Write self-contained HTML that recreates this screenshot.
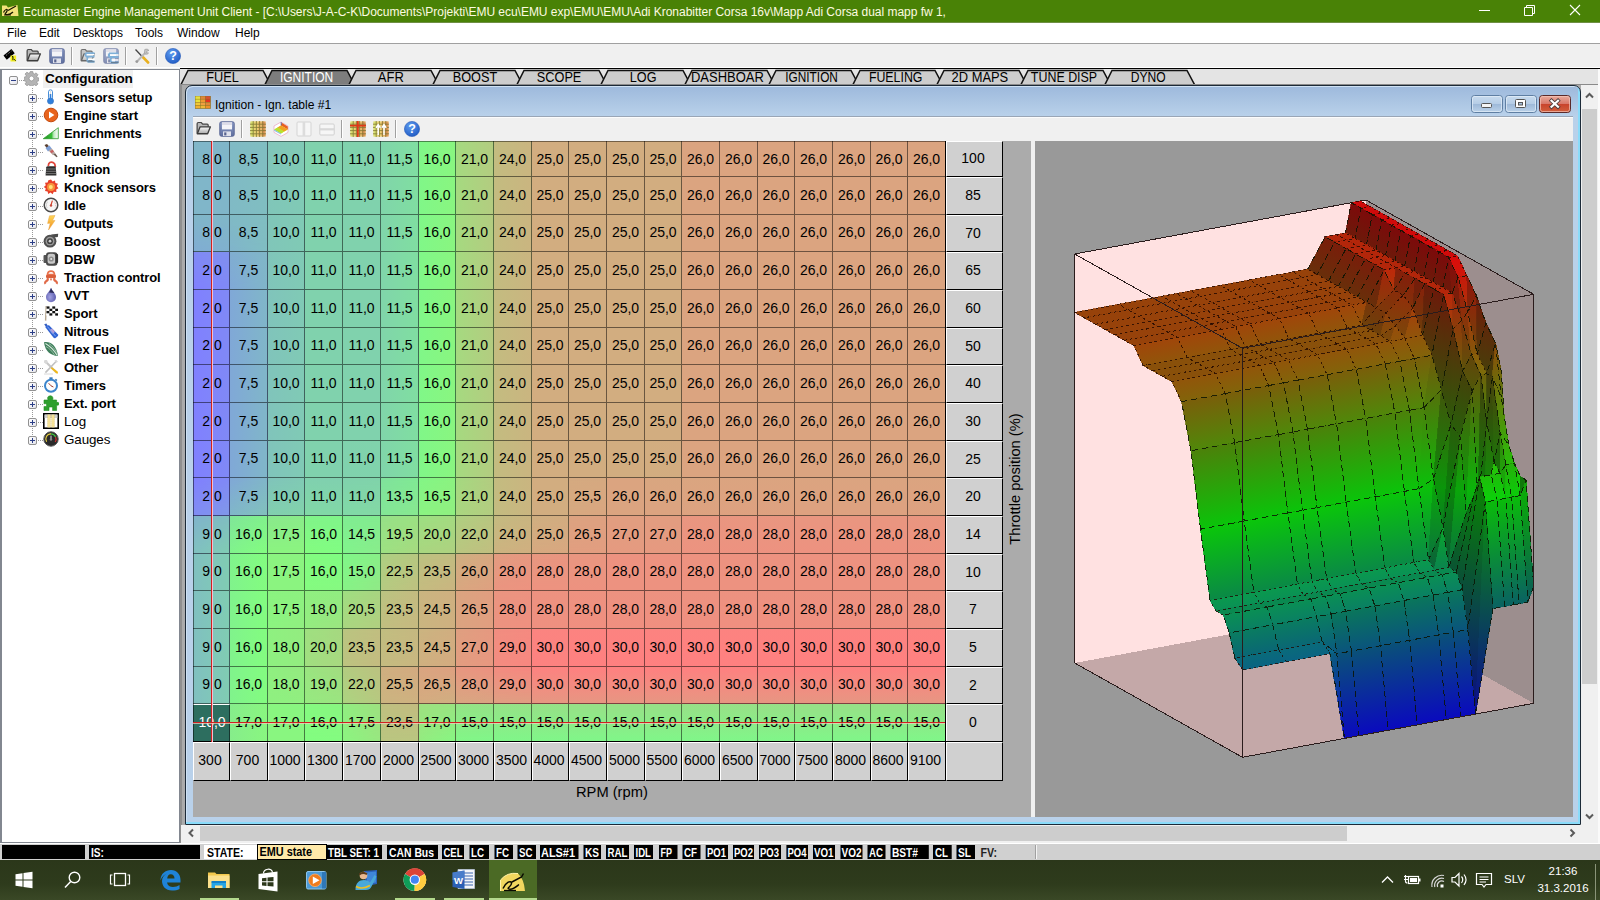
<!DOCTYPE html>
<html><head><meta charset="utf-8"><title>Ecumaster Engine Management Unit Client</title>
<style>
*{box-sizing:border-box;margin:0;padding:0}
html,body{width:1600px;height:900px;overflow:hidden;background:#f0f0f0;font-family:"Liberation Sans",sans-serif;}
.a{position:absolute}
#title{left:0;top:0;width:1600px;height:22px;background:#498206;color:#fdfbe0;font-size:12px;line-height:24px;white-space:nowrap;letter-spacing:-.026px}
#menubar{left:0;top:22px;width:1600px;height:21px;background:#fff;font-size:12px;color:#000}
#menubar span{position:absolute;top:4px;line-height:14px}
#tool{left:0;top:43px;width:1600px;height:26px;background:#f0f0f0;border-top:1px solid #a0a0a0}
#tree{left:0;top:69px;width:180px;height:774px;background:#fff;border:1px solid #828790;border-left:2px solid #828790}
.tn{position:absolute;left:64px;font-weight:bold;font-size:13px;line-height:18px;white-space:nowrap;color:#000;letter-spacing:-.1px}
.pm{width:9px;height:9px;border:1px solid #919191;border-radius:2px;background:linear-gradient(135deg,#fff,#e4e4ec)}
.pm i{position:absolute;background:#2c3f87}
.cell{position:absolute;font-size:14px;text-align:center;color:#000;white-space:nowrap;overflow:hidden;border-right:1px solid rgba(0,0,0,.5);border-bottom:1px solid rgba(0,0,0,.5)}
.cell b{position:relative;font-weight:normal}
.cell i{position:absolute;left:0;top:0;right:0;bottom:0;-webkit-mask-image:linear-gradient(180deg,transparent,#000);mask-image:linear-gradient(180deg,transparent,#000)}
.hd{position:absolute;background:#d0d0d0;border-top:1px solid #fff;border-left:1px solid #fff;border-right:1px solid #000;border-bottom:1px solid #000;font-size:14px;text-align:center;padding-right:3px;color:#000;white-space:nowrap}
.sb{position:absolute;top:845px;height:14px;background:#000;color:#fff;font-weight:bold;font-size:12px;line-height:15px;white-space:nowrap;overflow:hidden;padding-left:1px}
</style></head><body>

<div class="a" id="title"><span class="a" id="ttxt" style="left:23px;top:0">Ecumaster Engine Management Unit Client - [C:\Users\J-A-C-K\Documents\Projekti\EMU ecu\EMU exp\EMU\EMU\Adi Kronabitter Corsa 16v\Mapp Adi Corsa dual mapp fw 1,</span></div>
<div class="a" style="left:0;top:22px;width:1600px;height:1px;background:#6f8f45;z-index:2"></div>
<svg class="a" style="left:0;top:0" width="1600" height="22" viewBox="0 0 1600 22"><path d="M1479 10.500H1490" stroke="#fff" stroke-width="1"/><path d="M1524.500 7.500h8v8h-8zM1526.500 7.500v-2h8v8h-2" fill="none" stroke="#fff" stroke-width="1"/><path d="M1570 5L1580 15M1580 5L1570 15" stroke="#fff" stroke-width="1.100"/><path d="M2 5.500L6.500 5.500L8 7.500L17.500 5L18.500 16L2 16Z" fill="#f4e27a"/><path d="M3.500 12.500C5 9 8 8.500 7 11C6 13.500 4 14 6 14.500C9 15 12 13 13 12M8 10.500L16 6" fill="none" stroke="#1a1a00" stroke-width="1.300"/><path d="M4 15H11" stroke="#1a1a00" stroke-width="1"/></svg>
<div class="a" id="menubar">
<span style="left:7px">File</span>
<span style="left:39px">Edit</span>
<span style="left:73px">Desktops</span>
<span style="left:135px">Tools</span>
<span style="left:177px">Window</span>
<span style="left:235px">Help</span>
</div>
<div class="a" id="tool"></div>
<div class="a" style="left:0;top:67px;width:1600px;height:1px;background:#fff"></div>
<svg class="a" style="left:3px;top:48px" width="15" height="15" viewBox="0 0 16 16"><path d="M0.5 8 L9 1 L12.5 5.5 L4 12.5Z" fill="#000"/><path d="M3.4 7.8 L9 3.2" stroke="#fff" stroke-width=".7" stroke-dasharray="1 1.2"/><rect x="8" y="8" width="6" height="6.4" fill="#f4f020"/><path d="M9.6 9.4 L10.6 9 V13 M12 12 L13.4 13.6" stroke="#000" stroke-width="1" fill="none"/></svg>
<svg class="a" style="left:25px;top:48px" width="17" height="15" viewBox="0 0 16 16"><defs><linearGradient id="fga" x1="0" y1="0" x2="0" y2="1"><stop offset="0" stop-color="#fdfdfd"/><stop offset="1" stop-color="#a8a8a8"/></linearGradient></defs><path d="M1.2 13.2 V3 Q1.2 1.600 2.600 1.600 H5.600 L7.200 3.400 H12 Q13 3.400 13 4.600 V6.400" fill="#b9b9b9" stroke="#454545" stroke-width="1.300"/><path d="M1.4 13.600 L4.400 6.200 H15.400 L12.400 13.600Z" fill="url(#fga)" stroke="#3c3c3c" stroke-width="1.400" stroke-linejoin="round"/></svg>
<svg class="a" style="left:49px;top:48px" width="16" height="16" viewBox="0 0 16 16"><defs><linearGradient id="fla" x1="0" y1="0" x2="0" y2="1"><stop offset="0" stop-color="#8f9fc8"/><stop offset="1" stop-color="#5f6f9f"/></linearGradient></defs><rect x="0.8" y="0.8" width="14.4" height="14.4" rx="1.6" fill="url(#fla)" stroke="#5b6796" stroke-width="1"/><rect x="3" y="1.4" width="10" height="7" fill="#f4f4f8"/><rect x="3" y="1.4" width="10" height="2.6" fill="#dcdce8"/><rect x="4" y="10.4" width="8" height="4.6" fill="#e0e2ec"/><rect x="5.2" y="11.4" width="2.2" height="3" fill="#59648f"/></svg>
<div class="a" style="left:71px;top:47px;width:1px;height:18px;background:#a0a0a0"></div><div class="a" style="left:72px;top:47px;width:1px;height:18px;background:#fff"></div>
<svg class="a" style="left:79px;top:48px" width="17" height="15" viewBox="0 0 16 16"><g opacity=".75"><defs><linearGradient id="fgb" x1="0" y1="0" x2="0" y2="1"><stop offset="0" stop-color="#fdfdfd"/><stop offset="1" stop-color="#a8a8a8"/></linearGradient></defs><path d="M1.2 13.2 V3 Q1.2 1.600 2.600 1.600 H5.600 L7.200 3.400 H12 Q13 3.400 13 4.600 V6.400" fill="#b9b9b9" stroke="#454545" stroke-width="1.300"/><path d="M1.4 13.600 L4.400 6.200 H15.400 L12.400 13.600Z" fill="url(#fgb)" stroke="#3c3c3c" stroke-width="1.400" stroke-linejoin="round"/></g><path d="M6 5.5 H15.5 M6 5.5 V9 M6 9 H15.5 M8 9 V14.5 M8 14.5 H15.5" stroke="#7fb0d8" stroke-width="2.2" fill="none"/><path d="M7 7 H15.5 M8.5 12 H15.5" stroke="#fff" stroke-width="1.4"/><path d="M8 14.6 H15.5" stroke="#5a6a7a" stroke-width=".8"/></svg>
<svg class="a" style="left:103px;top:48px" width="16" height="16" viewBox="0 0 16 16"><g opacity=".75"><defs><linearGradient id="flb" x1="0" y1="0" x2="0" y2="1"><stop offset="0" stop-color="#8f9fc8"/><stop offset="1" stop-color="#5f6f9f"/></linearGradient></defs><rect x="0.8" y="0.8" width="14.4" height="14.4" rx="1.6" fill="url(#flb)" stroke="#5b6796" stroke-width="1"/><rect x="3" y="1.4" width="10" height="7" fill="#f4f4f8"/><rect x="3" y="1.4" width="10" height="2.6" fill="#dcdce8"/><rect x="4" y="10.4" width="8" height="4.6" fill="#e0e2ec"/><rect x="5.2" y="11.4" width="2.2" height="3" fill="#59648f"/></g><path d="M6 5.5 H15.5 M6 5.5 V9 M6 9 H15.5 M8 9 V14.5 M8 14.5 H15.5" stroke="#7fb0d8" stroke-width="2.2" fill="none"/><path d="M7 7 H15.5 M8.5 12 H15.5" stroke="#fff" stroke-width="1.4"/><path d="M8 14.6 H15.5" stroke="#5a6a7a" stroke-width=".8"/></svg>
<div class="a" style="left:125px;top:47px;width:1px;height:18px;background:#a0a0a0"></div><div class="a" style="left:126px;top:47px;width:1px;height:18px;background:#fff"></div>
<svg class="a" style="left:134px;top:48px" width="16" height="16" viewBox="0 0 16 16"><path d="M1.5 1.5 L10 10.5" stroke="#444" stroke-width="1.3"/><path d="M9.2 9.4 L14 14.4" stroke="#e8b020" stroke-width="2.8" stroke-linecap="round"/><path d="M12.2 3.8 L2.6 14" stroke="#b8b8b8" stroke-width="2"/><path d="M10.8 1.4 Q13.4 0.2 15 2.4 L13 3 L12.6 4.6 L14.6 5 Q13.6 6.8 11.2 6.2 Q9.8 4 10.8 1.4Z" fill="#c4c4c4" stroke="#8a8a8a" stroke-width=".5"/><circle cx="2.8" cy="13.6" r="1.4" fill="#9a9a9a"/></svg>
<div class="a" style="left:156px;top:47px;width:1px;height:18px;background:#a0a0a0"></div><div class="a" style="left:157px;top:47px;width:1px;height:18px;background:#fff"></div>
<svg class="a" style="left:165px;top:48px" width="16" height="16" viewBox="0 0 16 16"><defs><radialGradient id="hpa" cx=".4" cy=".3" r=".8"><stop offset="0" stop-color="#5f9cf0"/><stop offset="1" stop-color="#1a55c0"/></radialGradient></defs><circle cx="8" cy="8" r="7.6" fill="url(#hpa)" stroke="#2a5db8" stroke-width=".6"/><text x="8" y="12.4" text-anchor="middle" font-family="Liberation Sans, sans-serif" font-weight="bold" font-size="12.5" fill="#fff">?</text></svg>
<div class="a" id="tree"></div>
<div class="a" style="left:32px;top:88px;width:1px;height:348px;background:repeating-linear-gradient(#999 0,#999 1px,transparent 1px,transparent 2px)"></div>
<div class="a" style="left:19px;top:80px;width:5px;height:1px;background:repeating-linear-gradient(90deg,#999 0,#999 1px,transparent 1px,transparent 2px)"></div>
<div class="a pm" style="left:9px;top:76px"><i style="left:1px;top:3px;width:5px;height:1px"></i></div>
<svg class="a" style="left:24px;top:71px" width="15" height="15" viewBox="0 0 16 16"><path d="M6.6 0.6h2.8l.4 2 1.4.6 1.7-1.2 2 2-1.2 1.7.6 1.4 2 .4v2.8l-2 .4-.6 1.4 1.2 1.7-2 2-1.7-1.2-1.4.6-.4 2H6.600l-.4-2-1.400-.6-1.700 1.200-2-2 1.200-1.700-.6-1.400-2-.4V6.700l2-.4.6-1.400L1.100 3.200l2-2 1.700 1.200 1.400-.6z" fill="#b4b4b4" stroke="#8c8c8c" stroke-width=".7"/><circle cx="8" cy="8" r="2.6" fill="#fff" stroke="#8c8c8c" stroke-width=".7"/></svg>
<div class="tn" style="left:43px;top:70px;width:90px;height:18px;font-size:13.6px;background:#f0f0f0;padding-left:2px">Configuration</div>
<div class="a pm" style="left:28px;top:94px"><i style="left:1px;top:3px;width:5px;height:1px"></i><i style="left:3px;top:1px;width:1px;height:5px"></i></div>
<div class="a" style="left:38px;top:98px;width:5px;height:1px;background:repeating-linear-gradient(90deg,#999 0,#999 1px,transparent 1px,transparent 2px)"></div>
<svg class="a" style="left:43px;top:89px" width="16" height="16" viewBox="0 0 16 16"><rect x="5.5" y="0.8" width="4" height="10" rx="2" fill="#fff" stroke="#4a8fd8" stroke-width="1"/><circle cx="7.5" cy="12" r="3" fill="#2f7fdc" stroke="#3b78c4" stroke-width=".8"/><rect x="6.7" y="5" width="1.6" height="6" fill="#2f7fdc"/><path d="M7 3h1M7 5h1" stroke="#888" stroke-width=".5"/></svg>
<div class="tn" style="top:89px;">Sensors setup</div>
<div class="a pm" style="left:28px;top:112px"><i style="left:1px;top:3px;width:5px;height:1px"></i><i style="left:3px;top:1px;width:1px;height:5px"></i></div>
<div class="a" style="left:38px;top:116px;width:5px;height:1px;background:repeating-linear-gradient(90deg,#999 0,#999 1px,transparent 1px,transparent 2px)"></div>
<svg class="a" style="left:43px;top:107px" width="16" height="16" viewBox="0 0 16 16"><circle cx="8" cy="8" r="6.8" fill="#e8631c"/><circle cx="8" cy="8" r="6.8" fill="none" stroke="#c44a0e" stroke-width="1"/><path d="M6 4.6 L11.4 8 L6 11.4Z" fill="#fff"/></svg>
<div class="tn" style="top:107px;">Engine start</div>
<div class="a pm" style="left:28px;top:130px"><i style="left:1px;top:3px;width:5px;height:1px"></i><i style="left:3px;top:1px;width:1px;height:5px"></i></div>
<div class="a" style="left:38px;top:134px;width:5px;height:1px;background:repeating-linear-gradient(90deg,#999 0,#999 1px,transparent 1px,transparent 2px)"></div>
<svg class="a" style="left:43px;top:125px" width="16" height="16" viewBox="0 0 16 16"><defs><linearGradient id="enr" x1="0" x2="1"><stop offset="0" stop-color="#1f8a1f"/><stop offset=".55" stop-color="#38c038"/><stop offset=".7" stop-color="#bfeabf"/><stop offset="1" stop-color="#fff"/></linearGradient></defs><path d="M0.3 13.7 L15.3 2.7 V13.7Z" fill="url(#enr)" stroke="#2c9a2c" stroke-width=".8"/></svg>
<div class="tn" style="top:125px;">Enrichments</div>
<div class="a pm" style="left:28px;top:148px"><i style="left:1px;top:3px;width:5px;height:1px"></i><i style="left:3px;top:1px;width:1px;height:5px"></i></div>
<div class="a" style="left:38px;top:152px;width:5px;height:1px;background:repeating-linear-gradient(90deg,#999 0,#999 1px,transparent 1px,transparent 2px)"></div>
<svg class="a" style="left:43px;top:143px" width="16" height="16" viewBox="0 0 16 16"><path d="M1.5 2 L4 1 L6 3.2 L4 5.5Z" fill="#5a4030"/><path d="M2.5 5 L6.5 2.5 L9 6 L5 8.5Z" fill="#7d9fd6"/><path d="M5.5 7.5 L8.8 5.5 L12.5 10.5 L10 12.2Z" fill="#b9a6a0"/><path d="M7 8.3 L9.6 6.7 L11 8.6 L8.4 10.2Z" fill="#c76060"/><path d="M10.4 11.6 L12.3 10.4 L14.6 13.4 L13.6 14.2Z" fill="#6a5a50"/></svg>
<div class="tn" style="top:143px;">Fueling</div>
<div class="a pm" style="left:28px;top:166px"><i style="left:1px;top:3px;width:5px;height:1px"></i><i style="left:3px;top:1px;width:1px;height:5px"></i></div>
<div class="a" style="left:38px;top:170px;width:5px;height:1px;background:repeating-linear-gradient(90deg,#999 0,#999 1px,transparent 1px,transparent 2px)"></div>
<svg class="a" style="left:43px;top:161px" width="16" height="16" viewBox="0 0 16 16"><path d="M5.5 5 C5 1.5 8 0.2 10.5 1.8 C12.5 3 12.2 5 12.3 6" fill="none" stroke="#e0453a" stroke-width="1.8"/><path d="M2.6 14.5 L3.2 6.5 Q3.4 5.2 5 5.2 H11 Q12.6 5.2 12.8 6.5 L13.4 14.5Z" fill="#2b2b2b"/><path d="M3 8h10M2.9 10.3h10.3M2.8 12.6h10.5" stroke="#8a8a8a" stroke-width=".8"/></svg>
<div class="tn" style="top:161px;">Ignition</div>
<div class="a pm" style="left:28px;top:184px"><i style="left:1px;top:3px;width:5px;height:1px"></i><i style="left:3px;top:1px;width:1px;height:5px"></i></div>
<div class="a" style="left:38px;top:188px;width:5px;height:1px;background:repeating-linear-gradient(90deg,#999 0,#999 1px,transparent 1px,transparent 2px)"></div>
<svg class="a" style="left:43px;top:179px" width="16" height="16" viewBox="0 0 16 16"><path d="M8 0.6 L9.6 2.4 L12 1.6 L12.4 4 L15 4.8 L13.8 7 L15.4 9.2 L13.2 10.4 L13.4 13 L10.8 12.8 L9.6 15.2 L7.6 13.6 L5.2 15 L4.6 12.4 L2 12 L2.8 9.6 L0.8 8 L2.8 6.2 L2 3.8 L4.6 3.6 L5.4 1.2Z" fill="#e8402a"/><circle cx="8" cy="8" r="4" fill="#f8923a"/><circle cx="7.8" cy="8" r="2" fill="#ffe27a"/></svg>
<div class="tn" style="top:179px;">Knock sensors</div>
<div class="a pm" style="left:28px;top:202px"><i style="left:1px;top:3px;width:5px;height:1px"></i><i style="left:3px;top:1px;width:1px;height:5px"></i></div>
<div class="a" style="left:38px;top:206px;width:5px;height:1px;background:repeating-linear-gradient(90deg,#999 0,#999 1px,transparent 1px,transparent 2px)"></div>
<svg class="a" style="left:43px;top:197px" width="16" height="16" viewBox="0 0 16 16"><circle cx="8" cy="8" r="6.8" fill="#f6f6f6" stroke="#4a4a4a" stroke-width="1.5"/><path d="M8 8 L9.4 3.6" stroke="#d8402a" stroke-width="1.2"/><circle cx="8" cy="8.5" r="1.2" fill="#c84a3a"/><path d="M4 10.5 A4.6 4.6 0 0 1 5 4.6" fill="none" stroke="#999" stroke-width=".8" stroke-dasharray="1 1"/><path d="M11 4.6 A4.6 4.6 0 0 1 12 10.5" fill="none" stroke="#e09090" stroke-width=".8" stroke-dasharray="1 1"/></svg>
<div class="tn" style="top:197px;">Idle</div>
<div class="a pm" style="left:28px;top:220px"><i style="left:1px;top:3px;width:5px;height:1px"></i><i style="left:3px;top:1px;width:1px;height:5px"></i></div>
<div class="a" style="left:38px;top:224px;width:5px;height:1px;background:repeating-linear-gradient(90deg,#999 0,#999 1px,transparent 1px,transparent 2px)"></div>
<svg class="a" style="left:43px;top:215px" width="16" height="16" viewBox="0 0 16 16"><defs><linearGradient id="outp" x1="0" y1="0" x2="0" y2="1"><stop offset="0" stop-color="#ffd95a"/><stop offset="1" stop-color="#f08a1c"/></linearGradient></defs><path d="M6.5 0.8 L12 0.5 L9.5 5.5 L12 5.5 L5.5 15 L7.2 8.2 L4.6 8.4Z" fill="url(#outp)" stroke="#e8a848" stroke-width=".5"/></svg>
<div class="tn" style="top:215px;">Outputs</div>
<div class="a pm" style="left:28px;top:238px"><i style="left:1px;top:3px;width:5px;height:1px"></i><i style="left:3px;top:1px;width:1px;height:5px"></i></div>
<div class="a" style="left:38px;top:242px;width:5px;height:1px;background:repeating-linear-gradient(90deg,#999 0,#999 1px,transparent 1px,transparent 2px)"></div>
<svg class="a" style="left:43px;top:233px" width="16" height="16" viewBox="0 0 16 16"><path d="M8 1.6 L15.2 0.8 L14.8 4 L11 4.6Z" fill="#4a4a4a"/><circle cx="7" cy="8.2" r="6.4" fill="#4f4f4f"/><circle cx="7" cy="8.2" r="4.4" fill="#9a9a9a"/><circle cx="7" cy="8.2" r="2.9" fill="#3f3f3f"/><circle cx="7" cy="8.2" r="1.4" fill="#d0d0d0"/></svg>
<div class="tn" style="top:233px;">Boost</div>
<div class="a pm" style="left:28px;top:256px"><i style="left:1px;top:3px;width:5px;height:1px"></i><i style="left:3px;top:1px;width:1px;height:5px"></i></div>
<div class="a" style="left:38px;top:260px;width:5px;height:1px;background:repeating-linear-gradient(90deg,#999 0,#999 1px,transparent 1px,transparent 2px)"></div>
<svg class="a" style="left:43px;top:251px" width="16" height="16" viewBox="0 0 16 16"><rect x="0.5" y="4" width="4" height="8" rx="1" fill="#555"/><rect x="3" y="1.2" width="11.5" height="13.5" rx="3" fill="#4a4a4a"/><rect x="4.6" y="2.8" width="7.6" height="10" rx="2.5" fill="#c9c9c9"/><circle cx="8.2" cy="8" r="2.6" fill="#8d8d8d"/><circle cx="8.2" cy="8" r="1" fill="#e8e8e8"/><rect x="12.5" y="3" width="2.6" height="9" rx="1" fill="#333"/></svg>
<div class="tn" style="top:251px;">DBW</div>
<div class="a pm" style="left:28px;top:274px"><i style="left:1px;top:3px;width:5px;height:1px"></i><i style="left:3px;top:1px;width:1px;height:5px"></i></div>
<div class="a" style="left:38px;top:278px;width:5px;height:1px;background:repeating-linear-gradient(90deg,#999 0,#999 1px,transparent 1px,transparent 2px)"></div>
<svg class="a" style="left:43px;top:269px" width="16" height="16" viewBox="0 0 16 16"><path d="M3.6 5.5 Q4 1.2 8 1.2 Q12 1.2 12.4 5.5 L12.8 8 H3.2Z" fill="#e8714c"/><path d="M5.4 4.8 Q5.6 3 8 3 Q10.4 3 10.6 4.8Z" fill="#fff"/><rect x="3" y="6" width="10" height="3" rx="1" fill="#d95f3c"/><path d="M4.5 9 Q5.5 11 3.2 12.2 Q1.4 13.4 2.6 14.8 M11.5 9 Q10.5 11 12.8 12.2 Q14.6 13.4 13.4 14.8" fill="none" stroke="#e06a48" stroke-width="2.2"/><path d="M6.6 9.5 L8 12 L9.4 9.5Z" fill="#e8714c"/></svg>
<div class="tn" style="top:269px;">Traction control</div>
<div class="a pm" style="left:28px;top:292px"><i style="left:1px;top:3px;width:5px;height:1px"></i><i style="left:3px;top:1px;width:1px;height:5px"></i></div>
<div class="a" style="left:38px;top:296px;width:5px;height:1px;background:repeating-linear-gradient(90deg,#999 0,#999 1px,transparent 1px,transparent 2px)"></div>
<svg class="a" style="left:43px;top:287px" width="16" height="16" viewBox="0 0 16 16"><defs><radialGradient id="vvt" cx=".4" cy=".65" r=".6"><stop offset="0" stop-color="#a0a0e0"/><stop offset="1" stop-color="#5c5cae"/></radialGradient></defs><path d="M8 0.8 C8.8 4 13 6.6 13 10.2 A5 5 0 0 1 3 10.2 C3 6.6 7.2 4 8 0.8Z" fill="url(#vvt)"/><path d="M8 0.8 C8.6 3 10.4 4.6 11.4 6 L6 5.4 C7 4 7.6 2.6 8 0.8Z" fill="#2c2c5a"/></svg>
<div class="tn" style="top:287px;">VVT</div>
<div class="a pm" style="left:28px;top:310px"><i style="left:1px;top:3px;width:5px;height:1px"></i><i style="left:3px;top:1px;width:1px;height:5px"></i></div>
<div class="a" style="left:38px;top:314px;width:5px;height:1px;background:repeating-linear-gradient(90deg,#999 0,#999 1px,transparent 1px,transparent 2px)"></div>
<svg class="a" style="left:43px;top:305px" width="16" height="16" viewBox="0 0 16 16"><path d="M3.2 1 L2.6 15.6" stroke="#b8a890" stroke-width="1.4"/><path d="M3.6 1.4 H15 V10.6 H3.2Z" fill="#fff"/><g fill="#111"><rect x="3.6" y="1.4" width="2.9" height="2.3"/><rect x="9.3" y="1.4" width="2.9" height="2.3"/><rect x="6.4" y="3.7" width="2.9" height="2.3"/><rect x="12.2" y="3.7" width="2.8" height="2.3"/><rect x="3.5" y="6" width="2.9" height="2.3"/><rect x="9.3" y="6" width="2.9" height="2.3"/><rect x="6.4" y="8.3" width="2.9" height="2.3"/><rect x="12.2" y="8.3" width="2.8" height="2.3"/></g></svg>
<div class="tn" style="top:305px;">Sport</div>
<div class="a pm" style="left:28px;top:328px"><i style="left:1px;top:3px;width:5px;height:1px"></i><i style="left:3px;top:1px;width:1px;height:5px"></i></div>
<div class="a" style="left:38px;top:332px;width:5px;height:1px;background:repeating-linear-gradient(90deg,#999 0,#999 1px,transparent 1px,transparent 2px)"></div>
<svg class="a" style="left:43px;top:323px" width="16" height="16" viewBox="0 0 16 16"><path d="M1.2 1.2 L3.4 0.6 L4.6 2.6 L3 4Z" fill="#3a62c0"/><path d="M2.6 4.4 Q2.4 3 4 2.6 L6 2.2 L15 11.4 Q15.6 12.6 14.4 13.6 L12.6 15 Q11.4 15.6 10.4 14.6Z" fill="#2f63d4"/><path d="M6.4 7 L9 5.4 L12 9 L9.4 10.8Z" fill="#b9a0d8"/><path d="M4.4 3.6 L12.6 13.2" stroke="#7fa6f0" stroke-width="1"/></svg>
<div class="tn" style="top:323px;">Nitrous</div>
<div class="a pm" style="left:28px;top:346px"><i style="left:1px;top:3px;width:5px;height:1px"></i><i style="left:3px;top:1px;width:1px;height:5px"></i></div>
<div class="a" style="left:38px;top:350px;width:5px;height:1px;background:repeating-linear-gradient(90deg,#999 0,#999 1px,transparent 1px,transparent 2px)"></div>
<svg class="a" style="left:43px;top:341px" width="16" height="16" viewBox="0 0 16 16"><path d="M1 1.2 C7 0 13.5 4 15 14.8 C9 15 2 11 1 1.2Z" fill="#3f7f5c"/><path d="M2.4 2.4 C7 5 11 9 14 14" fill="none" stroke="#d8eadc" stroke-width="1.1"/><path d="M3 5.5 C6 7 9 10 11.5 14M6 2.6 C9 4.6 12 8 13.6 11.5" fill="none" stroke="#a8c8b0" stroke-width=".8"/></svg>
<div class="tn" style="top:341px;">Flex Fuel</div>
<div class="a pm" style="left:28px;top:364px"><i style="left:1px;top:3px;width:5px;height:1px"></i><i style="left:3px;top:1px;width:1px;height:5px"></i></div>
<div class="a" style="left:38px;top:368px;width:5px;height:1px;background:repeating-linear-gradient(90deg,#999 0,#999 1px,transparent 1px,transparent 2px)"></div>
<svg class="a" style="left:43px;top:359px" width="16" height="16" viewBox="0 0 16 16"><path d="M2 2 L13.5 13.5" stroke="#c8c8c8" stroke-width="2.2"/><path d="M1.4 1 L4 1 L5 3.6 L3 5 L1 3.6Z" fill="#d8d8d8"/><path d="M13.8 1.8 L2.4 13.6" stroke="#c0c0c0" stroke-width="1.6"/><path d="M8.6 8 L14.6 12.6 Q15.6 14 14.2 15 L8 9.6Z" fill="#f0b818"/><path d="M11.4 1 Q14 0.6 15 3 L13 3.4 L12.4 2.6Z" fill="#d8d8d8"/><path d="M1 15 H10" stroke="#d8d8d8" stroke-width="1"/></svg>
<div class="tn" style="top:359px;">Other</div>
<div class="a pm" style="left:28px;top:382px"><i style="left:1px;top:3px;width:5px;height:1px"></i><i style="left:3px;top:1px;width:1px;height:5px"></i></div>
<div class="a" style="left:38px;top:386px;width:5px;height:1px;background:repeating-linear-gradient(90deg,#999 0,#999 1px,transparent 1px,transparent 2px)"></div>
<svg class="a" style="left:43px;top:377px" width="16" height="16" viewBox="0 0 16 16"><rect x="6.4" y="0.3" width="3.2" height="2" fill="#3a78b8"/><path d="M12.4 2.2 L13.8 3.6" stroke="#3a78b8" stroke-width="1.6"/><circle cx="8" cy="8.8" r="6" fill="#fdfdfd" stroke="#3b85cc" stroke-width="2"/><path d="M8 8.8 L5.6 6.2 M8 8.8 L10.4 10" stroke="#a04030" stroke-width="1"/></svg>
<div class="tn" style="top:377px;">Timers</div>
<div class="a pm" style="left:28px;top:400px"><i style="left:1px;top:3px;width:5px;height:1px"></i><i style="left:3px;top:1px;width:1px;height:5px"></i></div>
<div class="a" style="left:38px;top:404px;width:5px;height:1px;background:repeating-linear-gradient(90deg,#999 0,#999 1px,transparent 1px,transparent 2px)"></div>
<svg class="a" style="left:43px;top:395px" width="16" height="16" viewBox="0 0 16 16"><path d="M1 5 H5 Q3.8 2.4 5.6 1.2 Q7.6 0.2 9.2 1.4 Q10.6 2.8 9.6 5 H13.6 V7.6 Q15.6 6.6 16 8.6 Q16 11 13.6 10 V15.6 H9.6 V12 H6 V15.6 H1 V11.4 Q3.6 12.4 3.8 10 Q3.6 7.8 1 8.8Z" fill="#2e9f2e" stroke="#1f8a1f" stroke-width=".6"/></svg>
<div class="tn" style="top:395px;">Ext. port</div>
<div class="a pm" style="left:28px;top:418px"><i style="left:1px;top:3px;width:5px;height:1px"></i><i style="left:3px;top:1px;width:1px;height:5px"></i></div>
<div class="a" style="left:38px;top:422px;width:5px;height:1px;background:repeating-linear-gradient(90deg,#999 0,#999 1px,transparent 1px,transparent 2px)"></div>
<svg class="a" style="left:43px;top:413px" width="16" height="16" viewBox="0 0 16 16"><rect x="0.8" y="0.8" width="14.4" height="14.4" fill="#fff" stroke="#000" stroke-width="1.6"/><rect x="1.6" y="1.6" width="12.8" height="3.4" fill="#d0d0d0"/><rect x="4.6" y="1.6" width="2.8" height="12.8" fill="#f7e49a"/><rect x="8.6" y="1.6" width="2.8" height="12.8" fill="#f7e49a"/><path d="M4.6 1.6v12.8M7.4 1.6v12.8M8.6 1.6v12.8M11.4 1.6v12.8" stroke="#c8a850" stroke-width=".5" stroke-dasharray="1 1"/></svg>
<div class="tn" style="top:413px;font-weight:normal;font-size:13.4px;">Log</div>
<div class="a pm" style="left:28px;top:436px"><i style="left:1px;top:3px;width:5px;height:1px"></i><i style="left:3px;top:1px;width:1px;height:5px"></i></div>
<div class="a" style="left:38px;top:440px;width:5px;height:1px;background:repeating-linear-gradient(90deg,#999 0,#999 1px,transparent 1px,transparent 2px)"></div>
<svg class="a" style="left:43px;top:431px" width="16" height="16" viewBox="0 0 16 16"><circle cx="8" cy="8" r="7.2" fill="#2a2a2a"/><circle cx="8" cy="8" r="7.2" fill="none" stroke="#555" stroke-width="1"/><path d="M3.6 10.8 A5.2 5.2 0 0 1 8 2.8" fill="none" stroke="#e8d040" stroke-width="1.2"/><path d="M8 2.8 A5.2 5.2 0 0 1 12.6 6" fill="none" stroke="#40c040" stroke-width="1.2"/><path d="M12.6 6 A5.2 5.2 0 0 1 12.2 11" fill="none" stroke="#d83030" stroke-width="1.2"/><path d="M8 8.4 V4.6" stroke="#ddd" stroke-width="1"/><circle cx="8" cy="8.6" r="1.2" fill="#888"/></svg>
<div class="tn" style="top:431px;font-weight:normal;font-size:13.4px;">Gauges</div>
<div class="a" style="left:180px;top:68px;width:1420px;height:1px;background:#000"></div>
<div class="a" style="left:180px;top:69px;width:1420px;height:16px;background:#e4e4e4"></div>
<svg class="a" style="left:180px;top:69px" width="1420" height="15" font-family="Liberation Sans, sans-serif" font-size="14">
<polygon points="1,15.500 8,1.500 83,1.500 90.5,15.500" fill="#cdcdcd"/><polyline points="1,15.500 8,1.500 83,1.500 90.5,15.500" fill="none" stroke="#111" stroke-width="1.500"/>
<polygon points="85,15.500 92,1.500 167,1.500 174.5,15.500" fill="#7d7d7d"/><polyline points="85,15.500 92,1.500 167,1.500 174.5,15.500" fill="none" stroke="#111" stroke-width="1.500"/>
<polygon points="169,15.500 176,1.500 251,1.500 258.5,15.500" fill="#cdcdcd"/><polyline points="169,15.500 176,1.500 251,1.500 258.5,15.500" fill="none" stroke="#111" stroke-width="1.500"/>
<polygon points="253,15.500 260,1.500 335,1.500 342.5,15.500" fill="#cdcdcd"/><polyline points="253,15.500 260,1.500 335,1.500 342.5,15.500" fill="none" stroke="#111" stroke-width="1.500"/>
<polygon points="337,15.500 344,1.500 419,1.500 426.5,15.500" fill="#cdcdcd"/><polyline points="337,15.500 344,1.500 419,1.500 426.5,15.500" fill="none" stroke="#111" stroke-width="1.500"/>
<polygon points="421,15.500 428,1.500 503,1.500 510.5,15.500" fill="#cdcdcd"/><polyline points="421,15.500 428,1.500 503,1.500 510.5,15.500" fill="none" stroke="#111" stroke-width="1.500"/>
<polygon points="505,15.500 512,1.500 587,1.500 594.5,15.500" fill="#cdcdcd"/><polyline points="505,15.500 512,1.500 587,1.500 594.5,15.500" fill="none" stroke="#111" stroke-width="1.500"/>
<polygon points="589,15.500 596,1.500 671,1.500 678.5,15.500" fill="#cdcdcd"/><polyline points="589,15.500 596,1.500 671,1.500 678.5,15.500" fill="none" stroke="#111" stroke-width="1.500"/>
<polygon points="673,15.500 680,1.500 755,1.500 762.5,15.500" fill="#cdcdcd"/><polyline points="673,15.500 680,1.500 755,1.500 762.5,15.500" fill="none" stroke="#111" stroke-width="1.500"/>
<polygon points="757,15.500 764,1.500 839,1.500 846.5,15.500" fill="#cdcdcd"/><polyline points="757,15.500 764,1.500 839,1.500 846.5,15.500" fill="none" stroke="#111" stroke-width="1.500"/>
<polygon points="841,15.500 848,1.500 923,1.500 930.5,15.500" fill="#cdcdcd"/><polyline points="841,15.500 848,1.500 923,1.500 930.5,15.500" fill="none" stroke="#111" stroke-width="1.500"/>
<polygon points="925,15.500 932,1.500 1007,1.500 1014.5,15.500" fill="#cdcdcd"/><polyline points="925,15.500 932,1.500 1007,1.500 1014.5,15.500" fill="none" stroke="#111" stroke-width="1.500"/>
<text x="42.5" y="13" text-anchor="middle" textLength="32.5" lengthAdjust="spacingAndGlyphs" fill="#000">FUEL</text>
<text x="126.6" y="13" text-anchor="middle" textLength="53.4" lengthAdjust="spacingAndGlyphs" fill="#fff">IGNITION</text>
<text x="210.8" y="13" text-anchor="middle" textLength="26.0" lengthAdjust="spacingAndGlyphs" fill="#000">AFR</text>
<text x="295.0" y="13" text-anchor="middle" textLength="44.5" lengthAdjust="spacingAndGlyphs" fill="#000">BOOST</text>
<text x="379.1" y="13" text-anchor="middle" textLength="44.5" lengthAdjust="spacingAndGlyphs" fill="#000">SCOPE</text>
<text x="463.2" y="13" text-anchor="middle" textLength="26.7" lengthAdjust="spacingAndGlyphs" fill="#000">LOG</text>
<text x="547.4" y="13" text-anchor="middle" textLength="72.8" lengthAdjust="spacingAndGlyphs" fill="#000">DASHBOAR</text>
<text x="631.6" y="13" text-anchor="middle" textLength="52.6" lengthAdjust="spacingAndGlyphs" fill="#000">IGNITION</text>
<text x="715.7" y="13" text-anchor="middle" textLength="53.6" lengthAdjust="spacingAndGlyphs" fill="#000">FUELING</text>
<text x="799.9" y="13" text-anchor="middle" textLength="56.6" lengthAdjust="spacingAndGlyphs" fill="#000">2D MAPS</text>
<text x="884.0" y="13" text-anchor="middle" textLength="66.3" lengthAdjust="spacingAndGlyphs" fill="#000">TUNE DISP</text>
<text x="968.2" y="13" text-anchor="middle" textLength="34.9" lengthAdjust="spacingAndGlyphs" fill="#000">DYNO</text>
</svg>
<div class="a" style="left:180px;top:84px;width:1419px;height:1px;background:#8a8a8a"></div>
<div class="a" style="left:180px;top:85px;width:1401px;height:740px;background:#ababab"></div>
<div class="a" style="left:185px;top:85px;width:1396px;height:740px;border:1px solid #1c2a38;border-radius:7px 7px 1px 1px;background:linear-gradient(#9db9dc 0,#b9d1ea 30px,#b9d1ea 100%);box-shadow:inset -2px -2px 0 #8adcfa,inset 1px 1px 0 #cfe2f4"></div>
<div class="a" style="left:193px;top:116px;width:1380px;height:25px;background:#f0f0f0"></div>
<div class="a" style="left:215px;top:98px;font-size:12.1px;color:#000;white-space:nowrap">Ignition - Ign. table #1</div>
<svg class="a" style="left:195px;top:96px" width="16" height="13" viewBox="0 0 16 13"><rect x="0" y="0" width="15.800" height="12.800" fill="#8a7428"/><rect x="0.4" y="0.3" width="4.6" height="2.6" fill="#e6e040"/><rect x="5.5" y="0.3" width="4.6" height="2.6" fill="#e08838"/><rect x="10.6" y="0.3" width="4.6" height="2.6" fill="#d85030"/><rect x="0.4" y="3.4" width="4.6" height="2.6" fill="#e8e038"/><rect x="5.5" y="3.4" width="4.6" height="2.6" fill="#f09830"/><rect x="10.6" y="3.4" width="4.6" height="2.6" fill="#e83020"/><rect x="0.4" y="6.5" width="4.6" height="2.6" fill="#f0c838"/><rect x="5.5" y="6.5" width="4.6" height="2.6" fill="#f0a040"/><rect x="10.6" y="6.5" width="4.6" height="2.6" fill="#e08838"/><rect x="0.4" y="9.6" width="4.6" height="2.6" fill="#f0b030"/><rect x="5.5" y="9.6" width="4.6" height="2.6" fill="#f0b838"/><rect x="10.6" y="9.6" width="4.6" height="2.6" fill="#f09028"/></svg>
<svg class="a" style="left:1465px;top:92px" width="112" height="24" viewBox="1465 92 112 24"><defs><linearGradient id="cb1" x1="0" y1="0" x2="0" y2="1"><stop offset="0" stop-color="#c9dcef"/><stop offset=".48" stop-color="#b6cde6"/><stop offset=".5" stop-color="#9db8d8"/><stop offset="1" stop-color="#bcd3ea"/></linearGradient><linearGradient id="cb2" x1="0" y1="0" x2="0" y2="1"><stop offset="0" stop-color="#e9ad9f"/><stop offset=".48" stop-color="#d9786a"/><stop offset=".5" stop-color="#c8432c"/><stop offset="1" stop-color="#d2603e"/></linearGradient></defs><rect x="1471.500" y="95.500" width="31" height="17" rx="3" fill="url(#cb1)" stroke="#5f7fa3"/><rect x="1472.500" y="96.500" width="29" height="15" rx="2" fill="none" stroke="#e4eef8" stroke-opacity=".7"/><rect x="1505.500" y="95.500" width="31" height="17" rx="3" fill="url(#cb1)" stroke="#5f7fa3"/><rect x="1506.500" y="96.500" width="29" height="15" rx="2" fill="none" stroke="#e4eef8" stroke-opacity=".7"/><rect x="1539.500" y="95.500" width="31" height="17" rx="3" fill="url(#cb2)" stroke="#5a2a2a"/><rect x="1540.500" y="96.500" width="29" height="15" rx="2" fill="none" stroke="#f4c4b8" stroke-opacity=".7"/><rect x="1481.500" y="103.500" width="10" height="4" rx="1" fill="#f4f4f4" stroke="#555" stroke-width="1"/><rect x="1515.500" y="99.500" width="10" height="8" rx="1" fill="#fff" stroke="#555" stroke-width="1"/><rect x="1518.500" y="102.500" width="4" height="2.500" fill="#a9c1de" stroke="#555" stroke-width="1"/><path d="M1551.500 100.700L1558 106.800M1558 100.700L1551.500 106.800" stroke="#4a3a3a" stroke-width="3.800" stroke-linecap="square"/><path d="M1551.500 100.700L1558 106.800M1558 100.700L1551.500 106.800" stroke="#fff" stroke-width="2.200" stroke-linecap="square"/></svg>
<div class="a" style="left:193px;top:116px;width:1380px;height:1px;background:#9aa6b6"></div><div class="a" style="left:193px;top:117px;width:1380px;height:1px;background:#fcfcfc"></div>
<svg class="a" style="left:195px;top:121px" width="17" height="15" viewBox="0 0 16 16"><defs><linearGradient id="fgc" x1="0" y1="0" x2="0" y2="1"><stop offset="0" stop-color="#fdfdfd"/><stop offset="1" stop-color="#a8a8a8"/></linearGradient></defs><path d="M1.2 13.2 V3 Q1.2 1.600 2.600 1.600 H5.600 L7.200 3.400 H12 Q13 3.400 13 4.600 V6.400" fill="#b9b9b9" stroke="#454545" stroke-width="1.300"/><path d="M1.4 13.600 L4.400 6.200 H15.400 L12.400 13.600Z" fill="url(#fgc)" stroke="#3c3c3c" stroke-width="1.400" stroke-linejoin="round"/></svg>
<svg class="a" style="left:219px;top:121px" width="16" height="16" viewBox="0 0 16 16"><defs><linearGradient id="flc" x1="0" y1="0" x2="0" y2="1"><stop offset="0" stop-color="#8f9fc8"/><stop offset="1" stop-color="#5f6f9f"/></linearGradient></defs><rect x="0.8" y="0.8" width="14.4" height="14.4" rx="1.6" fill="url(#flc)" stroke="#5b6796" stroke-width="1"/><rect x="3" y="1.4" width="10" height="7" fill="#f4f4f8"/><rect x="3" y="1.4" width="10" height="2.6" fill="#dcdce8"/><rect x="4" y="10.4" width="8" height="4.6" fill="#e0e2ec"/><rect x="5.2" y="11.4" width="2.2" height="3" fill="#59648f"/></svg>
<div class="a" style="left:241px;top:120px;width:1px;height:18px;background:#a0a0a0"></div><div class="a" style="left:242px;top:120px;width:1px;height:18px;background:#fff"></div>
<svg class="a" style="left:250px;top:121px" width="16" height="16" viewBox="0 0 16 16"><rect x="0.5" y="0.5" width="15" height="15" fill="#e9d98a"/><rect x="0.5" y="0.5" width="3.75" height="15" fill="#d8e070"/><rect x="4.2" y="0.5" width="3.75" height="15" fill="#e8d070"/><rect x="8.0" y="0.5" width="3.75" height="15" fill="#e8b868"/><rect x="11.8" y="0.5" width="3.75" height="15" fill="#e09858"/><path d="M0 3.2H16M0 6.4H16M0 9.6H16M0 12.8H16M3.2 0V16M6.4 0V16M9.6 0V16M12.8 0V16" stroke="#7a7030" stroke-width=".9" opacity=".85"/></svg>
<svg class="a" style="left:273px;top:121px" width="16" height="16" viewBox="0 0 16 16"><path d="M8 1 L15 5 V11.400 L8 15.400 L1 11.400 V5Z" fill="#fff" stroke="#e8a0c0" stroke-width=".7"/><path d="M1.2 8.6 L8 4.4 L14.8 8.4 L8 12.400Z" fill="#d8e838"/><path d="M8 4.4 L8.8 1.8 L14.8 5.4 V8.4Z" fill="#e86020"/><path d="M8 4.4 L14.8 8.4 L11 10.600 L4.600 6.600Z" fill="#f0a020"/><path d="M1.2 8.6 L4.6 6.6 L11 10.6 L8 12.4Z" fill="#b8e030"/><path d="M1.2 8.6 L8 12.4 V13.600 L1.200 9.800Z" fill="#80c0e0"/><path d="M8.2 1.2 L8.2 4.4" stroke="#404080" stroke-width=".8"/></svg>
<svg class="a" style="left:296px;top:121px" width="16" height="16" viewBox="0 0 16 16"><rect x="1" y="1" width="14" height="14" rx="1" fill="#f6f6f6" stroke="#d4d4d4" stroke-width="1"/><rect x="6.600" y="1" width="2.600" height="14" fill="#dcdcdc"/></svg>
<svg class="a" style="left:319px;top:121px" width="16" height="16" viewBox="0 0 16 16"><rect x="0.800" y="3" width="14.400" height="11" rx="1" fill="#f6f6f6" stroke="#d0d0d0" stroke-width="1"/><rect x="0.800" y="7.200" width="14.400" height="2.200" fill="#d8d8d8"/></svg>
<div class="a" style="left:341px;top:120px;width:1px;height:18px;background:#a0a0a0"></div><div class="a" style="left:342px;top:120px;width:1px;height:18px;background:#fff"></div>
<svg class="a" style="left:350px;top:121px" width="16" height="16" viewBox="0 0 16 16"><rect x="0.5" y="0.5" width="15" height="15" fill="#e9d98a"/><rect x="0.5" y="0.5" width="3.75" height="15" fill="#d8e070"/><rect x="4.2" y="0.5" width="3.75" height="15" fill="#e8d070"/><rect x="8.0" y="0.5" width="3.75" height="15" fill="#e8b868"/><rect x="11.8" y="0.5" width="3.75" height="15" fill="#e09858"/><path d="M0 3.2H16M0 6.4H16M0 9.6H16M0 12.8H16M3.2 0V16M6.4 0V16M9.6 0V16M12.8 0V16" stroke="#7a7030" stroke-width=".9" opacity=".85"/><path d="M0 4.6H16M7.8 0V16" stroke="#e03818" stroke-width="1.8"/></svg>
<svg class="a" style="left:373px;top:121px" width="16" height="16" viewBox="0 0 16 16"><rect x="0.5" y="0.5" width="15" height="15" fill="#e9d98a"/><rect x="0.5" y="0.5" width="3.75" height="15" fill="#d8e070"/><rect x="4.2" y="0.5" width="3.75" height="15" fill="#e8d070"/><rect x="8.0" y="0.5" width="3.75" height="15" fill="#e8b868"/><rect x="11.8" y="0.5" width="3.75" height="15" fill="#e09858"/><path d="M0 3.2H16M0 6.4H16M0 9.6H16M0 12.8H16M3.2 0V16M6.4 0V16M9.6 0V16M12.8 0V16" stroke="#7a7030" stroke-width=".9" opacity=".85"/><path d="M5.2 14V4.5M3 6.8L5.2 3.6L7.4 6.8M11 14V4.5M8.800 6.800L11 3.600L13.200 6.800" stroke="#fff" stroke-width="1.5" fill="none"/></svg>
<div class="a" style="left:395px;top:120px;width:1px;height:18px;background:#a0a0a0"></div><div class="a" style="left:396px;top:120px;width:1px;height:18px;background:#fff"></div>
<svg class="a" style="left:404px;top:121px" width="16" height="16" viewBox="0 0 16 16"><defs><radialGradient id="hpb" cx=".4" cy=".3" r=".8"><stop offset="0" stop-color="#5f9cf0"/><stop offset="1" stop-color="#1a55c0"/></radialGradient></defs><circle cx="8" cy="8" r="7.6" fill="url(#hpb)" stroke="#2a5db8" stroke-width=".6"/><text x="8" y="12.4" text-anchor="middle" font-family="Liberation Sans, sans-serif" font-weight="bold" font-size="12.5" fill="#fff">?</text></svg>
<div class="a" style="left:193px;top:141px;width:838px;height:676px;background:#ababab"></div>
<div class="a" style="left:1031px;top:141px;width:4px;height:676px;background:#f0f0f0"></div>
<div class="a" style="left:1035px;top:141px;width:538px;height:676px;background:#999"></div>
<svg class="a" style="left:0;top:0" width="1600" height="900" viewBox="0 0 1600 900"><defs><style>polygon,.bx,.gl,.gs{shape-rendering:crispEdges}.gl{fill:none;stroke:#200800;stroke-width:1;stroke-dasharray:2.4 3;opacity:.8}.gs{fill:none;stroke:#0c1404;stroke-width:1;stroke-dasharray:6 4;opacity:.85}.bx{fill:none;stroke:#2a1c1c;stroke-width:1}</style>
<linearGradient id="s1" gradientUnits="userSpaceOnUse" x1="1365.9" y1="419.1" x2="1457.6" y2="255.9"><stop offset="0" stop-color="#0aa416"/><stop offset="0.067" stop-color="#0ab00a"/><stop offset="1" stop-color="#b00a0a"/></linearGradient><linearGradient id="s2" gradientUnits="userSpaceOnUse" x1="1365.9" y1="419.1" x2="1457.6" y2="255.9"><stop offset="0" stop-color="#0aa416"/><stop offset="0.067" stop-color="#0ab00a"/><stop offset="1" stop-color="#b00a0a"/></linearGradient><linearGradient id="s3" gradientUnits="userSpaceOnUse" x1="1355.1" y1="238.4" x2="1369.4" y2="212.8"><stop offset="0" stop-color="#6c1a0a"/><stop offset="1" stop-color="#7d0a0a"/></linearGradient><linearGradient id="s4" gradientUnits="userSpaceOnUse" x1="1355.1" y1="238.4" x2="1369.4" y2="212.8"><stop offset="0" stop-color="#6c1a0a"/><stop offset="1" stop-color="#7d0a0a"/></linearGradient><linearGradient id="s5" gradientUnits="userSpaceOnUse" x1="1317.2" y1="274.6" x2="1335.2" y2="242.5"><stop offset="0" stop-color="#682f0a"/><stop offset="1" stop-color="#7a1d0a"/></linearGradient><linearGradient id="s6" gradientUnits="userSpaceOnUse" x1="1317.2" y1="274.6" x2="1335.2" y2="242.5"><stop offset="0" stop-color="#682f0a"/><stop offset="1" stop-color="#7a1d0a"/></linearGradient><linearGradient id="s7" gradientUnits="userSpaceOnUse" x1="1375.4" y1="424.5" x2="1467.2" y2="261.3"><stop offset="0" stop-color="#0aa416"/><stop offset="0.067" stop-color="#0ab00a"/><stop offset="1" stop-color="#b00a0a"/></linearGradient><linearGradient id="s8" gradientUnits="userSpaceOnUse" x1="1375.4" y1="424.5" x2="1467.2" y2="261.3"><stop offset="0" stop-color="#0aa416"/><stop offset="0.067" stop-color="#0ab00a"/><stop offset="1" stop-color="#b00a0a"/></linearGradient><linearGradient id="s9" gradientUnits="userSpaceOnUse" x1="1366.5" y1="244.8" x2="1380.8" y2="219.3"><stop offset="0" stop-color="#6c1a0a"/><stop offset="1" stop-color="#7d0a0a"/></linearGradient><linearGradient id="s10" gradientUnits="userSpaceOnUse" x1="1366.5" y1="244.8" x2="1380.8" y2="219.3"><stop offset="0" stop-color="#6c1a0a"/><stop offset="1" stop-color="#7d0a0a"/></linearGradient><linearGradient id="s11" gradientUnits="userSpaceOnUse" x1="1328.6" y1="281.0" x2="1346.7" y2="248.9"><stop offset="0" stop-color="#682f0a"/><stop offset="1" stop-color="#7a1d0a"/></linearGradient><linearGradient id="s12" gradientUnits="userSpaceOnUse" x1="1328.6" y1="281.0" x2="1346.7" y2="248.9"><stop offset="0" stop-color="#682f0a"/><stop offset="1" stop-color="#7a1d0a"/></linearGradient><linearGradient id="s13" gradientUnits="userSpaceOnUse" x1="1386.9" y1="430.9" x2="1478.6" y2="267.7"><stop offset="0" stop-color="#0aa416"/><stop offset="0.067" stop-color="#0ab00a"/><stop offset="1" stop-color="#b00a0a"/></linearGradient><linearGradient id="s14" gradientUnits="userSpaceOnUse" x1="1386.9" y1="430.9" x2="1478.6" y2="267.7"><stop offset="0" stop-color="#0aa416"/><stop offset="0.067" stop-color="#0ab00a"/><stop offset="1" stop-color="#b00a0a"/></linearGradient><linearGradient id="s15" gradientUnits="userSpaceOnUse" x1="1376.0" y1="250.1" x2="1390.4" y2="224.6"><stop offset="0" stop-color="#6c1a0a"/><stop offset="1" stop-color="#7d0a0a"/></linearGradient><linearGradient id="s16" gradientUnits="userSpaceOnUse" x1="1376.0" y1="250.1" x2="1390.4" y2="224.6"><stop offset="0" stop-color="#6c1a0a"/><stop offset="1" stop-color="#7d0a0a"/></linearGradient><linearGradient id="s17" gradientUnits="userSpaceOnUse" x1="1338.2" y1="286.4" x2="1356.2" y2="254.2"><stop offset="0" stop-color="#682f0a"/><stop offset="1" stop-color="#7a1d0a"/></linearGradient><linearGradient id="s18" gradientUnits="userSpaceOnUse" x1="1338.2" y1="286.4" x2="1356.2" y2="254.2"><stop offset="0" stop-color="#682f0a"/><stop offset="1" stop-color="#7a1d0a"/></linearGradient><linearGradient id="s19" gradientUnits="userSpaceOnUse" x1="1396.4" y1="436.3" x2="1488.1" y2="273.0"><stop offset="0" stop-color="#0aa416"/><stop offset="0.067" stop-color="#0ab00a"/><stop offset="1" stop-color="#b00a0a"/></linearGradient><linearGradient id="s20" gradientUnits="userSpaceOnUse" x1="1396.4" y1="436.3" x2="1488.1" y2="273.0"><stop offset="0" stop-color="#0aa416"/><stop offset="0.067" stop-color="#0ab00a"/><stop offset="1" stop-color="#b00a0a"/></linearGradient><linearGradient id="s21" gradientUnits="userSpaceOnUse" x1="1385.6" y1="255.5" x2="1399.9" y2="230.0"><stop offset="0" stop-color="#6c1a0a"/><stop offset="1" stop-color="#7d0a0a"/></linearGradient><linearGradient id="s22" gradientUnits="userSpaceOnUse" x1="1385.6" y1="255.5" x2="1399.9" y2="230.0"><stop offset="0" stop-color="#6c1a0a"/><stop offset="1" stop-color="#7d0a0a"/></linearGradient><linearGradient id="s23" gradientUnits="userSpaceOnUse" x1="1347.7" y1="291.7" x2="1365.8" y2="259.6"><stop offset="0" stop-color="#682f0a"/><stop offset="1" stop-color="#7a1d0a"/></linearGradient><linearGradient id="s24" gradientUnits="userSpaceOnUse" x1="1347.7" y1="291.7" x2="1365.8" y2="259.6"><stop offset="0" stop-color="#682f0a"/><stop offset="1" stop-color="#7a1d0a"/></linearGradient><linearGradient id="s25" gradientUnits="userSpaceOnUse" x1="1405.9" y1="441.6" x2="1497.7" y2="278.4"><stop offset="0" stop-color="#0aa416"/><stop offset="0.067" stop-color="#0ab00a"/><stop offset="1" stop-color="#b00a0a"/></linearGradient><linearGradient id="s26" gradientUnits="userSpaceOnUse" x1="1405.9" y1="441.6" x2="1497.7" y2="278.4"><stop offset="0" stop-color="#0aa416"/><stop offset="0.067" stop-color="#0ab00a"/><stop offset="1" stop-color="#b00a0a"/></linearGradient><linearGradient id="s27" gradientUnits="userSpaceOnUse" x1="1395.1" y1="260.9" x2="1409.4" y2="235.3"><stop offset="0" stop-color="#6c1a0a"/><stop offset="1" stop-color="#7d0a0a"/></linearGradient><linearGradient id="s28" gradientUnits="userSpaceOnUse" x1="1395.1" y1="260.9" x2="1409.4" y2="235.3"><stop offset="0" stop-color="#6c1a0a"/><stop offset="1" stop-color="#7d0a0a"/></linearGradient><linearGradient id="s29" gradientUnits="userSpaceOnUse" x1="1357.2" y1="297.1" x2="1375.3" y2="265.0"><stop offset="0" stop-color="#682f0a"/><stop offset="1" stop-color="#7a1d0a"/></linearGradient><linearGradient id="s30" gradientUnits="userSpaceOnUse" x1="1357.2" y1="297.1" x2="1375.3" y2="265.0"><stop offset="0" stop-color="#682f0a"/><stop offset="1" stop-color="#7a1d0a"/></linearGradient><linearGradient id="s31" gradientUnits="userSpaceOnUse" x1="1415.5" y1="447.0" x2="1507.2" y2="283.8"><stop offset="0" stop-color="#0aa416"/><stop offset="0.067" stop-color="#0ab00a"/><stop offset="1" stop-color="#b00a0a"/></linearGradient><linearGradient id="s32" gradientUnits="userSpaceOnUse" x1="1415.5" y1="447.0" x2="1507.2" y2="283.8"><stop offset="0" stop-color="#0aa416"/><stop offset="0.067" stop-color="#0ab00a"/><stop offset="1" stop-color="#b00a0a"/></linearGradient><linearGradient id="s33" gradientUnits="userSpaceOnUse" x1="1404.6" y1="266.2" x2="1419.0" y2="240.7"><stop offset="0" stop-color="#6c1a0a"/><stop offset="1" stop-color="#7d0a0a"/></linearGradient><linearGradient id="s34" gradientUnits="userSpaceOnUse" x1="1404.6" y1="266.2" x2="1419.0" y2="240.7"><stop offset="0" stop-color="#6c1a0a"/><stop offset="1" stop-color="#7d0a0a"/></linearGradient><linearGradient id="s35" gradientUnits="userSpaceOnUse" x1="1366.8" y1="302.4" x2="1384.8" y2="270.3"><stop offset="0" stop-color="#682f0a"/><stop offset="1" stop-color="#7a1d0a"/></linearGradient><linearGradient id="s36" gradientUnits="userSpaceOnUse" x1="1366.8" y1="302.4" x2="1384.8" y2="270.3"><stop offset="0" stop-color="#682f0a"/><stop offset="1" stop-color="#7a1d0a"/></linearGradient><linearGradient id="s37" gradientUnits="userSpaceOnUse" x1="1425.0" y1="452.3" x2="1516.7" y2="289.1"><stop offset="0" stop-color="#0aa416"/><stop offset="0.067" stop-color="#0ab00a"/><stop offset="1" stop-color="#b00a0a"/></linearGradient><linearGradient id="s38" gradientUnits="userSpaceOnUse" x1="1425.0" y1="452.3" x2="1516.7" y2="289.1"><stop offset="0" stop-color="#0aa416"/><stop offset="0.067" stop-color="#0ab00a"/><stop offset="1" stop-color="#b00a0a"/></linearGradient><linearGradient id="s39" gradientUnits="userSpaceOnUse" x1="1414.2" y1="271.6" x2="1428.5" y2="246.1"><stop offset="0" stop-color="#6c1a0a"/><stop offset="1" stop-color="#7d0a0a"/></linearGradient><linearGradient id="s40" gradientUnits="userSpaceOnUse" x1="1414.2" y1="271.6" x2="1428.5" y2="246.1"><stop offset="0" stop-color="#6c1a0a"/><stop offset="1" stop-color="#7d0a0a"/></linearGradient><linearGradient id="s41" gradientUnits="userSpaceOnUse" x1="1393.8" y1="290.0" x2="1389.9" y2="268.9"><stop offset="0" stop-color="#af370a"/><stop offset="1" stop-color="#be280a"/></linearGradient><linearGradient id="s42" gradientUnits="userSpaceOnUse" x1="1393.8" y1="290.0" x2="1403.7" y2="272.2"><stop offset="0" stop-color="#7b290a"/><stop offset="1" stop-color="#861f0a"/></linearGradient><linearGradient id="s43" gradientUnits="userSpaceOnUse" x1="1376.3" y1="307.8" x2="1394.4" y2="275.7"><stop offset="0" stop-color="#682f0a"/><stop offset="1" stop-color="#7a1d0a"/></linearGradient><linearGradient id="s44" gradientUnits="userSpaceOnUse" x1="1376.3" y1="307.8" x2="1379.3" y2="269.6"><stop offset="0" stop-color="#893d0a"/><stop offset="1" stop-color="#a3230a"/></linearGradient><linearGradient id="s45" gradientUnits="userSpaceOnUse" x1="1361.7" y1="325.1" x2="1357.8" y2="304.1"><stop offset="0" stop-color="#91550a"/><stop offset="1" stop-color="#a0460a"/></linearGradient><linearGradient id="s46" gradientUnits="userSpaceOnUse" x1="1361.7" y1="325.1" x2="1372.6" y2="305.7"><stop offset="0" stop-color="#6d410a"/><stop offset="1" stop-color="#78360a"/></linearGradient><linearGradient id="s47" gradientUnits="userSpaceOnUse" x1="1347.2" y1="327.8" x2="1343.3" y2="306.8"><stop offset="0" stop-color="#91550a"/><stop offset="1" stop-color="#a0460a"/></linearGradient><linearGradient id="s48" gradientUnits="userSpaceOnUse" x1="1347.2" y1="327.8" x2="1343.3" y2="306.8"><stop offset="0" stop-color="#91550a"/><stop offset="1" stop-color="#a0460a"/></linearGradient><linearGradient id="s49" gradientUnits="userSpaceOnUse" x1="1318.1" y1="333.2" x2="1314.2" y2="312.2"><stop offset="0" stop-color="#91550a"/><stop offset="1" stop-color="#a0460a"/></linearGradient><linearGradient id="s50" gradientUnits="userSpaceOnUse" x1="1318.1" y1="333.2" x2="1314.2" y2="312.2"><stop offset="0" stop-color="#91550a"/><stop offset="1" stop-color="#a0460a"/></linearGradient><linearGradient id="s51" gradientUnits="userSpaceOnUse" x1="1288.9" y1="338.6" x2="1285.0" y2="317.6"><stop offset="0" stop-color="#91550a"/><stop offset="1" stop-color="#a0460a"/></linearGradient><linearGradient id="s52" gradientUnits="userSpaceOnUse" x1="1288.9" y1="338.6" x2="1285.0" y2="317.6"><stop offset="0" stop-color="#91550a"/><stop offset="1" stop-color="#a0460a"/></linearGradient><linearGradient id="s53" gradientUnits="userSpaceOnUse" x1="1259.8" y1="344.0" x2="1255.9" y2="323.0"><stop offset="0" stop-color="#91550a"/><stop offset="1" stop-color="#a0460a"/></linearGradient><linearGradient id="s54" gradientUnits="userSpaceOnUse" x1="1259.8" y1="344.0" x2="1255.9" y2="323.0"><stop offset="0" stop-color="#91550a"/><stop offset="1" stop-color="#a0460a"/></linearGradient><linearGradient id="s55" gradientUnits="userSpaceOnUse" x1="1245.3" y1="346.7" x2="1241.4" y2="325.7"><stop offset="0" stop-color="#91550a"/><stop offset="1" stop-color="#a0460a"/></linearGradient><linearGradient id="s56" gradientUnits="userSpaceOnUse" x1="1245.3" y1="346.7" x2="1241.4" y2="325.7"><stop offset="0" stop-color="#91550a"/><stop offset="1" stop-color="#a0460a"/></linearGradient><linearGradient id="s57" gradientUnits="userSpaceOnUse" x1="1230.7" y1="349.4" x2="1226.8" y2="328.4"><stop offset="0" stop-color="#91550a"/><stop offset="1" stop-color="#a0460a"/></linearGradient><linearGradient id="s58" gradientUnits="userSpaceOnUse" x1="1230.7" y1="349.4" x2="1226.8" y2="328.4"><stop offset="0" stop-color="#91550a"/><stop offset="1" stop-color="#a0460a"/></linearGradient><linearGradient id="s59" gradientUnits="userSpaceOnUse" x1="1187.0" y1="357.5" x2="1183.1" y2="336.5"><stop offset="0" stop-color="#91550a"/><stop offset="1" stop-color="#a0460a"/></linearGradient><linearGradient id="s60" gradientUnits="userSpaceOnUse" x1="1187.0" y1="357.5" x2="1183.1" y2="336.5"><stop offset="0" stop-color="#91550a"/><stop offset="1" stop-color="#a0460a"/></linearGradient><linearGradient id="s61" gradientUnits="userSpaceOnUse" x1="1143.3" y1="365.6" x2="1139.4" y2="344.6"><stop offset="0" stop-color="#91550a"/><stop offset="1" stop-color="#a0460a"/></linearGradient><linearGradient id="s62" gradientUnits="userSpaceOnUse" x1="1143.3" y1="365.6" x2="1139.4" y2="344.6"><stop offset="0" stop-color="#91550a"/><stop offset="1" stop-color="#a0460a"/></linearGradient><linearGradient id="s63" gradientUnits="userSpaceOnUse" x1="1434.5" y1="457.7" x2="1526.3" y2="294.5"><stop offset="0" stop-color="#0aa416"/><stop offset="0.067" stop-color="#0ab00a"/><stop offset="1" stop-color="#b00a0a"/></linearGradient><linearGradient id="s64" gradientUnits="userSpaceOnUse" x1="1434.5" y1="457.7" x2="1526.3" y2="294.5"><stop offset="0" stop-color="#0aa416"/><stop offset="0.067" stop-color="#0ab00a"/><stop offset="1" stop-color="#b00a0a"/></linearGradient><linearGradient id="s65" gradientUnits="userSpaceOnUse" x1="1423.7" y1="276.9" x2="1438.0" y2="251.4"><stop offset="0" stop-color="#6c1a0a"/><stop offset="1" stop-color="#7d0a0a"/></linearGradient><linearGradient id="s66" gradientUnits="userSpaceOnUse" x1="1423.7" y1="276.9" x2="1438.0" y2="251.4"><stop offset="0" stop-color="#6c1a0a"/><stop offset="1" stop-color="#7d0a0a"/></linearGradient><linearGradient id="s67" gradientUnits="userSpaceOnUse" x1="1403.3" y1="295.3" x2="1413.3" y2="277.6"><stop offset="0" stop-color="#7b290a"/><stop offset="1" stop-color="#861f0a"/></linearGradient><linearGradient id="s68" gradientUnits="userSpaceOnUse" x1="1403.3" y1="295.3" x2="1413.3" y2="277.6"><stop offset="0" stop-color="#7b290a"/><stop offset="1" stop-color="#861f0a"/></linearGradient><linearGradient id="s69" gradientUnits="userSpaceOnUse" x1="1385.8" y1="313.2" x2="1397.7" y2="292.1"><stop offset="0" stop-color="#7d380a"/><stop offset="1" stop-color="#892d0a"/></linearGradient><linearGradient id="s70" gradientUnits="userSpaceOnUse" x1="1385.8" y1="313.2" x2="1397.7" y2="292.1"><stop offset="0" stop-color="#7d380a"/><stop offset="1" stop-color="#892d0a"/></linearGradient><linearGradient id="s71" gradientUnits="userSpaceOnUse" x1="1371.3" y1="330.5" x2="1382.2" y2="311.1"><stop offset="0" stop-color="#6d410a"/><stop offset="1" stop-color="#78360a"/></linearGradient><linearGradient id="s72" gradientUnits="userSpaceOnUse" x1="1371.3" y1="330.5" x2="1382.2" y2="311.1"><stop offset="0" stop-color="#6d410a"/><stop offset="1" stop-color="#78360a"/></linearGradient><linearGradient id="s73" gradientUnits="userSpaceOnUse" x1="1444.1" y1="463.0" x2="1535.8" y2="299.8"><stop offset="0" stop-color="#0aa416"/><stop offset="0.067" stop-color="#0ab00a"/><stop offset="1" stop-color="#b00a0a"/></linearGradient><linearGradient id="s74" gradientUnits="userSpaceOnUse" x1="1444.1" y1="463.0" x2="1535.8" y2="299.8"><stop offset="0" stop-color="#0aa416"/><stop offset="0.067" stop-color="#0ab00a"/><stop offset="1" stop-color="#b00a0a"/></linearGradient><linearGradient id="s75" gradientUnits="userSpaceOnUse" x1="1433.2" y1="282.3" x2="1447.6" y2="256.8"><stop offset="0" stop-color="#6c1a0a"/><stop offset="1" stop-color="#7d0a0a"/></linearGradient><linearGradient id="s76" gradientUnits="userSpaceOnUse" x1="1433.2" y1="282.3" x2="1447.6" y2="256.8"><stop offset="0" stop-color="#6c1a0a"/><stop offset="1" stop-color="#7d0a0a"/></linearGradient><linearGradient id="s77" gradientUnits="userSpaceOnUse" x1="1412.8" y1="308.0" x2="1420.6" y2="280.1"><stop offset="0" stop-color="#7e310a"/><stop offset="1" stop-color="#8e200a"/></linearGradient><linearGradient id="s78" gradientUnits="userSpaceOnUse" x1="1412.8" y1="308.0" x2="1425.9" y2="284.7"><stop offset="0" stop-color="#68290a"/><stop offset="1" stop-color="#761c0a"/></linearGradient><linearGradient id="s79" gradientUnits="userSpaceOnUse" x1="1395.4" y1="325.8" x2="1401.7" y2="295.0"><stop offset="0" stop-color="#7f410a"/><stop offset="1" stop-color="#912f0a"/></linearGradient><linearGradient id="s80" gradientUnits="userSpaceOnUse" x1="1395.4" y1="325.8" x2="1401.7" y2="295.0"><stop offset="0" stop-color="#7f410a"/><stop offset="1" stop-color="#912f0a"/></linearGradient><linearGradient id="s81" gradientUnits="userSpaceOnUse" x1="1380.8" y1="335.8" x2="1391.7" y2="316.5"><stop offset="0" stop-color="#6d410a"/><stop offset="1" stop-color="#78360a"/></linearGradient><linearGradient id="s82" gradientUnits="userSpaceOnUse" x1="1380.8" y1="335.8" x2="1383.3" y2="312.9"><stop offset="0" stop-color="#824d0a"/><stop offset="1" stop-color="#90400a"/></linearGradient><linearGradient id="s83" gradientUnits="userSpaceOnUse" x1="1453.6" y1="468.4" x2="1545.3" y2="305.2"><stop offset="0" stop-color="#0aa416"/><stop offset="0.067" stop-color="#0ab00a"/><stop offset="1" stop-color="#b00a0a"/></linearGradient><linearGradient id="s84" gradientUnits="userSpaceOnUse" x1="1453.6" y1="468.4" x2="1545.3" y2="305.2"><stop offset="0" stop-color="#0aa416"/><stop offset="0.067" stop-color="#0ab00a"/><stop offset="1" stop-color="#b00a0a"/></linearGradient><linearGradient id="s85" gradientUnits="userSpaceOnUse" x1="1442.8" y1="287.6" x2="1457.1" y2="262.1"><stop offset="0" stop-color="#6c1a0a"/><stop offset="1" stop-color="#7d0a0a"/></linearGradient><linearGradient id="s86" gradientUnits="userSpaceOnUse" x1="1442.8" y1="287.6" x2="1457.1" y2="262.1"><stop offset="0" stop-color="#6c1a0a"/><stop offset="1" stop-color="#7d0a0a"/></linearGradient><linearGradient id="s87" gradientUnits="userSpaceOnUse" x1="1422.4" y1="335.2" x2="1430.0" y2="284.7"><stop offset="0" stop-color="#693f0a"/><stop offset="1" stop-color="#891f0a"/></linearGradient><linearGradient id="s88" gradientUnits="userSpaceOnUse" x1="1422.4" y1="335.2" x2="1444.8" y2="295.3"><stop offset="0" stop-color="#54330a"/><stop offset="1" stop-color="#6c1a0a"/></linearGradient><linearGradient id="s89" gradientUnits="userSpaceOnUse" x1="1404.9" y1="338.5" x2="1411.2" y2="307.6"><stop offset="0" stop-color="#79470a"/><stop offset="1" stop-color="#8b350a"/></linearGradient><linearGradient id="s90" gradientUnits="userSpaceOnUse" x1="1404.9" y1="338.5" x2="1399.7" y2="310.4"><stop offset="0" stop-color="#90540a"/><stop offset="1" stop-color="#a63e0a"/></linearGradient><linearGradient id="s91" gradientUnits="userSpaceOnUse" x1="1390.3" y1="341.2" x2="1398.1" y2="327.4"><stop offset="0" stop-color="#7b490a"/><stop offset="1" stop-color="#82430a"/></linearGradient><linearGradient id="s92" gradientUnits="userSpaceOnUse" x1="1390.3" y1="341.2" x2="1387.8" y2="327.2"><stop offset="0" stop-color="#90540a"/><stop offset="1" stop-color="#974d0a"/></linearGradient><linearGradient id="s93" gradientUnits="userSpaceOnUse" x1="1463.1" y1="473.8" x2="1557.3" y2="315.1"><stop offset="0" stop-color="#0aa516"/><stop offset="0.067" stop-color="#0ab10a"/><stop offset="1" stop-color="#b10a0a"/></linearGradient><linearGradient id="s94" gradientUnits="userSpaceOnUse" x1="1463.1" y1="473.8" x2="1548.6" y2="321.7"><stop offset="0" stop-color="#0aa416"/><stop offset="0.071" stop-color="#0ab00a"/><stop offset="1" stop-color="#a4160a"/></linearGradient><linearGradient id="s95" gradientUnits="userSpaceOnUse" x1="1458.1" y1="277.3" x2="1454.2" y2="256.3"><stop offset="0" stop-color="#cd190a"/><stop offset="1" stop-color="#dc0a0a"/></linearGradient><linearGradient id="s96" gradientUnits="userSpaceOnUse" x1="1458.1" y1="277.3" x2="1454.2" y2="256.3"><stop offset="0" stop-color="#cd190a"/><stop offset="1" stop-color="#dc0a0a"/></linearGradient><linearGradient id="s97" gradientUnits="userSpaceOnUse" x1="1452.3" y1="293.0" x2="1466.6" y2="267.5"><stop offset="0" stop-color="#6c1a0a"/><stop offset="1" stop-color="#7d0a0a"/></linearGradient><linearGradient id="s98" gradientUnits="userSpaceOnUse" x1="1452.3" y1="293.0" x2="1461.2" y2="260.9"><stop offset="0" stop-color="#771c0a"/><stop offset="1" stop-color="#890a0a"/></linearGradient><linearGradient id="s99" gradientUnits="userSpaceOnUse" x1="1431.9" y1="355.2" x2="1452.5" y2="295.7"><stop offset="0" stop-color="#4c3b0a"/><stop offset="1" stop-color="#6c1a0a"/></linearGradient><linearGradient id="s100" gradientUnits="userSpaceOnUse" x1="1431.9" y1="355.2" x2="1460.6" y2="304.2"><stop offset="0" stop-color="#4c3b0a"/><stop offset="1" stop-color="#6c1a0a"/></linearGradient><linearGradient id="s101" gradientUnits="userSpaceOnUse" x1="1414.4" y1="358.5" x2="1410.5" y2="337.4"><stop offset="0" stop-color="#82640a"/><stop offset="1" stop-color="#91550a"/></linearGradient><linearGradient id="s102" gradientUnits="userSpaceOnUse" x1="1414.4" y1="358.5" x2="1410.5" y2="337.4"><stop offset="0" stop-color="#82640a"/><stop offset="1" stop-color="#91550a"/></linearGradient><linearGradient id="s103" gradientUnits="userSpaceOnUse" x1="1399.9" y1="361.2" x2="1396.0" y2="340.1"><stop offset="0" stop-color="#82640a"/><stop offset="1" stop-color="#91550a"/></linearGradient><linearGradient id="s104" gradientUnits="userSpaceOnUse" x1="1399.9" y1="361.2" x2="1396.0" y2="340.1"><stop offset="0" stop-color="#82640a"/><stop offset="1" stop-color="#91550a"/></linearGradient><linearGradient id="s105" gradientUnits="userSpaceOnUse" x1="1385.3" y1="363.9" x2="1381.4" y2="342.8"><stop offset="0" stop-color="#82640a"/><stop offset="1" stop-color="#91550a"/></linearGradient><linearGradient id="s106" gradientUnits="userSpaceOnUse" x1="1385.3" y1="363.9" x2="1381.4" y2="342.8"><stop offset="0" stop-color="#82640a"/><stop offset="1" stop-color="#91550a"/></linearGradient><linearGradient id="s107" gradientUnits="userSpaceOnUse" x1="1356.2" y1="369.3" x2="1352.3" y2="348.2"><stop offset="0" stop-color="#82640a"/><stop offset="1" stop-color="#91550a"/></linearGradient><linearGradient id="s108" gradientUnits="userSpaceOnUse" x1="1356.2" y1="369.3" x2="1352.3" y2="348.2"><stop offset="0" stop-color="#82640a"/><stop offset="1" stop-color="#91550a"/></linearGradient><linearGradient id="s109" gradientUnits="userSpaceOnUse" x1="1327.1" y1="374.7" x2="1323.2" y2="353.6"><stop offset="0" stop-color="#82640a"/><stop offset="1" stop-color="#91550a"/></linearGradient><linearGradient id="s110" gradientUnits="userSpaceOnUse" x1="1327.1" y1="374.7" x2="1323.2" y2="353.6"><stop offset="0" stop-color="#82640a"/><stop offset="1" stop-color="#91550a"/></linearGradient><linearGradient id="s111" gradientUnits="userSpaceOnUse" x1="1298.0" y1="380.1" x2="1294.1" y2="359.0"><stop offset="0" stop-color="#82640a"/><stop offset="1" stop-color="#91550a"/></linearGradient><linearGradient id="s112" gradientUnits="userSpaceOnUse" x1="1298.0" y1="380.1" x2="1294.1" y2="359.0"><stop offset="0" stop-color="#82640a"/><stop offset="1" stop-color="#91550a"/></linearGradient><linearGradient id="s113" gradientUnits="userSpaceOnUse" x1="1283.4" y1="382.8" x2="1279.5" y2="361.7"><stop offset="0" stop-color="#82640a"/><stop offset="1" stop-color="#91550a"/></linearGradient><linearGradient id="s114" gradientUnits="userSpaceOnUse" x1="1283.4" y1="382.8" x2="1279.5" y2="361.7"><stop offset="0" stop-color="#82640a"/><stop offset="1" stop-color="#91550a"/></linearGradient><linearGradient id="s115" gradientUnits="userSpaceOnUse" x1="1268.8" y1="385.5" x2="1264.9" y2="364.4"><stop offset="0" stop-color="#82640a"/><stop offset="1" stop-color="#91550a"/></linearGradient><linearGradient id="s116" gradientUnits="userSpaceOnUse" x1="1268.8" y1="385.5" x2="1264.9" y2="364.4"><stop offset="0" stop-color="#82640a"/><stop offset="1" stop-color="#91550a"/></linearGradient><linearGradient id="s117" gradientUnits="userSpaceOnUse" x1="1225.2" y1="393.6" x2="1221.3" y2="372.5"><stop offset="0" stop-color="#82640a"/><stop offset="1" stop-color="#91550a"/></linearGradient><linearGradient id="s118" gradientUnits="userSpaceOnUse" x1="1225.2" y1="393.6" x2="1221.3" y2="372.5"><stop offset="0" stop-color="#82640a"/><stop offset="1" stop-color="#91550a"/></linearGradient><linearGradient id="s119" gradientUnits="userSpaceOnUse" x1="1181.5" y1="401.7" x2="1177.6" y2="380.6"><stop offset="0" stop-color="#82640a"/><stop offset="1" stop-color="#91550a"/></linearGradient><linearGradient id="s120" gradientUnits="userSpaceOnUse" x1="1181.5" y1="401.7" x2="1177.6" y2="380.6"><stop offset="0" stop-color="#82640a"/><stop offset="1" stop-color="#91550a"/></linearGradient><linearGradient id="s121" gradientUnits="userSpaceOnUse" x1="1472.7" y1="479.1" x2="1560.6" y2="331.6"><stop offset="0" stop-color="#0aa516"/><stop offset="0.071" stop-color="#0ab10a"/><stop offset="1" stop-color="#a5160a"/></linearGradient><linearGradient id="s122" gradientUnits="userSpaceOnUse" x1="1472.7" y1="479.1" x2="1551.9" y2="338.1"><stop offset="0" stop-color="#0aa516"/><stop offset="0.077" stop-color="#0ab10a"/><stop offset="1" stop-color="#99220a"/></linearGradient><linearGradient id="s123" gradientUnits="userSpaceOnUse" x1="1467.7" y1="311.9" x2="1461.1" y2="276.8"><stop offset="0" stop-color="#aa360a"/><stop offset="1" stop-color="#c7190a"/></linearGradient><linearGradient id="s124" gradientUnits="userSpaceOnUse" x1="1467.7" y1="311.9" x2="1474.7" y2="277.3"><stop offset="0" stop-color="#7e2a0a"/><stop offset="1" stop-color="#93150a"/></linearGradient><linearGradient id="s125" gradientUnits="userSpaceOnUse" x1="1461.8" y1="320.3" x2="1470.1" y2="279.8"><stop offset="0" stop-color="#6e2b0a"/><stop offset="1" stop-color="#86140a"/></linearGradient><linearGradient id="s126" gradientUnits="userSpaceOnUse" x1="1461.8" y1="320.3" x2="1463.2" y2="277.5"><stop offset="0" stop-color="#89340a"/><stop offset="1" stop-color="#a7160a"/></linearGradient><linearGradient id="s127" gradientUnits="userSpaceOnUse" x1="1453.1" y1="329.2" x2="1446.6" y2="294.1"><stop offset="0" stop-color="#9c440a"/><stop offset="1" stop-color="#b9270a"/></linearGradient><linearGradient id="s128" gradientUnits="userSpaceOnUse" x1="1453.1" y1="329.2" x2="1453.6" y2="293.0"><stop offset="0" stop-color="#8b3e0a"/><stop offset="1" stop-color="#a5240a"/></linearGradient><linearGradient id="s129" gradientUnits="userSpaceOnUse" x1="1441.4" y1="389.8" x2="1466.2" y2="300.9"><stop offset="0" stop-color="#3b4c0a"/><stop offset="1" stop-color="#6c1a0a"/></linearGradient><linearGradient id="s130" gradientUnits="userSpaceOnUse" x1="1441.4" y1="389.8" x2="1466.2" y2="300.9"><stop offset="0" stop-color="#3b4c0a"/><stop offset="1" stop-color="#6c1a0a"/></linearGradient><linearGradient id="s131" gradientUnits="userSpaceOnUse" x1="1424.0" y1="407.6" x2="1414.8" y2="358.4"><stop offset="0" stop-color="#50880a"/><stop offset="1" stop-color="#7a5e0a"/></linearGradient><linearGradient id="s132" gradientUnits="userSpaceOnUse" x1="1424.0" y1="407.6" x2="1422.7" y2="355.4"><stop offset="0" stop-color="#4b7f0a"/><stop offset="1" stop-color="#72580a"/></linearGradient><linearGradient id="s133" gradientUnits="userSpaceOnUse" x1="1409.4" y1="410.3" x2="1400.3" y2="361.1"><stop offset="0" stop-color="#50880a"/><stop offset="1" stop-color="#7a5e0a"/></linearGradient><linearGradient id="s134" gradientUnits="userSpaceOnUse" x1="1409.4" y1="410.3" x2="1400.3" y2="361.1"><stop offset="0" stop-color="#50880a"/><stop offset="1" stop-color="#7a5e0a"/></linearGradient><linearGradient id="s135" gradientUnits="userSpaceOnUse" x1="1394.9" y1="413.0" x2="1385.7" y2="363.8"><stop offset="0" stop-color="#50880a"/><stop offset="1" stop-color="#7a5e0a"/></linearGradient><linearGradient id="s136" gradientUnits="userSpaceOnUse" x1="1394.9" y1="413.0" x2="1385.7" y2="363.8"><stop offset="0" stop-color="#50880a"/><stop offset="1" stop-color="#7a5e0a"/></linearGradient><linearGradient id="s137" gradientUnits="userSpaceOnUse" x1="1365.7" y1="418.4" x2="1356.6" y2="369.2"><stop offset="0" stop-color="#50880a"/><stop offset="1" stop-color="#7a5e0a"/></linearGradient><linearGradient id="s138" gradientUnits="userSpaceOnUse" x1="1365.7" y1="418.4" x2="1356.6" y2="369.2"><stop offset="0" stop-color="#50880a"/><stop offset="1" stop-color="#7a5e0a"/></linearGradient><linearGradient id="s139" gradientUnits="userSpaceOnUse" x1="1336.6" y1="423.8" x2="1327.5" y2="374.6"><stop offset="0" stop-color="#50880a"/><stop offset="1" stop-color="#7a5e0a"/></linearGradient><linearGradient id="s140" gradientUnits="userSpaceOnUse" x1="1336.6" y1="423.8" x2="1327.5" y2="374.6"><stop offset="0" stop-color="#50880a"/><stop offset="1" stop-color="#7a5e0a"/></linearGradient><linearGradient id="s141" gradientUnits="userSpaceOnUse" x1="1307.5" y1="429.2" x2="1298.4" y2="380.0"><stop offset="0" stop-color="#50880a"/><stop offset="1" stop-color="#7a5e0a"/></linearGradient><linearGradient id="s142" gradientUnits="userSpaceOnUse" x1="1307.5" y1="429.2" x2="1298.4" y2="380.0"><stop offset="0" stop-color="#50880a"/><stop offset="1" stop-color="#7a5e0a"/></linearGradient><linearGradient id="s143" gradientUnits="userSpaceOnUse" x1="1292.9" y1="431.9" x2="1283.8" y2="382.7"><stop offset="0" stop-color="#50880a"/><stop offset="1" stop-color="#7a5e0a"/></linearGradient><linearGradient id="s144" gradientUnits="userSpaceOnUse" x1="1292.9" y1="431.9" x2="1283.8" y2="382.7"><stop offset="0" stop-color="#50880a"/><stop offset="1" stop-color="#7a5e0a"/></linearGradient><linearGradient id="s145" gradientUnits="userSpaceOnUse" x1="1278.4" y1="434.6" x2="1269.2" y2="385.4"><stop offset="0" stop-color="#50880a"/><stop offset="1" stop-color="#7a5e0a"/></linearGradient><linearGradient id="s146" gradientUnits="userSpaceOnUse" x1="1278.4" y1="434.6" x2="1269.2" y2="385.4"><stop offset="0" stop-color="#50880a"/><stop offset="1" stop-color="#7a5e0a"/></linearGradient><linearGradient id="s147" gradientUnits="userSpaceOnUse" x1="1234.7" y1="442.7" x2="1225.6" y2="393.5"><stop offset="0" stop-color="#50880a"/><stop offset="1" stop-color="#7a5e0a"/></linearGradient><linearGradient id="s148" gradientUnits="userSpaceOnUse" x1="1234.7" y1="442.7" x2="1225.6" y2="393.5"><stop offset="0" stop-color="#50880a"/><stop offset="1" stop-color="#7a5e0a"/></linearGradient><linearGradient id="s149" gradientUnits="userSpaceOnUse" x1="1191.0" y1="450.8" x2="1181.9" y2="401.6"><stop offset="0" stop-color="#50880a"/><stop offset="1" stop-color="#7a5e0a"/></linearGradient><linearGradient id="s150" gradientUnits="userSpaceOnUse" x1="1191.0" y1="450.8" x2="1181.9" y2="401.6"><stop offset="0" stop-color="#50880a"/><stop offset="1" stop-color="#7a5e0a"/></linearGradient><linearGradient id="s151" gradientUnits="userSpaceOnUse" x1="1482.2" y1="484.5" x2="1565.1" y2="350.5"><stop offset="0" stop-color="#0aa616"/><stop offset="0.077" stop-color="#0ab20a"/><stop offset="1" stop-color="#9a220a"/></linearGradient><linearGradient id="s152" gradientUnits="userSpaceOnUse" x1="1482.2" y1="484.5" x2="1545.7" y2="351.4"><stop offset="0" stop-color="#0aa216"/><stop offset="0.087" stop-color="#0aae0a"/><stop offset="1" stop-color="#85330a"/></linearGradient><linearGradient id="s153" gradientUnits="userSpaceOnUse" x1="1477.2" y1="353.8" x2="1479.6" y2="295.8"><stop offset="0" stop-color="#6b490a"/><stop offset="1" stop-color="#93210a"/></linearGradient><linearGradient id="s154" gradientUnits="userSpaceOnUse" x1="1477.2" y1="353.8" x2="1491.2" y2="299.5"><stop offset="0" stop-color="#53390a"/><stop offset="1" stop-color="#701b0a"/></linearGradient><linearGradient id="s155" gradientUnits="userSpaceOnUse" x1="1471.4" y1="354.8" x2="1472.7" y2="312.0"><stop offset="0" stop-color="#714c0a"/><stop offset="1" stop-color="#8f2e0a"/></linearGradient><linearGradient id="s156" gradientUnits="userSpaceOnUse" x1="1471.4" y1="354.8" x2="1463.5" y2="312.7"><stop offset="0" stop-color="#83580a"/><stop offset="1" stop-color="#a7350a"/></linearGradient><linearGradient id="s157" gradientUnits="userSpaceOnUse" x1="1462.6" y1="371.1" x2="1460.0" y2="320.4"><stop offset="0" stop-color="#6b5e0a"/><stop offset="1" stop-color="#92370a"/></linearGradient><linearGradient id="s158" gradientUnits="userSpaceOnUse" x1="1462.6" y1="371.1" x2="1466.6" y2="320.6"><stop offset="0" stop-color="#5e530a"/><stop offset="1" stop-color="#80310a"/></linearGradient><linearGradient id="s159" gradientUnits="userSpaceOnUse" x1="1451.0" y1="424.4" x2="1475.7" y2="335.5"><stop offset="0" stop-color="#2b5c0a"/><stop offset="1" stop-color="#5c2b0a"/></linearGradient><linearGradient id="s160" gradientUnits="userSpaceOnUse" x1="1451.0" y1="424.4" x2="1470.5" y2="332.9"><stop offset="0" stop-color="#2b5d0a"/><stop offset="1" stop-color="#5d2b0a"/></linearGradient><linearGradient id="s161" gradientUnits="userSpaceOnUse" x1="1433.5" y1="478.7" x2="1424.4" y2="391.6"><stop offset="0" stop-color="#10b50a"/><stop offset="1" stop-color="#566f0a"/></linearGradient><linearGradient id="s162" gradientUnits="userSpaceOnUse" x1="1433.5" y1="478.7" x2="1449.2" y2="391.2"><stop offset="0" stop-color="#0f880a"/><stop offset="1" stop-color="#42550a"/></linearGradient><linearGradient id="s163" gradientUnits="userSpaceOnUse" x1="1419.0" y1="488.7" x2="1404.6" y2="411.2"><stop offset="0" stop-color="#0ac40a"/><stop offset="1" stop-color="#4c810a"/></linearGradient><linearGradient id="s164" gradientUnits="userSpaceOnUse" x1="1419.0" y1="488.7" x2="1408.3" y2="409.7"><stop offset="0" stop-color="#0ac00a"/><stop offset="1" stop-color="#4b7f0a"/></linearGradient><linearGradient id="s165" gradientUnits="userSpaceOnUse" x1="1404.4" y1="491.4" x2="1390.0" y2="413.9"><stop offset="0" stop-color="#0ac40a"/><stop offset="1" stop-color="#4c810a"/></linearGradient><linearGradient id="s166" gradientUnits="userSpaceOnUse" x1="1404.4" y1="491.4" x2="1390.0" y2="413.9"><stop offset="0" stop-color="#0ac40a"/><stop offset="1" stop-color="#4c810a"/></linearGradient><linearGradient id="s167" gradientUnits="userSpaceOnUse" x1="1375.3" y1="496.8" x2="1360.9" y2="419.3"><stop offset="0" stop-color="#0ac40a"/><stop offset="1" stop-color="#4c810a"/></linearGradient><linearGradient id="s168" gradientUnits="userSpaceOnUse" x1="1375.3" y1="496.8" x2="1360.9" y2="419.3"><stop offset="0" stop-color="#0ac40a"/><stop offset="1" stop-color="#4c810a"/></linearGradient><linearGradient id="s169" gradientUnits="userSpaceOnUse" x1="1346.2" y1="502.2" x2="1331.8" y2="424.7"><stop offset="0" stop-color="#0ac40a"/><stop offset="1" stop-color="#4c810a"/></linearGradient><linearGradient id="s170" gradientUnits="userSpaceOnUse" x1="1346.2" y1="502.2" x2="1331.8" y2="424.7"><stop offset="0" stop-color="#0ac40a"/><stop offset="1" stop-color="#4c810a"/></linearGradient><linearGradient id="s171" gradientUnits="userSpaceOnUse" x1="1317.0" y1="507.6" x2="1302.7" y2="430.1"><stop offset="0" stop-color="#0ac40a"/><stop offset="1" stop-color="#4c810a"/></linearGradient><linearGradient id="s172" gradientUnits="userSpaceOnUse" x1="1317.0" y1="507.6" x2="1302.7" y2="430.1"><stop offset="0" stop-color="#0ac40a"/><stop offset="1" stop-color="#4c810a"/></linearGradient><linearGradient id="s173" gradientUnits="userSpaceOnUse" x1="1302.5" y1="510.3" x2="1288.1" y2="432.8"><stop offset="0" stop-color="#0ac40a"/><stop offset="1" stop-color="#4c810a"/></linearGradient><linearGradient id="s174" gradientUnits="userSpaceOnUse" x1="1302.5" y1="510.3" x2="1288.1" y2="432.8"><stop offset="0" stop-color="#0ac40a"/><stop offset="1" stop-color="#4c810a"/></linearGradient><linearGradient id="s175" gradientUnits="userSpaceOnUse" x1="1287.9" y1="513.0" x2="1273.5" y2="435.5"><stop offset="0" stop-color="#0ac40a"/><stop offset="1" stop-color="#4c810a"/></linearGradient><linearGradient id="s176" gradientUnits="userSpaceOnUse" x1="1287.9" y1="513.0" x2="1273.5" y2="435.5"><stop offset="0" stop-color="#0ac40a"/><stop offset="1" stop-color="#4c810a"/></linearGradient><linearGradient id="s177" gradientUnits="userSpaceOnUse" x1="1244.2" y1="521.1" x2="1229.9" y2="443.6"><stop offset="0" stop-color="#0ac40a"/><stop offset="1" stop-color="#4c810a"/></linearGradient><linearGradient id="s178" gradientUnits="userSpaceOnUse" x1="1244.2" y1="521.1" x2="1229.9" y2="443.6"><stop offset="0" stop-color="#0ac40a"/><stop offset="1" stop-color="#4c810a"/></linearGradient><linearGradient id="s179" gradientUnits="userSpaceOnUse" x1="1200.5" y1="529.2" x2="1186.2" y2="451.7"><stop offset="0" stop-color="#0ac40a"/><stop offset="1" stop-color="#4c810a"/></linearGradient><linearGradient id="s180" gradientUnits="userSpaceOnUse" x1="1200.5" y1="529.2" x2="1186.2" y2="451.7"><stop offset="0" stop-color="#0ac40a"/><stop offset="1" stop-color="#4c810a"/></linearGradient><linearGradient id="s181" gradientUnits="userSpaceOnUse" x1="1491.8" y1="460.6" x2="1551.5" y2="363.2"><stop offset="0" stop-color="#16a70a"/><stop offset="1" stop-color="#89340a"/></linearGradient><linearGradient id="s182" gradientUnits="userSpaceOnUse" x1="1491.8" y1="460.6" x2="1499.4" y2="343.1"><stop offset="0" stop-color="#137e0a"/><stop offset="1" stop-color="#5f320a"/></linearGradient><linearGradient id="s183" gradientUnits="userSpaceOnUse" x1="1486.7" y1="373.7" x2="1501.7" y2="328.1"><stop offset="0" stop-color="#473f0a"/><stop offset="1" stop-color="#60270a"/></linearGradient><linearGradient id="s184" gradientUnits="userSpaceOnUse" x1="1486.7" y1="373.7" x2="1501.7" y2="328.1"><stop offset="0" stop-color="#473f0a"/><stop offset="1" stop-color="#60270a"/></linearGradient><linearGradient id="s185" gradientUnits="userSpaceOnUse" x1="1480.9" y1="374.8" x2="1477.0" y2="353.8"><stop offset="0" stop-color="#7b6c0a"/><stop offset="1" stop-color="#8a5d0a"/></linearGradient><linearGradient id="s186" gradientUnits="userSpaceOnUse" x1="1480.9" y1="374.8" x2="1477.0" y2="353.8"><stop offset="0" stop-color="#7b6c0a"/><stop offset="1" stop-color="#8a5d0a"/></linearGradient><linearGradient id="s187" gradientUnits="userSpaceOnUse" x1="1472.2" y1="391.0" x2="1479.2" y2="356.5"><stop offset="0" stop-color="#4f590a"/><stop offset="1" stop-color="#64440a"/></linearGradient><linearGradient id="s188" gradientUnits="userSpaceOnUse" x1="1472.2" y1="391.0" x2="1479.2" y2="356.5"><stop offset="0" stop-color="#4f590a"/><stop offset="1" stop-color="#64440a"/></linearGradient><linearGradient id="s189" gradientUnits="userSpaceOnUse" x1="1460.5" y1="437.0" x2="1485.6" y2="381.4"><stop offset="0" stop-color="#27600a"/><stop offset="1" stop-color="#473f0a"/></linearGradient><linearGradient id="s190" gradientUnits="userSpaceOnUse" x1="1460.5" y1="437.0" x2="1481.1" y2="377.5"><stop offset="0" stop-color="#27600a"/><stop offset="1" stop-color="#473f0a"/></linearGradient><linearGradient id="s191" gradientUnits="userSpaceOnUse" x1="1443.0" y1="527.9" x2="1453.9" y2="424.7"><stop offset="0" stop-color="#0a7c23"/><stop offset="0.385" stop-color="#0a950a"/><stop offset="1" stop-color="#326d0a"/></linearGradient><linearGradient id="s192" gradientUnits="userSpaceOnUse" x1="1443.0" y1="527.9" x2="1483.9" y2="439.6"><stop offset="0" stop-color="#0a681e"/><stop offset="0.385" stop-color="#0a7d0a"/><stop offset="1" stop-color="#2b5c0a"/></linearGradient><linearGradient id="s193" gradientUnits="userSpaceOnUse" x1="1428.5" y1="559.8" x2="1417.8" y2="480.8"><stop offset="0" stop-color="#0a8544"/><stop offset="0.900" stop-color="#0ac00a"/><stop offset="1" stop-color="#10b90a"/></linearGradient><linearGradient id="s194" gradientUnits="userSpaceOnUse" x1="1428.5" y1="559.8" x2="1431.9" y2="478.7"><stop offset="0" stop-color="#0a743c"/><stop offset="0.900" stop-color="#0aa50a"/><stop offset="1" stop-color="#10a00a"/></linearGradient><linearGradient id="s195" gradientUnits="userSpaceOnUse" x1="1413.9" y1="562.5" x2="1400.9" y2="492.1"><stop offset="0" stop-color="#0a8946"/><stop offset="1" stop-color="#0ac60a"/></linearGradient><linearGradient id="s196" gradientUnits="userSpaceOnUse" x1="1413.9" y1="562.5" x2="1400.9" y2="492.1"><stop offset="0" stop-color="#0a8946"/><stop offset="1" stop-color="#0ac60a"/></linearGradient><linearGradient id="s197" gradientUnits="userSpaceOnUse" x1="1384.8" y1="567.9" x2="1371.7" y2="497.5"><stop offset="0" stop-color="#0a8946"/><stop offset="1" stop-color="#0ac60a"/></linearGradient><linearGradient id="s198" gradientUnits="userSpaceOnUse" x1="1384.8" y1="567.9" x2="1371.7" y2="497.5"><stop offset="0" stop-color="#0a8946"/><stop offset="1" stop-color="#0ac60a"/></linearGradient><linearGradient id="s199" gradientUnits="userSpaceOnUse" x1="1355.7" y1="573.3" x2="1342.6" y2="502.9"><stop offset="0" stop-color="#0a8946"/><stop offset="1" stop-color="#0ac60a"/></linearGradient><linearGradient id="s200" gradientUnits="userSpaceOnUse" x1="1355.7" y1="573.3" x2="1342.6" y2="502.9"><stop offset="0" stop-color="#0a8946"/><stop offset="1" stop-color="#0ac60a"/></linearGradient><linearGradient id="s201" gradientUnits="userSpaceOnUse" x1="1326.6" y1="578.7" x2="1313.5" y2="508.3"><stop offset="0" stop-color="#0a8946"/><stop offset="1" stop-color="#0ac60a"/></linearGradient><linearGradient id="s202" gradientUnits="userSpaceOnUse" x1="1326.6" y1="578.7" x2="1313.5" y2="508.3"><stop offset="0" stop-color="#0a8946"/><stop offset="1" stop-color="#0ac60a"/></linearGradient><linearGradient id="s203" gradientUnits="userSpaceOnUse" x1="1312.0" y1="581.4" x2="1298.9" y2="511.0"><stop offset="0" stop-color="#0a8946"/><stop offset="1" stop-color="#0ac60a"/></linearGradient><linearGradient id="s204" gradientUnits="userSpaceOnUse" x1="1312.0" y1="581.4" x2="1298.9" y2="511.0"><stop offset="0" stop-color="#0a8946"/><stop offset="1" stop-color="#0ac60a"/></linearGradient><linearGradient id="s205" gradientUnits="userSpaceOnUse" x1="1297.4" y1="584.1" x2="1284.4" y2="513.7"><stop offset="0" stop-color="#0a8946"/><stop offset="1" stop-color="#0ac60a"/></linearGradient><linearGradient id="s206" gradientUnits="userSpaceOnUse" x1="1297.4" y1="584.1" x2="1284.4" y2="513.7"><stop offset="0" stop-color="#0a8946"/><stop offset="1" stop-color="#0ac60a"/></linearGradient><linearGradient id="s207" gradientUnits="userSpaceOnUse" x1="1253.8" y1="592.2" x2="1240.7" y2="521.8"><stop offset="0" stop-color="#0a8946"/><stop offset="1" stop-color="#0ac60a"/></linearGradient><linearGradient id="s208" gradientUnits="userSpaceOnUse" x1="1253.8" y1="592.2" x2="1240.7" y2="521.8"><stop offset="0" stop-color="#0a8946"/><stop offset="1" stop-color="#0ac60a"/></linearGradient><linearGradient id="s209" gradientUnits="userSpaceOnUse" x1="1210.1" y1="600.3" x2="1197.0" y2="529.9"><stop offset="0" stop-color="#0a8946"/><stop offset="1" stop-color="#0ac60a"/></linearGradient><linearGradient id="s210" gradientUnits="userSpaceOnUse" x1="1210.1" y1="600.3" x2="1197.0" y2="529.9"><stop offset="0" stop-color="#0a8946"/><stop offset="1" stop-color="#0ac60a"/></linearGradient><linearGradient id="s211" gradientUnits="userSpaceOnUse" x1="1501.2" y1="397.2" x2="1471.0" y2="370.8"><stop offset="0" stop-color="#5f7b0a"/><stop offset="1" stop-color="#90490a"/></linearGradient><linearGradient id="s212" gradientUnits="userSpaceOnUse" x1="1507.0" y1="461.9" x2="1468.8" y2="445.1"><stop offset="0" stop-color="#1eb40a"/><stop offset="1" stop-color="#70620a"/></linearGradient><linearGradient id="s213" gradientUnits="userSpaceOnUse" x1="1492.4" y1="376.9" x2="1507.7" y2="349.8"><stop offset="0" stop-color="#473f0a"/><stop offset="1" stop-color="#582f0a"/></linearGradient><linearGradient id="s214" gradientUnits="userSpaceOnUse" x1="1501.2" y1="397.2" x2="1479.0" y2="350.7"><stop offset="0" stop-color="#5e7b0a"/><stop offset="1" stop-color="#90490a"/></linearGradient><linearGradient id="s215" gradientUnits="userSpaceOnUse" x1="1486.6" y1="421.8" x2="1478.0" y2="375.3"><stop offset="0" stop-color="#46880a"/><stop offset="1" stop-color="#6e600a"/></linearGradient><linearGradient id="s216" gradientUnits="userSpaceOnUse" x1="1486.6" y1="421.8" x2="1507.2" y2="385.2"><stop offset="0" stop-color="#2f580a"/><stop offset="1" stop-color="#473f0a"/></linearGradient><linearGradient id="s217" gradientUnits="userSpaceOnUse" x1="1477.9" y1="503.8" x2="1462.0" y2="377.2"><stop offset="0" stop-color="#0aa316"/><stop offset="0.118" stop-color="#0aaf0a"/><stop offset="1" stop-color="#63570a"/></linearGradient><linearGradient id="s218" gradientUnits="userSpaceOnUse" x1="1477.9" y1="503.8" x2="1505.4" y2="380.2"><stop offset="0" stop-color="#0a7512"/><stop offset="0.118" stop-color="#0a7d0a"/><stop offset="1" stop-color="#473f0a"/></linearGradient><linearGradient id="s219" gradientUnits="userSpaceOnUse" x1="1466.2" y1="513.3" x2="1464.4" y2="391.2"><stop offset="0" stop-color="#0a8f1a"/><stop offset="0.187" stop-color="#0a9f0a"/><stop offset="1" stop-color="#4f5a0a"/></linearGradient><linearGradient id="s220" gradientUnits="userSpaceOnUse" x1="1466.2" y1="513.3" x2="1447.1" y2="395.1"><stop offset="0" stop-color="#0aa21c"/><stop offset="0.187" stop-color="#0ab40a"/><stop offset="1" stop-color="#59650a"/></linearGradient><linearGradient id="s221" gradientUnits="userSpaceOnUse" x1="1448.8" y1="567.6" x2="1467.4" y2="438.0"><stop offset="0" stop-color="#0a5936"/><stop offset="0.588" stop-color="#0a850a"/><stop offset="1" stop-color="#29660a"/></linearGradient><linearGradient id="s222" gradientUnits="userSpaceOnUse" x1="1448.8" y1="567.6" x2="1442.8" y2="437.8"><stop offset="0" stop-color="#0a6e42"/><stop offset="0.588" stop-color="#0aa60a"/><stop offset="1" stop-color="#317f0a"/></linearGradient><linearGradient id="s223" gradientUnits="userSpaceOnUse" x1="1434.2" y1="570.3" x2="1445.5" y2="528.6"><stop offset="0" stop-color="#0a623b"/><stop offset="1" stop-color="#0a7a22"/></linearGradient><linearGradient id="s224" gradientUnits="userSpaceOnUse" x1="1434.2" y1="570.3" x2="1426.9" y2="530.9"><stop offset="0" stop-color="#0a844e"/><stop offset="1" stop-color="#0aa52c"/></linearGradient><linearGradient id="s225" gradientUnits="userSpaceOnUse" x1="1419.6" y1="573.0" x2="1417.6" y2="561.8"><stop offset="0" stop-color="#0a9155"/><stop offset="1" stop-color="#0a994e"/></linearGradient><linearGradient id="s226" gradientUnits="userSpaceOnUse" x1="1419.6" y1="573.0" x2="1417.6" y2="561.8"><stop offset="0" stop-color="#0a9155"/><stop offset="1" stop-color="#0a994e"/></linearGradient><linearGradient id="s227" gradientUnits="userSpaceOnUse" x1="1390.5" y1="578.4" x2="1388.4" y2="567.2"><stop offset="0" stop-color="#0a9155"/><stop offset="1" stop-color="#0a994e"/></linearGradient><linearGradient id="s228" gradientUnits="userSpaceOnUse" x1="1390.5" y1="578.4" x2="1388.4" y2="567.2"><stop offset="0" stop-color="#0a9155"/><stop offset="1" stop-color="#0a994e"/></linearGradient><linearGradient id="s229" gradientUnits="userSpaceOnUse" x1="1361.4" y1="583.8" x2="1359.3" y2="572.6"><stop offset="0" stop-color="#0a9155"/><stop offset="1" stop-color="#0a994e"/></linearGradient><linearGradient id="s230" gradientUnits="userSpaceOnUse" x1="1361.4" y1="583.8" x2="1359.3" y2="572.6"><stop offset="0" stop-color="#0a9155"/><stop offset="1" stop-color="#0a994e"/></linearGradient><linearGradient id="s231" gradientUnits="userSpaceOnUse" x1="1332.3" y1="589.2" x2="1330.2" y2="578.0"><stop offset="0" stop-color="#0a9155"/><stop offset="1" stop-color="#0a994e"/></linearGradient><linearGradient id="s232" gradientUnits="userSpaceOnUse" x1="1332.3" y1="589.2" x2="1330.2" y2="578.0"><stop offset="0" stop-color="#0a9155"/><stop offset="1" stop-color="#0a994e"/></linearGradient><linearGradient id="s233" gradientUnits="userSpaceOnUse" x1="1317.7" y1="591.9" x2="1315.6" y2="580.7"><stop offset="0" stop-color="#0a9155"/><stop offset="1" stop-color="#0a994e"/></linearGradient><linearGradient id="s234" gradientUnits="userSpaceOnUse" x1="1317.7" y1="591.9" x2="1315.6" y2="580.7"><stop offset="0" stop-color="#0a9155"/><stop offset="1" stop-color="#0a994e"/></linearGradient><linearGradient id="s235" gradientUnits="userSpaceOnUse" x1="1303.2" y1="594.6" x2="1301.1" y2="583.4"><stop offset="0" stop-color="#0a9155"/><stop offset="1" stop-color="#0a994e"/></linearGradient><linearGradient id="s236" gradientUnits="userSpaceOnUse" x1="1303.2" y1="594.6" x2="1301.1" y2="583.4"><stop offset="0" stop-color="#0a9155"/><stop offset="1" stop-color="#0a994e"/></linearGradient><linearGradient id="s237" gradientUnits="userSpaceOnUse" x1="1259.5" y1="602.7" x2="1257.4" y2="591.5"><stop offset="0" stop-color="#0a9155"/><stop offset="1" stop-color="#0a994e"/></linearGradient><linearGradient id="s238" gradientUnits="userSpaceOnUse" x1="1259.5" y1="602.7" x2="1257.4" y2="591.5"><stop offset="0" stop-color="#0a9155"/><stop offset="1" stop-color="#0a994e"/></linearGradient><linearGradient id="s239" gradientUnits="userSpaceOnUse" x1="1215.8" y1="610.8" x2="1213.7" y2="599.6"><stop offset="0" stop-color="#0a9155"/><stop offset="1" stop-color="#0a994e"/></linearGradient><linearGradient id="s240" gradientUnits="userSpaceOnUse" x1="1215.8" y1="610.8" x2="1213.7" y2="599.6"><stop offset="0" stop-color="#0a9155"/><stop offset="1" stop-color="#0a994e"/></linearGradient><linearGradient id="s241" gradientUnits="userSpaceOnUse" x1="1507.0" y1="461.9" x2="1534.3" y2="441.5"><stop offset="0" stop-color="#1eae0a"/><stop offset="1" stop-color="#59730a"/></linearGradient><linearGradient id="s242" gradientUnits="userSpaceOnUse" x1="1514.6" y1="488.1" x2="1533.0" y2="470.1"><stop offset="0" stop-color="#0ac40a"/><stop offset="1" stop-color="#329c0a"/></linearGradient><linearGradient id="s243" gradientUnits="userSpaceOnUse" x1="1500.1" y1="432.4" x2="1472.9" y2="389.3"><stop offset="0" stop-color="#449b0a"/><stop offset="1" stop-color="#77680a"/></linearGradient><linearGradient id="s244" gradientUnits="userSpaceOnUse" x1="1508.8" y1="445.3" x2="1488.3" y2="403.6"><stop offset="0" stop-color="#36ab0a"/><stop offset="1" stop-color="#627f0a"/></linearGradient><linearGradient id="s245" gradientUnits="userSpaceOnUse" x1="1494.2" y1="462.6" x2="1515.8" y2="383.3"><stop offset="0" stop-color="#1a6c0a"/><stop offset="1" stop-color="#473f0a"/></linearGradient><linearGradient id="s246" gradientUnits="userSpaceOnUse" x1="1494.2" y1="462.6" x2="1505.5" y2="378.7"><stop offset="0" stop-color="#1c740a"/><stop offset="1" stop-color="#4c440a"/></linearGradient><linearGradient id="s247" gradientUnits="userSpaceOnUse" x1="1477.9" y1="503.8" x2="1520.5" y2="447.6"><stop offset="0" stop-color="#0a7512"/><stop offset="0.182" stop-color="#0a7d0a"/><stop offset="1" stop-color="#2f580a"/></linearGradient><linearGradient id="s248" gradientUnits="userSpaceOnUse" x1="1485.5" y1="493.5" x2="1494.1" y2="422.8"><stop offset="0" stop-color="#0a900a"/><stop offset="1" stop-color="#35650a"/></linearGradient><linearGradient id="s249" gradientUnits="userSpaceOnUse" x1="1466.2" y1="513.3" x2="1461.2" y2="500.6"><stop offset="0" stop-color="#0a7317"/><stop offset="1" stop-color="#0a7f0a"/></linearGradient><linearGradient id="s250" gradientUnits="userSpaceOnUse" x1="1477.9" y1="503.8" x2="1476.3" y2="495.2"><stop offset="0" stop-color="#0a9515"/><stop offset="1" stop-color="#0aa00a"/></linearGradient><linearGradient id="s251" gradientUnits="userSpaceOnUse" x1="1456.4" y1="571.9" x2="1483.8" y2="523.1"><stop offset="0" stop-color="#0a5433"/><stop offset="1" stop-color="#0a7016"/></linearGradient><linearGradient id="s252" gradientUnits="userSpaceOnUse" x1="1456.4" y1="571.9" x2="1499.6" y2="552.3"><stop offset="0" stop-color="#0a5433"/><stop offset="1" stop-color="#0a7d0a"/></linearGradient><linearGradient id="s253" gradientUnits="userSpaceOnUse" x1="1514.6" y1="488.1" x2="1533.2" y2="468.4"><stop offset="0" stop-color="#0ac30a"/><stop offset="1" stop-color="#329c0a"/></linearGradient><linearGradient id="s254" gradientUnits="userSpaceOnUse" x1="1514.6" y1="488.1" x2="1519.1" y2="464.0"><stop offset="0" stop-color="#0ab00a"/><stop offset="1" stop-color="#22980a"/></linearGradient><linearGradient id="s255" gradientUnits="userSpaceOnUse" x1="1505.8" y1="464.8" x2="1490.8" y2="437.5"><stop offset="0" stop-color="#28bc0a"/><stop offset="1" stop-color="#459e0a"/></linearGradient><linearGradient id="s256" gradientUnits="userSpaceOnUse" x1="1505.8" y1="464.8" x2="1502.4" y2="446.5"><stop offset="0" stop-color="#28bb0a"/><stop offset="1" stop-color="#36ac0a"/></linearGradient><linearGradient id="s257" gradientUnits="userSpaceOnUse" x1="1500.0" y1="473.2" x2="1514.3" y2="438.2"><stop offset="0" stop-color="#16700a"/><stop offset="1" stop-color="#2b5c0a"/></linearGradient><linearGradient id="s258" gradientUnits="userSpaceOnUse" x1="1500.0" y1="473.2" x2="1498.4" y2="432.4"><stop offset="0" stop-color="#1ca30a"/><stop offset="1" stop-color="#3b840a"/></linearGradient><linearGradient id="s259" gradientUnits="userSpaceOnUse" x1="1485.5" y1="493.5" x2="1488.4" y2="494.0"><stop offset="0" stop-color="#0a7d0a"/><stop offset="1" stop-color="#1a6c0a"/></linearGradient><linearGradient id="s260" gradientUnits="userSpaceOnUse" x1="1491.2" y1="474.8" x2="1489.2" y2="463.6"><stop offset="0" stop-color="#21c60a"/><stop offset="1" stop-color="#28be0a"/></linearGradient><linearGradient id="s261" gradientUnits="userSpaceOnUse" x1="1473.9" y1="495.6" x2="1470.7" y2="478.6"><stop offset="0" stop-color="#0a800a"/><stop offset="1" stop-color="#17740a"/></linearGradient><linearGradient id="s262" gradientUnits="userSpaceOnUse" x1="1485.5" y1="493.5" x2="1482.4" y2="476.4"><stop offset="0" stop-color="#0a800a"/><stop offset="1" stop-color="#17740a"/></linearGradient><linearGradient id="s263" gradientUnits="userSpaceOnUse" x1="1462.1" y1="589.7" x2="1487.3" y2="499.4"><stop offset="0" stop-color="#0a4c3b"/><stop offset="1" stop-color="#0a7d0a"/></linearGradient><linearGradient id="s264" gradientUnits="userSpaceOnUse" x1="1462.1" y1="589.7" x2="1524.0" y2="554.1"><stop offset="0" stop-color="#0a4c3b"/><stop offset="0.800" stop-color="#0a7d0a"/><stop offset="1" stop-color="#16700a"/></linearGradient><linearGradient id="s265" gradientUnits="userSpaceOnUse" x1="1447.6" y1="592.4" x2="1444.2" y2="574.2"><stop offset="0" stop-color="#0a8063"/><stop offset="1" stop-color="#0a8f54"/></linearGradient><linearGradient id="s266" gradientUnits="userSpaceOnUse" x1="1447.6" y1="592.4" x2="1444.2" y2="574.2"><stop offset="0" stop-color="#0a8063"/><stop offset="1" stop-color="#0a8f54"/></linearGradient><linearGradient id="s267" gradientUnits="userSpaceOnUse" x1="1433.0" y1="595.1" x2="1429.6" y2="576.9"><stop offset="0" stop-color="#0a8063"/><stop offset="1" stop-color="#0a8f54"/></linearGradient><linearGradient id="s268" gradientUnits="userSpaceOnUse" x1="1433.0" y1="595.1" x2="1429.6" y2="576.9"><stop offset="0" stop-color="#0a8063"/><stop offset="1" stop-color="#0a8f54"/></linearGradient><linearGradient id="s269" gradientUnits="userSpaceOnUse" x1="1403.9" y1="600.5" x2="1400.5" y2="582.3"><stop offset="0" stop-color="#0a8063"/><stop offset="1" stop-color="#0a8f54"/></linearGradient><linearGradient id="s270" gradientUnits="userSpaceOnUse" x1="1403.9" y1="600.5" x2="1400.5" y2="582.3"><stop offset="0" stop-color="#0a8063"/><stop offset="1" stop-color="#0a8f54"/></linearGradient><linearGradient id="s271" gradientUnits="userSpaceOnUse" x1="1374.8" y1="605.9" x2="1371.4" y2="587.7"><stop offset="0" stop-color="#0a8063"/><stop offset="1" stop-color="#0a8f54"/></linearGradient><linearGradient id="s272" gradientUnits="userSpaceOnUse" x1="1374.8" y1="605.9" x2="1371.4" y2="587.7"><stop offset="0" stop-color="#0a8063"/><stop offset="1" stop-color="#0a8f54"/></linearGradient><linearGradient id="s273" gradientUnits="userSpaceOnUse" x1="1345.6" y1="611.3" x2="1342.2" y2="593.1"><stop offset="0" stop-color="#0a8063"/><stop offset="1" stop-color="#0a8f54"/></linearGradient><linearGradient id="s274" gradientUnits="userSpaceOnUse" x1="1345.6" y1="611.3" x2="1342.2" y2="593.1"><stop offset="0" stop-color="#0a8063"/><stop offset="1" stop-color="#0a8f54"/></linearGradient><linearGradient id="s275" gradientUnits="userSpaceOnUse" x1="1331.1" y1="614.0" x2="1327.7" y2="595.8"><stop offset="0" stop-color="#0a8063"/><stop offset="1" stop-color="#0a8f54"/></linearGradient><linearGradient id="s276" gradientUnits="userSpaceOnUse" x1="1331.1" y1="614.0" x2="1327.7" y2="595.8"><stop offset="0" stop-color="#0a8063"/><stop offset="1" stop-color="#0a8f54"/></linearGradient><linearGradient id="s277" gradientUnits="userSpaceOnUse" x1="1316.5" y1="616.7" x2="1313.1" y2="598.5"><stop offset="0" stop-color="#0a8063"/><stop offset="1" stop-color="#0a8f54"/></linearGradient><linearGradient id="s278" gradientUnits="userSpaceOnUse" x1="1316.5" y1="616.7" x2="1313.1" y2="598.5"><stop offset="0" stop-color="#0a8063"/><stop offset="1" stop-color="#0a8f54"/></linearGradient><linearGradient id="s279" gradientUnits="userSpaceOnUse" x1="1272.8" y1="624.8" x2="1269.4" y2="606.6"><stop offset="0" stop-color="#0a8063"/><stop offset="1" stop-color="#0a8f54"/></linearGradient><linearGradient id="s280" gradientUnits="userSpaceOnUse" x1="1272.8" y1="624.8" x2="1269.4" y2="606.6"><stop offset="0" stop-color="#0a8063"/><stop offset="1" stop-color="#0a8f54"/></linearGradient><linearGradient id="s281" gradientUnits="userSpaceOnUse" x1="1229.2" y1="632.9" x2="1225.8" y2="614.7"><stop offset="0" stop-color="#0a8063"/><stop offset="1" stop-color="#0a8f54"/></linearGradient><linearGradient id="s282" gradientUnits="userSpaceOnUse" x1="1229.2" y1="632.9" x2="1225.8" y2="614.7"><stop offset="0" stop-color="#0a8063"/><stop offset="1" stop-color="#0a8f54"/></linearGradient><linearGradient id="s283" gradientUnits="userSpaceOnUse" x1="1520.2" y1="495.6" x2="1501.5" y2="475.0"><stop offset="0" stop-color="#0ad90a"/><stop offset="1" stop-color="#28bb0a"/></linearGradient><linearGradient id="s284" gradientUnits="userSpaceOnUse" x1="1520.2" y1="495.6" x2="1528.3" y2="481.2"><stop offset="0" stop-color="#0a7d0a"/><stop offset="1" stop-color="#12750a"/></linearGradient><linearGradient id="s285" gradientUnits="userSpaceOnUse" x1="1511.5" y1="497.2" x2="1505.5" y2="464.8"><stop offset="0" stop-color="#0acc0a"/><stop offset="1" stop-color="#26b00a"/></linearGradient><linearGradient id="s286" gradientUnits="userSpaceOnUse" x1="1511.5" y1="497.2" x2="1505.5" y2="464.8"><stop offset="0" stop-color="#0acc0a"/><stop offset="1" stop-color="#26b00a"/></linearGradient><linearGradient id="s287" gradientUnits="userSpaceOnUse" x1="1505.7" y1="498.3" x2="1505.7" y2="464.8"><stop offset="0" stop-color="#0ab50a"/><stop offset="1" stop-color="#229c0a"/></linearGradient><linearGradient id="s288" gradientUnits="userSpaceOnUse" x1="1505.7" y1="498.3" x2="1499.7" y2="465.9"><stop offset="0" stop-color="#0acc0a"/><stop offset="1" stop-color="#26b00a"/></linearGradient><linearGradient id="s289" gradientUnits="userSpaceOnUse" x1="1497.0" y1="499.9" x2="1492.3" y2="474.6"><stop offset="0" stop-color="#0ad20a"/><stop offset="1" stop-color="#1fbc0a"/></linearGradient><linearGradient id="s290" gradientUnits="userSpaceOnUse" x1="1497.0" y1="499.9" x2="1492.3" y2="474.6"><stop offset="0" stop-color="#0ad20a"/><stop offset="1" stop-color="#1fbc0a"/></linearGradient><linearGradient id="s291" gradientUnits="userSpaceOnUse" x1="1485.3" y1="502.1" x2="1480.6" y2="476.8"><stop offset="0" stop-color="#0ad20a"/><stop offset="1" stop-color="#1fbc0a"/></linearGradient><linearGradient id="s292" gradientUnits="userSpaceOnUse" x1="1485.3" y1="502.1" x2="1480.6" y2="476.8"><stop offset="0" stop-color="#0ad20a"/><stop offset="1" stop-color="#1fbc0a"/></linearGradient><linearGradient id="s293" gradientUnits="userSpaceOnUse" x1="1467.8" y1="629.5" x2="1495.5" y2="479.9"><stop offset="0" stop-color="#0a3750"/><stop offset="0.850" stop-color="#0a7d0a"/><stop offset="1" stop-color="#16700a"/></linearGradient><linearGradient id="s294" gradientUnits="userSpaceOnUse" x1="1467.8" y1="629.5" x2="1510.8" y2="486.3"><stop offset="0" stop-color="#0a3750"/><stop offset="0.850" stop-color="#0a7d0a"/><stop offset="1" stop-color="#16700a"/></linearGradient><linearGradient id="s295" gradientUnits="userSpaceOnUse" x1="1453.3" y1="632.2" x2="1446.0" y2="592.7"><stop offset="0" stop-color="#0a547d"/><stop offset="1" stop-color="#0a765b"/></linearGradient><linearGradient id="s296" gradientUnits="userSpaceOnUse" x1="1453.3" y1="632.2" x2="1446.0" y2="592.7"><stop offset="0" stop-color="#0a547d"/><stop offset="1" stop-color="#0a765b"/></linearGradient><linearGradient id="s297" gradientUnits="userSpaceOnUse" x1="1438.7" y1="634.9" x2="1431.4" y2="595.4"><stop offset="0" stop-color="#0a547d"/><stop offset="1" stop-color="#0a765b"/></linearGradient><linearGradient id="s298" gradientUnits="userSpaceOnUse" x1="1438.7" y1="634.9" x2="1431.4" y2="595.4"><stop offset="0" stop-color="#0a547d"/><stop offset="1" stop-color="#0a765b"/></linearGradient><linearGradient id="s299" gradientUnits="userSpaceOnUse" x1="1409.6" y1="640.3" x2="1402.3" y2="600.8"><stop offset="0" stop-color="#0a547d"/><stop offset="1" stop-color="#0a765b"/></linearGradient><linearGradient id="s300" gradientUnits="userSpaceOnUse" x1="1409.6" y1="640.3" x2="1402.3" y2="600.8"><stop offset="0" stop-color="#0a547d"/><stop offset="1" stop-color="#0a765b"/></linearGradient><linearGradient id="s301" gradientUnits="userSpaceOnUse" x1="1380.5" y1="645.7" x2="1373.2" y2="606.2"><stop offset="0" stop-color="#0a547d"/><stop offset="1" stop-color="#0a765b"/></linearGradient><linearGradient id="s302" gradientUnits="userSpaceOnUse" x1="1380.5" y1="645.7" x2="1373.2" y2="606.2"><stop offset="0" stop-color="#0a547d"/><stop offset="1" stop-color="#0a765b"/></linearGradient><linearGradient id="s303" gradientUnits="userSpaceOnUse" x1="1351.4" y1="651.1" x2="1344.0" y2="611.6"><stop offset="0" stop-color="#0a547d"/><stop offset="1" stop-color="#0a765b"/></linearGradient><linearGradient id="s304" gradientUnits="userSpaceOnUse" x1="1351.4" y1="651.1" x2="1344.0" y2="611.6"><stop offset="0" stop-color="#0a547d"/><stop offset="1" stop-color="#0a765b"/></linearGradient><linearGradient id="s305" gradientUnits="userSpaceOnUse" x1="1336.8" y1="653.8" x2="1329.5" y2="614.3"><stop offset="0" stop-color="#0a547d"/><stop offset="1" stop-color="#0a765b"/></linearGradient><linearGradient id="s306" gradientUnits="userSpaceOnUse" x1="1336.8" y1="653.8" x2="1329.5" y2="614.3"><stop offset="0" stop-color="#0a547d"/><stop offset="1" stop-color="#0a765b"/></linearGradient><linearGradient id="s307" gradientUnits="userSpaceOnUse" x1="1322.2" y1="641.9" x2="1317.5" y2="616.6"><stop offset="0" stop-color="#0a6775"/><stop offset="1" stop-color="#0a7c60"/></linearGradient><linearGradient id="s308" gradientUnits="userSpaceOnUse" x1="1336.8" y1="653.8" x2="1324.6" y2="616.2"><stop offset="0" stop-color="#0a5883"/><stop offset="1" stop-color="#0a7c5f"/></linearGradient><linearGradient id="s309" gradientUnits="userSpaceOnUse" x1="1278.6" y1="650.0" x2="1273.9" y2="624.7"><stop offset="0" stop-color="#0a6775"/><stop offset="1" stop-color="#0a7c60"/></linearGradient><linearGradient id="s310" gradientUnits="userSpaceOnUse" x1="1278.6" y1="650.0" x2="1273.9" y2="624.7"><stop offset="0" stop-color="#0a6775"/><stop offset="1" stop-color="#0a7c60"/></linearGradient><linearGradient id="s311" gradientUnits="userSpaceOnUse" x1="1234.9" y1="658.1" x2="1230.2" y2="632.8"><stop offset="0" stop-color="#0a6775"/><stop offset="1" stop-color="#0a7c60"/></linearGradient><linearGradient id="s312" gradientUnits="userSpaceOnUse" x1="1234.9" y1="658.1" x2="1230.2" y2="632.8"><stop offset="0" stop-color="#0a6775"/><stop offset="1" stop-color="#0a7c60"/></linearGradient><linearGradient id="s313" gradientUnits="userSpaceOnUse" x1="1527.9" y1="602.1" x2="1519.6" y2="480.3"><stop offset="0" stop-color="#0a5a5a"/><stop offset="0.875" stop-color="#0aa90a"/><stop offset="1" stop-color="#159e0a"/></linearGradient><linearGradient id="s314" gradientUnits="userSpaceOnUse" x1="1527.9" y1="602.1" x2="1519.6" y2="480.3"><stop offset="0" stop-color="#0a5a5a"/><stop offset="0.875" stop-color="#0aa90a"/><stop offset="1" stop-color="#159e0a"/></linearGradient><linearGradient id="s315" gradientUnits="userSpaceOnUse" x1="1519.1" y1="603.8" x2="1499.8" y2="499.4"><stop offset="0" stop-color="#0a6262"/><stop offset="1" stop-color="#0abb0a"/></linearGradient><linearGradient id="s316" gradientUnits="userSpaceOnUse" x1="1519.1" y1="603.8" x2="1499.8" y2="499.4"><stop offset="0" stop-color="#0a6262"/><stop offset="1" stop-color="#0abb0a"/></linearGradient><linearGradient id="s317" gradientUnits="userSpaceOnUse" x1="1513.3" y1="604.8" x2="1494.0" y2="500.5"><stop offset="0" stop-color="#0a6262"/><stop offset="1" stop-color="#0abb0a"/></linearGradient><linearGradient id="s318" gradientUnits="userSpaceOnUse" x1="1513.3" y1="604.8" x2="1494.0" y2="500.5"><stop offset="0" stop-color="#0a6262"/><stop offset="1" stop-color="#0abb0a"/></linearGradient><linearGradient id="s319" gradientUnits="userSpaceOnUse" x1="1504.6" y1="606.4" x2="1485.2" y2="502.1"><stop offset="0" stop-color="#0a6262"/><stop offset="1" stop-color="#0abb0a"/></linearGradient><linearGradient id="s320" gradientUnits="userSpaceOnUse" x1="1504.6" y1="606.4" x2="1485.2" y2="502.1"><stop offset="0" stop-color="#0a6262"/><stop offset="1" stop-color="#0abb0a"/></linearGradient><linearGradient id="s321" gradientUnits="userSpaceOnUse" x1="1492.9" y1="608.6" x2="1473.6" y2="504.2"><stop offset="0" stop-color="#0a6262"/><stop offset="1" stop-color="#0abb0a"/></linearGradient><linearGradient id="s322" gradientUnits="userSpaceOnUse" x1="1492.9" y1="608.6" x2="1473.6" y2="504.2"><stop offset="0" stop-color="#0a6262"/><stop offset="1" stop-color="#0abb0a"/></linearGradient><linearGradient id="s323" gradientUnits="userSpaceOnUse" x1="1475.5" y1="714.1" x2="1499.8" y2="503.7"><stop offset="0" stop-color="#0a0a84"/><stop offset="1" stop-color="#0a840a"/></linearGradient><linearGradient id="s324" gradientUnits="userSpaceOnUse" x1="1475.5" y1="714.1" x2="1484.3" y2="502.0"><stop offset="0" stop-color="#0a0a92"/><stop offset="1" stop-color="#0a920a"/></linearGradient><linearGradient id="s325" gradientUnits="userSpaceOnUse" x1="1460.9" y1="716.8" x2="1445.5" y2="633.6"><stop offset="0" stop-color="#0a0abe"/><stop offset="1" stop-color="#0a5178"/></linearGradient><linearGradient id="s326" gradientUnits="userSpaceOnUse" x1="1460.9" y1="716.8" x2="1445.5" y2="633.6"><stop offset="0" stop-color="#0a0abe"/><stop offset="1" stop-color="#0a5178"/></linearGradient><linearGradient id="s327" gradientUnits="userSpaceOnUse" x1="1446.3" y1="719.5" x2="1430.9" y2="636.3"><stop offset="0" stop-color="#0a0abe"/><stop offset="1" stop-color="#0a5178"/></linearGradient><linearGradient id="s328" gradientUnits="userSpaceOnUse" x1="1446.3" y1="719.5" x2="1430.9" y2="636.3"><stop offset="0" stop-color="#0a0abe"/><stop offset="1" stop-color="#0a5178"/></linearGradient><linearGradient id="s329" gradientUnits="userSpaceOnUse" x1="1417.2" y1="724.9" x2="1401.8" y2="641.7"><stop offset="0" stop-color="#0a0abe"/><stop offset="1" stop-color="#0a5178"/></linearGradient><linearGradient id="s330" gradientUnits="userSpaceOnUse" x1="1417.2" y1="724.9" x2="1401.8" y2="641.7"><stop offset="0" stop-color="#0a0abe"/><stop offset="1" stop-color="#0a5178"/></linearGradient><linearGradient id="s331" gradientUnits="userSpaceOnUse" x1="1388.1" y1="730.3" x2="1372.7" y2="647.1"><stop offset="0" stop-color="#0a0abe"/><stop offset="1" stop-color="#0a5178"/></linearGradient><linearGradient id="s332" gradientUnits="userSpaceOnUse" x1="1388.1" y1="730.3" x2="1372.7" y2="647.1"><stop offset="0" stop-color="#0a0abe"/><stop offset="1" stop-color="#0a5178"/></linearGradient><linearGradient id="s333" gradientUnits="userSpaceOnUse" x1="1359.0" y1="735.7" x2="1343.6" y2="652.5"><stop offset="0" stop-color="#0a0abe"/><stop offset="1" stop-color="#0a5178"/></linearGradient><linearGradient id="s334" gradientUnits="userSpaceOnUse" x1="1359.0" y1="735.7" x2="1343.6" y2="652.5"><stop offset="0" stop-color="#0a0abe"/><stop offset="1" stop-color="#0a5178"/></linearGradient><linearGradient id="s335" gradientUnits="userSpaceOnUse" x1="1344.4" y1="738.4" x2="1329.0" y2="655.2"><stop offset="0" stop-color="#0a0abe"/><stop offset="1" stop-color="#0a5178"/></linearGradient><linearGradient id="s336" gradientUnits="userSpaceOnUse" x1="1344.4" y1="738.4" x2="1329.0" y2="655.2"><stop offset="0" stop-color="#0a0abe"/><stop offset="1" stop-color="#0a5178"/></linearGradient><linearGradient id="s337" gradientUnits="userSpaceOnUse" x1="1336.8" y1="653.8" x2="1323.0" y2="654.6"><stop offset="0" stop-color="#0a6090"/><stop offset="1" stop-color="#0a7080"/></linearGradient><linearGradient id="s338" gradientUnits="userSpaceOnUse" x1="1344.4" y1="738.4" x2="1294.0" y2="695.8"><stop offset="0" stop-color="#0a0acd"/><stop offset="1" stop-color="#0a5e7a"/></linearGradient><linearGradient id="s339" gradientUnits="userSpaceOnUse" x1="1286.2" y1="661.6" x2="1283.8" y2="649.0"><stop offset="0" stop-color="#0a6482"/><stop offset="1" stop-color="#0a6b7a"/></linearGradient><linearGradient id="s340" gradientUnits="userSpaceOnUse" x1="1286.2" y1="661.6" x2="1283.8" y2="649.0"><stop offset="0" stop-color="#0a6482"/><stop offset="1" stop-color="#0a6b7a"/></linearGradient><linearGradient id="s341" gradientUnits="userSpaceOnUse" x1="1242.5" y1="669.7" x2="1240.2" y2="657.1"><stop offset="0" stop-color="#0a6482"/><stop offset="1" stop-color="#0a6b7a"/></linearGradient><linearGradient id="s342" gradientUnits="userSpaceOnUse" x1="1242.5" y1="669.7" x2="1240.2" y2="657.1"><stop offset="0" stop-color="#0a6482"/><stop offset="1" stop-color="#0a6b7a"/></linearGradient>
</defs>
<polygon points="1074.7,663.0 1365.9,609.0 1365.9,200.0 1074.7,254.0" fill="#ffe1e1"/>
<polygon points="1533.7,703.3 1365.9,609.0 1365.9,200.0 1533.7,294.3" fill="#9c8e8e"/>
<polygon points="1242.5,757.3 1074.7,663.0 1365.9,609.0 1533.7,703.3" fill="#c4a8a8"/>
<path class="bx" d="M1074.7 254.0 L1365.9 200.0 L1533.7 294.3 M1074.7 663.0 L1074.7 254.0 M1533.7 703.3 L1533.7 294.3"/>
<polygon points="1369.6,206.4 1360.1,201.1 1365.9,419.1" fill="url(#s1)" stroke="url(#s1)" stroke-width=".8"/>
<polygon points="1369.6,206.4 1365.9,419.1 1375.4,424.5" fill="url(#s2)" stroke="url(#s2)" stroke-width=".8"/>
<path d="M1369.6 206.4L1360.1 201.1L1365.9 419.1L1375.4 424.5Z" class="gs"/>
<polygon points="1360.9,208.1 1351.3,202.7 1360.1,201.1" fill="#cf0a0a" stroke="#cf0a0a" stroke-width=".8"/>
<polygon points="1360.9,208.1 1360.1,201.1 1369.6,206.4" fill="#cf0a0a" stroke="#cf0a0a" stroke-width=".8"/>
<path d="M1360.9 208.1L1351.3 202.7L1360.1 201.1L1369.6 206.4Z" class="gl"/>
<polygon points="1355.1,238.4 1345.5,233.0 1351.3,202.7" fill="url(#s3)" stroke="url(#s3)" stroke-width=".8"/>
<polygon points="1355.1,238.4 1351.3,202.7 1360.9,208.1" fill="url(#s4)" stroke="url(#s4)" stroke-width=".8"/>
<path d="M1355.1 238.4L1345.5 233.0L1351.3 202.7L1360.9 208.1Z" class="gs"/>
<polygon points="1346.3,240.0 1336.8,234.6 1345.5,233.0" fill="#b3260a" stroke="#b3260a" stroke-width=".8"/>
<polygon points="1346.3,240.0 1345.5,233.0 1355.1,238.4" fill="#b3260a" stroke="#b3260a" stroke-width=".8"/>
<path d="M1346.3 240.0L1336.8 234.6L1345.5 233.0L1355.1 238.4Z" class="gl"/>
<polygon points="1334.7,242.1 1325.1,236.8 1336.8,234.6" fill="#b3260a" stroke="#b3260a" stroke-width=".8"/>
<polygon points="1334.7,242.1 1336.8,234.6 1346.3,240.0" fill="#b3260a" stroke="#b3260a" stroke-width=".8"/>
<path d="M1334.7 242.1L1325.1 236.8L1336.8 234.6L1346.3 240.0Z" class="gl"/>
<polygon points="1317.2,274.6 1307.7,269.2 1325.1,236.8" fill="url(#s5)" stroke="url(#s5)" stroke-width=".8"/>
<polygon points="1317.2,274.6 1325.1,236.8 1334.7,242.1" fill="url(#s6)" stroke="url(#s6)" stroke-width=".8"/>
<path d="M1317.2 274.6L1307.7 269.2L1325.1 236.8L1334.7 242.1Z" class="gs"/>
<polygon points="1302.6,277.3 1293.1,271.9 1307.7,269.2" fill="#97420a" stroke="#97420a" stroke-width=".8"/>
<polygon points="1302.6,277.3 1307.7,269.2 1317.2,274.6" fill="#97420a" stroke="#97420a" stroke-width=".8"/>
<path d="M1302.6 277.3L1293.1 271.9L1307.7 269.2L1317.2 274.6Z" class="gl"/>
<polygon points="1288.1,280.0 1278.5,274.6 1293.1,271.9" fill="#97420a" stroke="#97420a" stroke-width=".8"/>
<polygon points="1288.1,280.0 1293.1,271.9 1302.6,277.3" fill="#97420a" stroke="#97420a" stroke-width=".8"/>
<path d="M1288.1 280.0L1278.5 274.6L1293.1 271.9L1302.6 277.3Z" class="gl"/>
<polygon points="1259.0,285.4 1249.4,280.0 1278.5,274.6" fill="#97420a" stroke="#97420a" stroke-width=".8"/>
<polygon points="1259.0,285.4 1278.5,274.6 1288.1,280.0" fill="#97420a" stroke="#97420a" stroke-width=".8"/>
<path d="M1259.0 285.4L1249.4 280.0L1278.5 274.6L1288.1 280.0Z" class="gl"/>
<polygon points="1229.8,290.8 1220.3,285.4 1249.4,280.0" fill="#97420a" stroke="#97420a" stroke-width=".8"/>
<polygon points="1229.8,290.8 1249.4,280.0 1259.0,285.4" fill="#97420a" stroke="#97420a" stroke-width=".8"/>
<path d="M1229.8 290.8L1220.3 285.4L1249.4 280.0L1259.0 285.4Z" class="gl"/>
<polygon points="1200.7,296.2 1191.2,290.8 1220.3,285.4" fill="#97420a" stroke="#97420a" stroke-width=".8"/>
<polygon points="1200.7,296.2 1220.3,285.4 1229.8,290.8" fill="#97420a" stroke="#97420a" stroke-width=".8"/>
<path d="M1200.7 296.2L1191.2 290.8L1220.3 285.4L1229.8 290.8Z" class="gl"/>
<polygon points="1186.2,298.9 1176.6,293.5 1191.2,290.8" fill="#97420a" stroke="#97420a" stroke-width=".8"/>
<polygon points="1186.2,298.9 1191.2,290.8 1200.7,296.2" fill="#97420a" stroke="#97420a" stroke-width=".8"/>
<path d="M1186.2 298.9L1176.6 293.5L1191.2 290.8L1200.7 296.2Z" class="gl"/>
<polygon points="1171.6,301.6 1162.1,296.2 1176.6,293.5" fill="#97420a" stroke="#97420a" stroke-width=".8"/>
<polygon points="1171.6,301.6 1176.6,293.5 1186.2,298.9" fill="#97420a" stroke="#97420a" stroke-width=".8"/>
<path d="M1171.6 301.6L1162.1 296.2L1176.6 293.5L1186.2 298.9Z" class="gl"/>
<polygon points="1127.9,309.7 1118.4,304.3 1162.1,296.2" fill="#97420a" stroke="#97420a" stroke-width=".8"/>
<polygon points="1127.9,309.7 1162.1,296.2 1171.6,301.6" fill="#97420a" stroke="#97420a" stroke-width=".8"/>
<path d="M1127.9 309.7L1118.4 304.3L1162.1 296.2L1171.6 301.6Z" class="gl"/>
<polygon points="1084.2,317.8 1074.7,312.4 1118.4,304.3" fill="#97420a" stroke="#97420a" stroke-width=".8"/>
<polygon points="1084.2,317.8 1118.4,304.3 1127.9,309.7" fill="#97420a" stroke="#97420a" stroke-width=".8"/>
<path d="M1084.2 317.8L1074.7 312.4L1118.4 304.3L1127.9 309.7Z" class="gl"/>
<polygon points="1381.1,212.9 1369.6,206.4 1375.4,424.5" fill="url(#s7)" stroke="url(#s7)" stroke-width=".8"/>
<polygon points="1381.1,212.9 1375.4,424.5 1386.9,430.9" fill="url(#s8)" stroke="url(#s8)" stroke-width=".8"/>
<path d="M1381.1 212.9L1369.6 206.4L1375.4 424.5L1386.9 430.9Z" class="gs"/>
<polygon points="1372.3,214.5 1360.9,208.1 1369.6,206.4" fill="#cf0a0a" stroke="#cf0a0a" stroke-width=".8"/>
<polygon points="1372.3,214.5 1369.6,206.4 1381.1,212.9" fill="#cf0a0a" stroke="#cf0a0a" stroke-width=".8"/>
<path d="M1372.3 214.5L1360.9 208.1L1369.6 206.4L1381.1 212.9Z" class="gl"/>
<polygon points="1366.5,244.8 1355.1,238.4 1360.9,208.1" fill="url(#s9)" stroke="url(#s9)" stroke-width=".8"/>
<polygon points="1366.5,244.8 1360.9,208.1 1372.3,214.5" fill="url(#s10)" stroke="url(#s10)" stroke-width=".8"/>
<path d="M1366.5 244.8L1355.1 238.4L1360.9 208.1L1372.3 214.5Z" class="gs"/>
<polygon points="1357.8,246.4 1346.3,240.0 1355.1,238.4" fill="#b3260a" stroke="#b3260a" stroke-width=".8"/>
<polygon points="1357.8,246.4 1355.1,238.4 1366.5,244.8" fill="#b3260a" stroke="#b3260a" stroke-width=".8"/>
<path d="M1357.8 246.4L1346.3 240.0L1355.1 238.4L1366.5 244.8Z" class="gl"/>
<polygon points="1346.1,248.6 1334.7,242.1 1346.3,240.0" fill="#b3260a" stroke="#b3260a" stroke-width=".8"/>
<polygon points="1346.1,248.6 1346.3,240.0 1357.8,246.4" fill="#b3260a" stroke="#b3260a" stroke-width=".8"/>
<path d="M1346.1 248.6L1334.7 242.1L1346.3 240.0L1357.8 246.4Z" class="gl"/>
<polygon points="1328.6,281.0 1317.2,274.6 1334.7,242.1" fill="url(#s11)" stroke="url(#s11)" stroke-width=".8"/>
<polygon points="1328.6,281.0 1334.7,242.1 1346.1,248.6" fill="url(#s12)" stroke="url(#s12)" stroke-width=".8"/>
<path d="M1328.6 281.0L1317.2 274.6L1334.7 242.1L1346.1 248.6Z" class="gs"/>
<polygon points="1314.1,283.7 1302.6,277.3 1317.2,274.6" fill="#97420a" stroke="#97420a" stroke-width=".8"/>
<polygon points="1314.1,283.7 1317.2,274.6 1328.6,281.0" fill="#97420a" stroke="#97420a" stroke-width=".8"/>
<path d="M1314.1 283.7L1302.6 277.3L1317.2 274.6L1328.6 281.0Z" class="gl"/>
<polygon points="1299.5,286.4 1288.1,280.0 1302.6,277.3" fill="#97420a" stroke="#97420a" stroke-width=".8"/>
<polygon points="1299.5,286.4 1302.6,277.3 1314.1,283.7" fill="#97420a" stroke="#97420a" stroke-width=".8"/>
<path d="M1299.5 286.4L1288.1 280.0L1302.6 277.3L1314.1 283.7Z" class="gl"/>
<polygon points="1270.4,291.8 1259.0,285.4 1288.1,280.0" fill="#97420a" stroke="#97420a" stroke-width=".8"/>
<polygon points="1270.4,291.8 1288.1,280.0 1299.5,286.4" fill="#97420a" stroke="#97420a" stroke-width=".8"/>
<path d="M1270.4 291.8L1259.0 285.4L1288.1 280.0L1299.5 286.4Z" class="gl"/>
<polygon points="1241.3,297.2 1229.8,290.8 1259.0,285.4" fill="#97420a" stroke="#97420a" stroke-width=".8"/>
<polygon points="1241.3,297.2 1259.0,285.4 1270.4,291.8" fill="#97420a" stroke="#97420a" stroke-width=".8"/>
<path d="M1241.3 297.2L1229.8 290.8L1259.0 285.4L1270.4 291.8Z" class="gl"/>
<polygon points="1212.2,302.6 1200.7,296.2 1229.8,290.8" fill="#97420a" stroke="#97420a" stroke-width=".8"/>
<polygon points="1212.2,302.6 1229.8,290.8 1241.3,297.2" fill="#97420a" stroke="#97420a" stroke-width=".8"/>
<path d="M1212.2 302.6L1200.7 296.2L1229.8 290.8L1241.3 297.2Z" class="gl"/>
<polygon points="1197.6,305.3 1186.2,298.9 1200.7,296.2" fill="#97420a" stroke="#97420a" stroke-width=".8"/>
<polygon points="1197.6,305.3 1200.7,296.2 1212.2,302.6" fill="#97420a" stroke="#97420a" stroke-width=".8"/>
<path d="M1197.6 305.3L1186.2 298.9L1200.7 296.2L1212.2 302.6Z" class="gl"/>
<polygon points="1183.0,308.0 1171.6,301.6 1186.2,298.9" fill="#97420a" stroke="#97420a" stroke-width=".8"/>
<polygon points="1183.0,308.0 1186.2,298.9 1197.6,305.3" fill="#97420a" stroke="#97420a" stroke-width=".8"/>
<path d="M1183.0 308.0L1171.6 301.6L1186.2 298.9L1197.6 305.3Z" class="gl"/>
<polygon points="1139.4,316.1 1127.9,309.7 1171.6,301.6" fill="#97420a" stroke="#97420a" stroke-width=".8"/>
<polygon points="1139.4,316.1 1171.6,301.6 1183.0,308.0" fill="#97420a" stroke="#97420a" stroke-width=".8"/>
<path d="M1139.4 316.1L1127.9 309.7L1171.6 301.6L1183.0 308.0Z" class="gl"/>
<polygon points="1095.7,324.2 1084.2,317.8 1127.9,309.7" fill="#97420a" stroke="#97420a" stroke-width=".8"/>
<polygon points="1095.7,324.2 1127.9,309.7 1139.4,316.1" fill="#97420a" stroke="#97420a" stroke-width=".8"/>
<path d="M1095.7 324.2L1084.2 317.8L1127.9 309.7L1139.4 316.1Z" class="gl"/>
<polygon points="1390.6,218.2 1381.1,212.9 1386.9,430.9" fill="url(#s13)" stroke="url(#s13)" stroke-width=".8"/>
<polygon points="1390.6,218.2 1386.9,430.9 1396.4,436.3" fill="url(#s14)" stroke="url(#s14)" stroke-width=".8"/>
<path d="M1390.6 218.2L1381.1 212.9L1386.9 430.9L1396.4 436.3Z" class="gs"/>
<polygon points="1381.8,219.8 1372.3,214.5 1381.1,212.9" fill="#cf0a0a" stroke="#cf0a0a" stroke-width=".8"/>
<polygon points="1381.8,219.8 1381.1,212.9 1390.6,218.2" fill="#cf0a0a" stroke="#cf0a0a" stroke-width=".8"/>
<path d="M1381.8 219.8L1372.3 214.5L1381.1 212.9L1390.6 218.2Z" class="gl"/>
<polygon points="1376.0,250.1 1366.5,244.8 1372.3,214.5" fill="url(#s15)" stroke="url(#s15)" stroke-width=".8"/>
<polygon points="1376.0,250.1 1372.3,214.5 1381.8,219.8" fill="url(#s16)" stroke="url(#s16)" stroke-width=".8"/>
<path d="M1376.0 250.1L1366.5 244.8L1372.3 214.5L1381.8 219.8Z" class="gs"/>
<polygon points="1367.3,251.8 1357.8,246.4 1366.5,244.8" fill="#b3260a" stroke="#b3260a" stroke-width=".8"/>
<polygon points="1367.3,251.8 1366.5,244.8 1376.0,250.1" fill="#b3260a" stroke="#b3260a" stroke-width=".8"/>
<path d="M1367.3 251.8L1357.8 246.4L1366.5 244.8L1376.0 250.1Z" class="gl"/>
<polygon points="1355.6,253.9 1346.1,248.6 1357.8,246.4" fill="#b3260a" stroke="#b3260a" stroke-width=".8"/>
<polygon points="1355.6,253.9 1357.8,246.4 1367.3,251.8" fill="#b3260a" stroke="#b3260a" stroke-width=".8"/>
<path d="M1355.6 253.9L1346.1 248.6L1357.8 246.4L1367.3 251.8Z" class="gl"/>
<polygon points="1338.2,286.4 1328.6,281.0 1346.1,248.6" fill="url(#s17)" stroke="url(#s17)" stroke-width=".8"/>
<polygon points="1338.2,286.4 1346.1,248.6 1355.6,253.9" fill="url(#s18)" stroke="url(#s18)" stroke-width=".8"/>
<path d="M1338.2 286.4L1328.6 281.0L1346.1 248.6L1355.6 253.9Z" class="gs"/>
<polygon points="1323.6,289.1 1314.1,283.7 1328.6,281.0" fill="#97420a" stroke="#97420a" stroke-width=".8"/>
<polygon points="1323.6,289.1 1328.6,281.0 1338.2,286.4" fill="#97420a" stroke="#97420a" stroke-width=".8"/>
<path d="M1323.6 289.1L1314.1 283.7L1328.6 281.0L1338.2 286.4Z" class="gl"/>
<polygon points="1309.0,291.8 1299.5,286.4 1314.1,283.7" fill="#97420a" stroke="#97420a" stroke-width=".8"/>
<polygon points="1309.0,291.8 1314.1,283.7 1323.6,289.1" fill="#97420a" stroke="#97420a" stroke-width=".8"/>
<path d="M1309.0 291.8L1299.5 286.4L1314.1 283.7L1323.6 289.1Z" class="gl"/>
<polygon points="1279.9,297.2 1270.4,291.8 1299.5,286.4" fill="#97420a" stroke="#97420a" stroke-width=".8"/>
<polygon points="1279.9,297.2 1299.5,286.4 1309.0,291.8" fill="#97420a" stroke="#97420a" stroke-width=".8"/>
<path d="M1279.9 297.2L1270.4 291.8L1299.5 286.4L1309.0 291.8Z" class="gl"/>
<polygon points="1250.8,302.6 1241.3,297.2 1270.4,291.8" fill="#97420a" stroke="#97420a" stroke-width=".8"/>
<polygon points="1250.8,302.6 1270.4,291.8 1279.9,297.2" fill="#97420a" stroke="#97420a" stroke-width=".8"/>
<path d="M1250.8 302.6L1241.3 297.2L1270.4 291.8L1279.9 297.2Z" class="gl"/>
<polygon points="1221.7,308.0 1212.2,302.6 1241.3,297.2" fill="#97420a" stroke="#97420a" stroke-width=".8"/>
<polygon points="1221.7,308.0 1241.3,297.2 1250.8,302.6" fill="#97420a" stroke="#97420a" stroke-width=".8"/>
<path d="M1221.7 308.0L1212.2 302.6L1241.3 297.2L1250.8 302.6Z" class="gl"/>
<polygon points="1207.1,310.7 1197.6,305.3 1212.2,302.6" fill="#97420a" stroke="#97420a" stroke-width=".8"/>
<polygon points="1207.1,310.7 1212.2,302.6 1221.7,308.0" fill="#97420a" stroke="#97420a" stroke-width=".8"/>
<path d="M1207.1 310.7L1197.6 305.3L1212.2 302.6L1221.7 308.0Z" class="gl"/>
<polygon points="1192.6,313.4 1183.0,308.0 1197.6,305.3" fill="#97420a" stroke="#97420a" stroke-width=".8"/>
<polygon points="1192.6,313.4 1197.6,305.3 1207.1,310.7" fill="#97420a" stroke="#97420a" stroke-width=".8"/>
<path d="M1192.6 313.4L1183.0 308.0L1197.6 305.3L1207.1 310.7Z" class="gl"/>
<polygon points="1148.9,321.5 1139.4,316.1 1183.0,308.0" fill="#97420a" stroke="#97420a" stroke-width=".8"/>
<polygon points="1148.9,321.5 1183.0,308.0 1192.6,313.4" fill="#97420a" stroke="#97420a" stroke-width=".8"/>
<path d="M1148.9 321.5L1139.4 316.1L1183.0 308.0L1192.6 313.4Z" class="gl"/>
<polygon points="1105.2,329.6 1095.7,324.2 1139.4,316.1" fill="#97420a" stroke="#97420a" stroke-width=".8"/>
<polygon points="1105.2,329.6 1139.4,316.1 1148.9,321.5" fill="#97420a" stroke="#97420a" stroke-width=".8"/>
<path d="M1105.2 329.6L1095.7 324.2L1139.4 316.1L1148.9 321.5Z" class="gl"/>
<polygon points="1400.1,223.6 1390.6,218.2 1396.4,436.3" fill="url(#s19)" stroke="url(#s19)" stroke-width=".8"/>
<polygon points="1400.1,223.6 1396.4,436.3 1405.9,441.6" fill="url(#s20)" stroke="url(#s20)" stroke-width=".8"/>
<path d="M1400.1 223.6L1390.6 218.2L1396.4 436.3L1405.9 441.6Z" class="gs"/>
<polygon points="1391.4,225.2 1381.8,219.8 1390.6,218.2" fill="#cf0a0a" stroke="#cf0a0a" stroke-width=".8"/>
<polygon points="1391.4,225.2 1390.6,218.2 1400.1,223.6" fill="#cf0a0a" stroke="#cf0a0a" stroke-width=".8"/>
<path d="M1391.4 225.2L1381.8 219.8L1390.6 218.2L1400.1 223.6Z" class="gl"/>
<polygon points="1385.6,255.5 1376.0,250.1 1381.8,219.8" fill="url(#s21)" stroke="url(#s21)" stroke-width=".8"/>
<polygon points="1385.6,255.5 1381.8,219.8 1391.4,225.2" fill="url(#s22)" stroke="url(#s22)" stroke-width=".8"/>
<path d="M1385.6 255.5L1376.0 250.1L1381.8 219.8L1391.4 225.2Z" class="gs"/>
<polygon points="1376.8,257.1 1367.3,251.8 1376.0,250.1" fill="#b3260a" stroke="#b3260a" stroke-width=".8"/>
<polygon points="1376.8,257.1 1376.0,250.1 1385.6,255.5" fill="#b3260a" stroke="#b3260a" stroke-width=".8"/>
<path d="M1376.8 257.1L1367.3 251.8L1376.0 250.1L1385.6 255.5Z" class="gl"/>
<polygon points="1365.2,259.3 1355.6,253.9 1367.3,251.8" fill="#b3260a" stroke="#b3260a" stroke-width=".8"/>
<polygon points="1365.2,259.3 1367.3,251.8 1376.8,257.1" fill="#b3260a" stroke="#b3260a" stroke-width=".8"/>
<path d="M1365.2 259.3L1355.6 253.9L1367.3 251.8L1376.8 257.1Z" class="gl"/>
<polygon points="1347.7,291.7 1338.2,286.4 1355.6,253.9" fill="url(#s23)" stroke="url(#s23)" stroke-width=".8"/>
<polygon points="1347.7,291.7 1355.6,253.9 1365.2,259.3" fill="url(#s24)" stroke="url(#s24)" stroke-width=".8"/>
<path d="M1347.7 291.7L1338.2 286.4L1355.6 253.9L1365.2 259.3Z" class="gs"/>
<polygon points="1333.1,294.4 1323.6,289.1 1338.2,286.4" fill="#97420a" stroke="#97420a" stroke-width=".8"/>
<polygon points="1333.1,294.4 1338.2,286.4 1347.7,291.7" fill="#97420a" stroke="#97420a" stroke-width=".8"/>
<path d="M1333.1 294.4L1323.6 289.1L1338.2 286.4L1347.7 291.7Z" class="gl"/>
<polygon points="1318.6,297.1 1309.0,291.8 1323.6,289.1" fill="#97420a" stroke="#97420a" stroke-width=".8"/>
<polygon points="1318.6,297.1 1323.6,289.1 1333.1,294.4" fill="#97420a" stroke="#97420a" stroke-width=".8"/>
<path d="M1318.6 297.1L1309.0 291.8L1323.6 289.1L1333.1 294.4Z" class="gl"/>
<polygon points="1289.5,302.5 1279.9,297.2 1309.0,291.8" fill="#97420a" stroke="#97420a" stroke-width=".8"/>
<polygon points="1289.5,302.5 1309.0,291.8 1318.6,297.1" fill="#97420a" stroke="#97420a" stroke-width=".8"/>
<path d="M1289.5 302.5L1279.9 297.2L1309.0 291.8L1318.6 297.1Z" class="gl"/>
<polygon points="1260.3,307.9 1250.8,302.6 1279.9,297.2" fill="#97420a" stroke="#97420a" stroke-width=".8"/>
<polygon points="1260.3,307.9 1279.9,297.2 1289.5,302.5" fill="#97420a" stroke="#97420a" stroke-width=".8"/>
<path d="M1260.3 307.9L1250.8 302.6L1279.9 297.2L1289.5 302.5Z" class="gl"/>
<polygon points="1231.2,313.3 1221.7,308.0 1250.8,302.6" fill="#97420a" stroke="#97420a" stroke-width=".8"/>
<polygon points="1231.2,313.3 1250.8,302.6 1260.3,307.9" fill="#97420a" stroke="#97420a" stroke-width=".8"/>
<path d="M1231.2 313.3L1221.7 308.0L1250.8 302.6L1260.3 307.9Z" class="gl"/>
<polygon points="1216.7,316.0 1207.1,310.7 1221.7,308.0" fill="#97420a" stroke="#97420a" stroke-width=".8"/>
<polygon points="1216.7,316.0 1221.7,308.0 1231.2,313.3" fill="#97420a" stroke="#97420a" stroke-width=".8"/>
<path d="M1216.7 316.0L1207.1 310.7L1221.7 308.0L1231.2 313.3Z" class="gl"/>
<polygon points="1202.1,318.7 1192.6,313.4 1207.1,310.7" fill="#97420a" stroke="#97420a" stroke-width=".8"/>
<polygon points="1202.1,318.7 1207.1,310.7 1216.7,316.0" fill="#97420a" stroke="#97420a" stroke-width=".8"/>
<path d="M1202.1 318.7L1192.6 313.4L1207.1 310.7L1216.7 316.0Z" class="gl"/>
<polygon points="1158.4,326.8 1148.9,321.5 1192.6,313.4" fill="#97420a" stroke="#97420a" stroke-width=".8"/>
<polygon points="1158.4,326.8 1192.6,313.4 1202.1,318.7" fill="#97420a" stroke="#97420a" stroke-width=".8"/>
<path d="M1158.4 326.8L1148.9 321.5L1192.6 313.4L1202.1 318.7Z" class="gl"/>
<polygon points="1114.7,334.9 1105.2,329.6 1148.9,321.5" fill="#97420a" stroke="#97420a" stroke-width=".8"/>
<polygon points="1114.7,334.9 1148.9,321.5 1158.4,326.8" fill="#97420a" stroke="#97420a" stroke-width=".8"/>
<path d="M1114.7 334.9L1105.2 329.6L1148.9 321.5L1158.4 326.8Z" class="gl"/>
<polygon points="1409.7,228.9 1400.1,223.6 1405.9,441.6" fill="url(#s25)" stroke="url(#s25)" stroke-width=".8"/>
<polygon points="1409.7,228.9 1405.9,441.6 1415.5,447.0" fill="url(#s26)" stroke="url(#s26)" stroke-width=".8"/>
<path d="M1409.7 228.9L1400.1 223.6L1405.9 441.6L1415.5 447.0Z" class="gs"/>
<polygon points="1400.9,230.6 1391.4,225.2 1400.1,223.6" fill="#cf0a0a" stroke="#cf0a0a" stroke-width=".8"/>
<polygon points="1400.9,230.6 1400.1,223.6 1409.7,228.9" fill="#cf0a0a" stroke="#cf0a0a" stroke-width=".8"/>
<path d="M1400.9 230.6L1391.4 225.2L1400.1 223.6L1409.7 228.9Z" class="gl"/>
<polygon points="1395.1,260.9 1385.6,255.5 1391.4,225.2" fill="url(#s27)" stroke="url(#s27)" stroke-width=".8"/>
<polygon points="1395.1,260.9 1391.4,225.2 1400.9,230.6" fill="url(#s28)" stroke="url(#s28)" stroke-width=".8"/>
<path d="M1395.1 260.9L1385.6 255.5L1391.4 225.2L1400.9 230.6Z" class="gs"/>
<polygon points="1386.4,262.5 1376.8,257.1 1385.6,255.5" fill="#b3260a" stroke="#b3260a" stroke-width=".8"/>
<polygon points="1386.4,262.5 1385.6,255.5 1395.1,260.9" fill="#b3260a" stroke="#b3260a" stroke-width=".8"/>
<path d="M1386.4 262.5L1376.8 257.1L1385.6 255.5L1395.1 260.9Z" class="gl"/>
<polygon points="1374.7,264.6 1365.2,259.3 1376.8,257.1" fill="#b3260a" stroke="#b3260a" stroke-width=".8"/>
<polygon points="1374.7,264.6 1376.8,257.1 1386.4,262.5" fill="#b3260a" stroke="#b3260a" stroke-width=".8"/>
<path d="M1374.7 264.6L1365.2 259.3L1376.8 257.1L1386.4 262.5Z" class="gl"/>
<polygon points="1357.2,297.1 1347.7,291.7 1365.2,259.3" fill="url(#s29)" stroke="url(#s29)" stroke-width=".8"/>
<polygon points="1357.2,297.1 1365.2,259.3 1374.7,264.6" fill="url(#s30)" stroke="url(#s30)" stroke-width=".8"/>
<path d="M1357.2 297.1L1347.7 291.7L1365.2 259.3L1374.7 264.6Z" class="gs"/>
<polygon points="1342.7,299.8 1333.1,294.4 1347.7,291.7" fill="#97420a" stroke="#97420a" stroke-width=".8"/>
<polygon points="1342.7,299.8 1347.7,291.7 1357.2,297.1" fill="#97420a" stroke="#97420a" stroke-width=".8"/>
<path d="M1342.7 299.8L1333.1 294.4L1347.7 291.7L1357.2 297.1Z" class="gl"/>
<polygon points="1328.1,302.5 1318.6,297.1 1333.1,294.4" fill="#97420a" stroke="#97420a" stroke-width=".8"/>
<polygon points="1328.1,302.5 1333.1,294.4 1342.7,299.8" fill="#97420a" stroke="#97420a" stroke-width=".8"/>
<path d="M1328.1 302.5L1318.6 297.1L1333.1 294.4L1342.7 299.8Z" class="gl"/>
<polygon points="1299.0,307.9 1289.5,302.5 1318.6,297.1" fill="#97420a" stroke="#97420a" stroke-width=".8"/>
<polygon points="1299.0,307.9 1318.6,297.1 1328.1,302.5" fill="#97420a" stroke="#97420a" stroke-width=".8"/>
<path d="M1299.0 307.9L1289.5 302.5L1318.6 297.1L1328.1 302.5Z" class="gl"/>
<polygon points="1269.9,313.3 1260.3,307.9 1289.5,302.5" fill="#97420a" stroke="#97420a" stroke-width=".8"/>
<polygon points="1269.9,313.3 1289.5,302.5 1299.0,307.9" fill="#97420a" stroke="#97420a" stroke-width=".8"/>
<path d="M1269.9 313.3L1260.3 307.9L1289.5 302.5L1299.0 307.9Z" class="gl"/>
<polygon points="1240.8,318.7 1231.2,313.3 1260.3,307.9" fill="#97420a" stroke="#97420a" stroke-width=".8"/>
<polygon points="1240.8,318.7 1260.3,307.9 1269.9,313.3" fill="#97420a" stroke="#97420a" stroke-width=".8"/>
<path d="M1240.8 318.7L1231.2 313.3L1260.3 307.9L1269.9 313.3Z" class="gl"/>
<polygon points="1226.2,321.4 1216.7,316.0 1231.2,313.3" fill="#97420a" stroke="#97420a" stroke-width=".8"/>
<polygon points="1226.2,321.4 1231.2,313.3 1240.8,318.7" fill="#97420a" stroke="#97420a" stroke-width=".8"/>
<path d="M1226.2 321.4L1216.7 316.0L1231.2 313.3L1240.8 318.7Z" class="gl"/>
<polygon points="1211.6,324.1 1202.1,318.7 1216.7,316.0" fill="#97420a" stroke="#97420a" stroke-width=".8"/>
<polygon points="1211.6,324.1 1216.7,316.0 1226.2,321.4" fill="#97420a" stroke="#97420a" stroke-width=".8"/>
<path d="M1211.6 324.1L1202.1 318.7L1216.7 316.0L1226.2 321.4Z" class="gl"/>
<polygon points="1168.0,332.2 1158.4,326.8 1202.1,318.7" fill="#97420a" stroke="#97420a" stroke-width=".8"/>
<polygon points="1168.0,332.2 1202.1,318.7 1211.6,324.1" fill="#97420a" stroke="#97420a" stroke-width=".8"/>
<path d="M1168.0 332.2L1158.4 326.8L1202.1 318.7L1211.6 324.1Z" class="gl"/>
<polygon points="1124.3,340.3 1114.7,334.9 1158.4,326.8" fill="#97420a" stroke="#97420a" stroke-width=".8"/>
<polygon points="1124.3,340.3 1158.4,326.8 1168.0,332.2" fill="#97420a" stroke="#97420a" stroke-width=".8"/>
<path d="M1124.3 340.3L1114.7 334.9L1158.4 326.8L1168.0 332.2Z" class="gl"/>
<polygon points="1419.2,234.3 1409.7,228.9 1415.5,447.0" fill="url(#s31)" stroke="url(#s31)" stroke-width=".8"/>
<polygon points="1419.2,234.3 1415.5,447.0 1425.0,452.3" fill="url(#s32)" stroke="url(#s32)" stroke-width=".8"/>
<path d="M1419.2 234.3L1409.7 228.9L1415.5 447.0L1425.0 452.3Z" class="gs"/>
<polygon points="1410.5,235.9 1400.9,230.6 1409.7,228.9" fill="#cf0a0a" stroke="#cf0a0a" stroke-width=".8"/>
<polygon points="1410.5,235.9 1409.7,228.9 1419.2,234.3" fill="#cf0a0a" stroke="#cf0a0a" stroke-width=".8"/>
<path d="M1410.5 235.9L1400.9 230.6L1409.7 228.9L1419.2 234.3Z" class="gl"/>
<polygon points="1404.6,266.2 1395.1,260.9 1400.9,230.6" fill="url(#s33)" stroke="url(#s33)" stroke-width=".8"/>
<polygon points="1404.6,266.2 1400.9,230.6 1410.5,235.9" fill="url(#s34)" stroke="url(#s34)" stroke-width=".8"/>
<path d="M1404.6 266.2L1395.1 260.9L1400.9 230.6L1410.5 235.9Z" class="gs"/>
<polygon points="1395.9,267.8 1386.4,262.5 1395.1,260.9" fill="#b3260a" stroke="#b3260a" stroke-width=".8"/>
<polygon points="1395.9,267.8 1395.1,260.9 1404.6,266.2" fill="#b3260a" stroke="#b3260a" stroke-width=".8"/>
<path d="M1395.9 267.8L1386.4 262.5L1395.1 260.9L1404.6 266.2Z" class="gl"/>
<polygon points="1384.2,270.0 1374.7,264.6 1386.4,262.5" fill="#b3260a" stroke="#b3260a" stroke-width=".8"/>
<polygon points="1384.2,270.0 1386.4,262.5 1395.9,267.8" fill="#b3260a" stroke="#b3260a" stroke-width=".8"/>
<path d="M1384.2 270.0L1374.7 264.6L1386.4 262.5L1395.9 267.8Z" class="gl"/>
<polygon points="1366.8,302.4 1357.2,297.1 1374.7,264.6" fill="url(#s35)" stroke="url(#s35)" stroke-width=".8"/>
<polygon points="1366.8,302.4 1374.7,264.6 1384.2,270.0" fill="url(#s36)" stroke="url(#s36)" stroke-width=".8"/>
<path d="M1366.8 302.4L1357.2 297.1L1374.7 264.6L1384.2 270.0Z" class="gs"/>
<polygon points="1352.2,305.1 1342.7,299.8 1357.2,297.1" fill="#97420a" stroke="#97420a" stroke-width=".8"/>
<polygon points="1352.2,305.1 1357.2,297.1 1366.8,302.4" fill="#97420a" stroke="#97420a" stroke-width=".8"/>
<path d="M1352.2 305.1L1342.7 299.8L1357.2 297.1L1366.8 302.4Z" class="gl"/>
<polygon points="1337.7,307.8 1328.1,302.5 1342.7,299.8" fill="#97420a" stroke="#97420a" stroke-width=".8"/>
<polygon points="1337.7,307.8 1342.7,299.8 1352.2,305.1" fill="#97420a" stroke="#97420a" stroke-width=".8"/>
<path d="M1337.7 307.8L1328.1 302.5L1342.7 299.8L1352.2 305.1Z" class="gl"/>
<polygon points="1308.5,313.2 1299.0,307.9 1328.1,302.5" fill="#97420a" stroke="#97420a" stroke-width=".8"/>
<polygon points="1308.5,313.2 1328.1,302.5 1337.7,307.8" fill="#97420a" stroke="#97420a" stroke-width=".8"/>
<path d="M1308.5 313.2L1299.0 307.9L1328.1 302.5L1337.7 307.8Z" class="gl"/>
<polygon points="1279.4,318.6 1269.9,313.3 1299.0,307.9" fill="#97420a" stroke="#97420a" stroke-width=".8"/>
<polygon points="1279.4,318.6 1299.0,307.9 1308.5,313.2" fill="#97420a" stroke="#97420a" stroke-width=".8"/>
<path d="M1279.4 318.6L1269.9 313.3L1299.0 307.9L1308.5 313.2Z" class="gl"/>
<polygon points="1250.3,324.0 1240.8,318.7 1269.9,313.3" fill="#97420a" stroke="#97420a" stroke-width=".8"/>
<polygon points="1250.3,324.0 1269.9,313.3 1279.4,318.6" fill="#97420a" stroke="#97420a" stroke-width=".8"/>
<path d="M1250.3 324.0L1240.8 318.7L1269.9 313.3L1279.4 318.6Z" class="gl"/>
<polygon points="1235.7,326.7 1226.2,321.4 1240.8,318.7" fill="#97420a" stroke="#97420a" stroke-width=".8"/>
<polygon points="1235.7,326.7 1240.8,318.7 1250.3,324.0" fill="#97420a" stroke="#97420a" stroke-width=".8"/>
<path d="M1235.7 326.7L1226.2 321.4L1240.8 318.7L1250.3 324.0Z" class="gl"/>
<polygon points="1221.2,329.4 1211.6,324.1 1226.2,321.4" fill="#97420a" stroke="#97420a" stroke-width=".8"/>
<polygon points="1221.2,329.4 1226.2,321.4 1235.7,326.7" fill="#97420a" stroke="#97420a" stroke-width=".8"/>
<path d="M1221.2 329.4L1211.6 324.1L1226.2 321.4L1235.7 326.7Z" class="gl"/>
<polygon points="1177.5,337.5 1168.0,332.2 1211.6,324.1" fill="#97420a" stroke="#97420a" stroke-width=".8"/>
<polygon points="1177.5,337.5 1211.6,324.1 1221.2,329.4" fill="#97420a" stroke="#97420a" stroke-width=".8"/>
<path d="M1177.5 337.5L1168.0 332.2L1211.6 324.1L1221.2 329.4Z" class="gl"/>
<polygon points="1133.8,345.6 1124.3,340.3 1168.0,332.2" fill="#97420a" stroke="#97420a" stroke-width=".8"/>
<polygon points="1133.8,345.6 1168.0,332.2 1177.5,337.5" fill="#97420a" stroke="#97420a" stroke-width=".8"/>
<path d="M1133.8 345.6L1124.3 340.3L1168.0 332.2L1177.5 337.5Z" class="gl"/>
<polygon points="1428.7,239.7 1419.2,234.3 1425.0,452.3" fill="url(#s37)" stroke="url(#s37)" stroke-width=".8"/>
<polygon points="1428.7,239.7 1425.0,452.3 1434.5,457.7" fill="url(#s38)" stroke="url(#s38)" stroke-width=".8"/>
<path d="M1428.7 239.7L1419.2 234.3L1425.0 452.3L1434.5 457.7Z" class="gs"/>
<polygon points="1420.0,241.3 1410.5,235.9 1419.2,234.3" fill="#cf0a0a" stroke="#cf0a0a" stroke-width=".8"/>
<polygon points="1420.0,241.3 1419.2,234.3 1428.7,239.7" fill="#cf0a0a" stroke="#cf0a0a" stroke-width=".8"/>
<path d="M1420.0 241.3L1410.5 235.9L1419.2 234.3L1428.7 239.7Z" class="gl"/>
<polygon points="1414.2,271.6 1404.6,266.2 1410.5,235.9" fill="url(#s39)" stroke="url(#s39)" stroke-width=".8"/>
<polygon points="1414.2,271.6 1410.5,235.9 1420.0,241.3" fill="url(#s40)" stroke="url(#s40)" stroke-width=".8"/>
<path d="M1414.2 271.6L1404.6 266.2L1410.5 235.9L1420.0 241.3Z" class="gs"/>
<polygon points="1405.4,273.2 1395.9,267.8 1404.6,266.2" fill="#b3260a" stroke="#b3260a" stroke-width=".8"/>
<polygon points="1405.4,273.2 1404.6,266.2 1414.2,271.6" fill="#b3260a" stroke="#b3260a" stroke-width=".8"/>
<path d="M1405.4 273.2L1395.9 267.8L1404.6 266.2L1414.2 271.6Z" class="gl"/>
<polygon points="1393.8,290.0 1384.2,270.0 1395.9,267.8" fill="url(#s41)" stroke="url(#s41)" stroke-width=".8"/>
<polygon points="1393.8,290.0 1395.9,267.8 1405.4,273.2" fill="url(#s42)" stroke="url(#s42)" stroke-width=".8"/>
<path d="M1393.8 290.0L1384.2 270.0L1395.9 267.8L1405.4 273.2Z" class="gl"/>
<polygon points="1376.3,307.8 1366.8,302.4 1384.2,270.0" fill="url(#s43)" stroke="url(#s43)" stroke-width=".8"/>
<polygon points="1376.3,307.8 1384.2,270.0 1393.8,290.0" fill="url(#s44)" stroke="url(#s44)" stroke-width=".8"/>
<path d="M1376.3 307.8L1366.8 302.4L1384.2 270.0L1393.8 290.0Z" class="gs"/>
<polygon points="1361.7,325.1 1352.2,305.1 1366.8,302.4" fill="url(#s45)" stroke="url(#s45)" stroke-width=".8"/>
<polygon points="1361.7,325.1 1366.8,302.4 1376.3,307.8" fill="url(#s46)" stroke="url(#s46)" stroke-width=".8"/>
<path d="M1361.7 325.1L1352.2 305.1L1366.8 302.4L1376.3 307.8Z" class="gl"/>
<polygon points="1347.2,327.8 1337.7,307.8 1352.2,305.1" fill="url(#s47)" stroke="url(#s47)" stroke-width=".8"/>
<polygon points="1347.2,327.8 1352.2,305.1 1361.7,325.1" fill="url(#s48)" stroke="url(#s48)" stroke-width=".8"/>
<path d="M1347.2 327.8L1337.7 307.8L1352.2 305.1L1361.7 325.1Z" class="gl"/>
<polygon points="1318.1,333.2 1308.5,313.2 1337.7,307.8" fill="url(#s49)" stroke="url(#s49)" stroke-width=".8"/>
<polygon points="1318.1,333.2 1337.7,307.8 1347.2,327.8" fill="url(#s50)" stroke="url(#s50)" stroke-width=".8"/>
<path d="M1318.1 333.2L1308.5 313.2L1337.7 307.8L1347.2 327.8Z" class="gl"/>
<polygon points="1288.9,338.6 1279.4,318.6 1308.5,313.2" fill="url(#s51)" stroke="url(#s51)" stroke-width=".8"/>
<polygon points="1288.9,338.6 1308.5,313.2 1318.1,333.2" fill="url(#s52)" stroke="url(#s52)" stroke-width=".8"/>
<path d="M1288.9 338.6L1279.4 318.6L1308.5 313.2L1318.1 333.2Z" class="gl"/>
<polygon points="1259.8,344.0 1250.3,324.0 1279.4,318.6" fill="url(#s53)" stroke="url(#s53)" stroke-width=".8"/>
<polygon points="1259.8,344.0 1279.4,318.6 1288.9,338.6" fill="url(#s54)" stroke="url(#s54)" stroke-width=".8"/>
<path d="M1259.8 344.0L1250.3 324.0L1279.4 318.6L1288.9 338.6Z" class="gl"/>
<polygon points="1245.3,346.7 1235.7,326.7 1250.3,324.0" fill="url(#s55)" stroke="url(#s55)" stroke-width=".8"/>
<polygon points="1245.3,346.7 1250.3,324.0 1259.8,344.0" fill="url(#s56)" stroke="url(#s56)" stroke-width=".8"/>
<path d="M1245.3 346.7L1235.7 326.7L1250.3 324.0L1259.8 344.0Z" class="gl"/>
<polygon points="1230.7,349.4 1221.2,329.4 1235.7,326.7" fill="url(#s57)" stroke="url(#s57)" stroke-width=".8"/>
<polygon points="1230.7,349.4 1235.7,326.7 1245.3,346.7" fill="url(#s58)" stroke="url(#s58)" stroke-width=".8"/>
<path d="M1230.7 349.4L1221.2 329.4L1235.7 326.7L1245.3 346.7Z" class="gl"/>
<polygon points="1187.0,357.5 1177.5,337.5 1221.2,329.4" fill="url(#s59)" stroke="url(#s59)" stroke-width=".8"/>
<polygon points="1187.0,357.5 1221.2,329.4 1230.7,349.4" fill="url(#s60)" stroke="url(#s60)" stroke-width=".8"/>
<path d="M1187.0 357.5L1177.5 337.5L1221.2 329.4L1230.7 349.4Z" class="gl"/>
<polygon points="1143.3,365.6 1133.8,345.6 1177.5,337.5" fill="url(#s61)" stroke="url(#s61)" stroke-width=".8"/>
<polygon points="1143.3,365.6 1177.5,337.5 1187.0,357.5" fill="url(#s62)" stroke="url(#s62)" stroke-width=".8"/>
<path d="M1143.3 365.6L1133.8 345.6L1177.5 337.5L1187.0 357.5Z" class="gl"/>
<polygon points="1438.3,245.0 1428.7,239.7 1434.5,457.7" fill="url(#s63)" stroke="url(#s63)" stroke-width=".8"/>
<polygon points="1438.3,245.0 1434.5,457.7 1444.1,463.0" fill="url(#s64)" stroke="url(#s64)" stroke-width=".8"/>
<path d="M1438.3 245.0L1428.7 239.7L1434.5 457.7L1444.1 463.0Z" class="gs"/>
<polygon points="1429.5,246.6 1420.0,241.3 1428.7,239.7" fill="#cf0a0a" stroke="#cf0a0a" stroke-width=".8"/>
<polygon points="1429.5,246.6 1428.7,239.7 1438.3,245.0" fill="#cf0a0a" stroke="#cf0a0a" stroke-width=".8"/>
<path d="M1429.5 246.6L1420.0 241.3L1428.7 239.7L1438.3 245.0Z" class="gl"/>
<polygon points="1423.7,276.9 1414.2,271.6 1420.0,241.3" fill="url(#s65)" stroke="url(#s65)" stroke-width=".8"/>
<polygon points="1423.7,276.9 1420.0,241.3 1429.5,246.6" fill="url(#s66)" stroke="url(#s66)" stroke-width=".8"/>
<path d="M1423.7 276.9L1414.2 271.6L1420.0 241.3L1429.5 246.6Z" class="gs"/>
<polygon points="1415.0,278.5 1405.4,273.2 1414.2,271.6" fill="#b3260a" stroke="#b3260a" stroke-width=".8"/>
<polygon points="1415.0,278.5 1414.2,271.6 1423.7,276.9" fill="#b3260a" stroke="#b3260a" stroke-width=".8"/>
<path d="M1415.0 278.5L1405.4 273.2L1414.2 271.6L1423.7 276.9Z" class="gl"/>
<polygon points="1403.3,295.3 1393.8,290.0 1405.4,273.2" fill="url(#s67)" stroke="url(#s67)" stroke-width=".8"/>
<polygon points="1403.3,295.3 1405.4,273.2 1415.0,278.5" fill="url(#s68)" stroke="url(#s68)" stroke-width=".8"/>
<path d="M1403.3 295.3L1393.8 290.0L1405.4 273.2L1415.0 278.5Z" class="gs"/>
<polygon points="1385.8,313.2 1376.3,307.8 1393.8,290.0" fill="url(#s69)" stroke="url(#s69)" stroke-width=".8"/>
<polygon points="1385.8,313.2 1393.8,290.0 1403.3,295.3" fill="url(#s70)" stroke="url(#s70)" stroke-width=".8"/>
<path d="M1385.8 313.2L1376.3 307.8L1393.8 290.0L1403.3 295.3Z" class="gl"/>
<polygon points="1371.3,330.5 1361.7,325.1 1376.3,307.8" fill="url(#s71)" stroke="url(#s71)" stroke-width=".8"/>
<polygon points="1371.3,330.5 1376.3,307.8 1385.8,313.2" fill="url(#s72)" stroke="url(#s72)" stroke-width=".8"/>
<path d="M1371.3 330.5L1361.7 325.1L1376.3 307.8L1385.8 313.2Z" class="gl"/>
<polygon points="1356.7,333.2 1347.2,327.8 1361.7,325.1" fill="#89500a" stroke="#89500a" stroke-width=".8"/>
<polygon points="1356.7,333.2 1361.7,325.1 1371.3,330.5" fill="#89500a" stroke="#89500a" stroke-width=".8"/>
<path d="M1356.7 333.2L1347.2 327.8L1361.7 325.1L1371.3 330.5Z" class="gl"/>
<polygon points="1327.6,338.6 1318.1,333.2 1347.2,327.8" fill="#89500a" stroke="#89500a" stroke-width=".8"/>
<polygon points="1327.6,338.6 1347.2,327.8 1356.7,333.2" fill="#89500a" stroke="#89500a" stroke-width=".8"/>
<path d="M1327.6 338.6L1318.1 333.2L1347.2 327.8L1356.7 333.2Z" class="gl"/>
<polygon points="1298.5,344.0 1288.9,338.6 1318.1,333.2" fill="#89500a" stroke="#89500a" stroke-width=".8"/>
<polygon points="1298.5,344.0 1318.1,333.2 1327.6,338.6" fill="#89500a" stroke="#89500a" stroke-width=".8"/>
<path d="M1298.5 344.0L1288.9 338.6L1318.1 333.2L1327.6 338.6Z" class="gl"/>
<polygon points="1269.4,349.4 1259.8,344.0 1288.9,338.6" fill="#89500a" stroke="#89500a" stroke-width=".8"/>
<polygon points="1269.4,349.4 1288.9,338.6 1298.5,344.0" fill="#89500a" stroke="#89500a" stroke-width=".8"/>
<path d="M1269.4 349.4L1259.8 344.0L1288.9 338.6L1298.5 344.0Z" class="gl"/>
<polygon points="1254.8,352.1 1245.3,346.7 1259.8,344.0" fill="#89500a" stroke="#89500a" stroke-width=".8"/>
<polygon points="1254.8,352.1 1259.8,344.0 1269.4,349.4" fill="#89500a" stroke="#89500a" stroke-width=".8"/>
<path d="M1254.8 352.1L1245.3 346.7L1259.8 344.0L1269.4 349.4Z" class="gl"/>
<polygon points="1240.2,354.8 1230.7,349.4 1245.3,346.7" fill="#89500a" stroke="#89500a" stroke-width=".8"/>
<polygon points="1240.2,354.8 1245.3,346.7 1254.8,352.1" fill="#89500a" stroke="#89500a" stroke-width=".8"/>
<path d="M1240.2 354.8L1230.7 349.4L1245.3 346.7L1254.8 352.1Z" class="gl"/>
<polygon points="1196.6,362.9 1187.0,357.5 1230.7,349.4" fill="#89500a" stroke="#89500a" stroke-width=".8"/>
<polygon points="1196.6,362.9 1230.7,349.4 1240.2,354.8" fill="#89500a" stroke="#89500a" stroke-width=".8"/>
<path d="M1196.6 362.9L1187.0 357.5L1230.7 349.4L1240.2 354.8Z" class="gl"/>
<polygon points="1152.9,371.0 1143.3,365.6 1187.0,357.5" fill="#89500a" stroke="#89500a" stroke-width=".8"/>
<polygon points="1152.9,371.0 1187.0,357.5 1196.6,362.9" fill="#89500a" stroke="#89500a" stroke-width=".8"/>
<path d="M1152.9 371.0L1143.3 365.6L1187.0 357.5L1196.6 362.9Z" class="gl"/>
<polygon points="1447.8,250.4 1438.3,245.0 1444.1,463.0" fill="url(#s73)" stroke="url(#s73)" stroke-width=".8"/>
<polygon points="1447.8,250.4 1444.1,463.0 1453.6,468.4" fill="url(#s74)" stroke="url(#s74)" stroke-width=".8"/>
<path d="M1447.8 250.4L1438.3 245.0L1444.1 463.0L1453.6 468.4Z" class="gs"/>
<polygon points="1439.1,252.0 1429.5,246.6 1438.3,245.0" fill="#cf0a0a" stroke="#cf0a0a" stroke-width=".8"/>
<polygon points="1439.1,252.0 1438.3,245.0 1447.8,250.4" fill="#cf0a0a" stroke="#cf0a0a" stroke-width=".8"/>
<path d="M1439.1 252.0L1429.5 246.6L1438.3 245.0L1447.8 250.4Z" class="gl"/>
<polygon points="1433.2,282.3 1423.7,276.9 1429.5,246.6" fill="url(#s75)" stroke="url(#s75)" stroke-width=".8"/>
<polygon points="1433.2,282.3 1429.5,246.6 1439.1,252.0" fill="url(#s76)" stroke="url(#s76)" stroke-width=".8"/>
<path d="M1433.2 282.3L1423.7 276.9L1429.5 246.6L1439.1 252.0Z" class="gs"/>
<polygon points="1424.5,283.9 1415.0,278.5 1423.7,276.9" fill="#b3260a" stroke="#b3260a" stroke-width=".8"/>
<polygon points="1424.5,283.9 1423.7,276.9 1433.2,282.3" fill="#b3260a" stroke="#b3260a" stroke-width=".8"/>
<path d="M1424.5 283.9L1415.0 278.5L1423.7 276.9L1433.2 282.3Z" class="gl"/>
<polygon points="1412.8,308.0 1403.3,295.3 1415.0,278.5" fill="url(#s77)" stroke="url(#s77)" stroke-width=".8"/>
<polygon points="1412.8,308.0 1415.0,278.5 1424.5,283.9" fill="url(#s78)" stroke="url(#s78)" stroke-width=".8"/>
<path d="M1412.8 308.0L1403.3 295.3L1415.0 278.5L1424.5 283.9Z" class="gs"/>
<polygon points="1395.4,325.8 1385.8,313.2 1403.3,295.3" fill="url(#s79)" stroke="url(#s79)" stroke-width=".8"/>
<polygon points="1395.4,325.8 1403.3,295.3 1412.8,308.0" fill="url(#s80)" stroke="url(#s80)" stroke-width=".8"/>
<path d="M1395.4 325.8L1385.8 313.2L1403.3 295.3L1412.8 308.0Z" class="gl"/>
<polygon points="1380.8,335.8 1371.3,330.5 1385.8,313.2" fill="url(#s81)" stroke="url(#s81)" stroke-width=".8"/>
<polygon points="1380.8,335.8 1385.8,313.2 1395.4,325.8" fill="url(#s82)" stroke="url(#s82)" stroke-width=".8"/>
<path d="M1380.8 335.8L1371.3 330.5L1385.8 313.2L1395.4 325.8Z" class="gl"/>
<polygon points="1366.3,338.5 1356.7,333.2 1371.3,330.5" fill="#89500a" stroke="#89500a" stroke-width=".8"/>
<polygon points="1366.3,338.5 1371.3,330.5 1380.8,335.8" fill="#89500a" stroke="#89500a" stroke-width=".8"/>
<path d="M1366.3 338.5L1356.7 333.2L1371.3 330.5L1380.8 335.8Z" class="gl"/>
<polygon points="1337.1,343.9 1327.6,338.6 1356.7,333.2" fill="#89500a" stroke="#89500a" stroke-width=".8"/>
<polygon points="1337.1,343.9 1356.7,333.2 1366.3,338.5" fill="#89500a" stroke="#89500a" stroke-width=".8"/>
<path d="M1337.1 343.9L1327.6 338.6L1356.7 333.2L1366.3 338.5Z" class="gl"/>
<polygon points="1308.0,349.3 1298.5,344.0 1327.6,338.6" fill="#89500a" stroke="#89500a" stroke-width=".8"/>
<polygon points="1308.0,349.3 1327.6,338.6 1337.1,343.9" fill="#89500a" stroke="#89500a" stroke-width=".8"/>
<path d="M1308.0 349.3L1298.5 344.0L1327.6 338.6L1337.1 343.9Z" class="gl"/>
<polygon points="1278.9,354.7 1269.4,349.4 1298.5,344.0" fill="#89500a" stroke="#89500a" stroke-width=".8"/>
<polygon points="1278.9,354.7 1298.5,344.0 1308.0,349.3" fill="#89500a" stroke="#89500a" stroke-width=".8"/>
<path d="M1278.9 354.7L1269.4 349.4L1298.5 344.0L1308.0 349.3Z" class="gl"/>
<polygon points="1264.3,357.4 1254.8,352.1 1269.4,349.4" fill="#89500a" stroke="#89500a" stroke-width=".8"/>
<polygon points="1264.3,357.4 1269.4,349.4 1278.9,354.7" fill="#89500a" stroke="#89500a" stroke-width=".8"/>
<path d="M1264.3 357.4L1254.8 352.1L1269.4 349.4L1278.9 354.7Z" class="gl"/>
<polygon points="1249.8,360.1 1240.2,354.8 1254.8,352.1" fill="#89500a" stroke="#89500a" stroke-width=".8"/>
<polygon points="1249.8,360.1 1254.8,352.1 1264.3,357.4" fill="#89500a" stroke="#89500a" stroke-width=".8"/>
<path d="M1249.8 360.1L1240.2 354.8L1254.8 352.1L1264.3 357.4Z" class="gl"/>
<polygon points="1206.1,368.2 1196.6,362.9 1240.2,354.8" fill="#89500a" stroke="#89500a" stroke-width=".8"/>
<polygon points="1206.1,368.2 1240.2,354.8 1249.8,360.1" fill="#89500a" stroke="#89500a" stroke-width=".8"/>
<path d="M1206.1 368.2L1196.6 362.9L1240.2 354.8L1249.8 360.1Z" class="gl"/>
<polygon points="1162.4,376.3 1152.9,371.0 1196.6,362.9" fill="#89500a" stroke="#89500a" stroke-width=".8"/>
<polygon points="1162.4,376.3 1196.6,362.9 1206.1,368.2" fill="#89500a" stroke="#89500a" stroke-width=".8"/>
<path d="M1162.4 376.3L1152.9 371.0L1196.6 362.9L1206.1 368.2Z" class="gl"/>
<polygon points="1457.3,255.7 1447.8,250.4 1453.6,468.4" fill="url(#s83)" stroke="url(#s83)" stroke-width=".8"/>
<polygon points="1457.3,255.7 1453.6,468.4 1463.1,473.8" fill="url(#s84)" stroke="url(#s84)" stroke-width=".8"/>
<path d="M1457.3 255.7L1447.8 250.4L1453.6 468.4L1463.1 473.8Z" class="gs"/>
<polygon points="1448.6,257.4 1439.1,252.0 1447.8,250.4" fill="#cf0a0a" stroke="#cf0a0a" stroke-width=".8"/>
<polygon points="1448.6,257.4 1447.8,250.4 1457.3,255.7" fill="#cf0a0a" stroke="#cf0a0a" stroke-width=".8"/>
<path d="M1448.6 257.4L1439.1 252.0L1447.8 250.4L1457.3 255.7Z" class="gl"/>
<polygon points="1442.8,287.6 1433.2,282.3 1439.1,252.0" fill="url(#s85)" stroke="url(#s85)" stroke-width=".8"/>
<polygon points="1442.8,287.6 1439.1,252.0 1448.6,257.4" fill="url(#s86)" stroke="url(#s86)" stroke-width=".8"/>
<path d="M1442.8 287.6L1433.2 282.3L1439.1 252.0L1448.6 257.4Z" class="gs"/>
<polygon points="1434.0,289.3 1424.5,283.9 1433.2,282.3" fill="#b3260a" stroke="#b3260a" stroke-width=".8"/>
<polygon points="1434.0,289.3 1433.2,282.3 1442.8,287.6" fill="#b3260a" stroke="#b3260a" stroke-width=".8"/>
<path d="M1434.0 289.3L1424.5 283.9L1433.2 282.3L1442.8 287.6Z" class="gl"/>
<polygon points="1422.4,335.2 1412.8,308.0 1424.5,283.9" fill="url(#s87)" stroke="url(#s87)" stroke-width=".8"/>
<polygon points="1422.4,335.2 1424.5,283.9 1434.0,289.3" fill="url(#s88)" stroke="url(#s88)" stroke-width=".8"/>
<path d="M1422.4 335.2L1412.8 308.0L1424.5 283.9L1434.0 289.3Z" class="gs"/>
<polygon points="1404.9,338.5 1395.4,325.8 1412.8,308.0" fill="url(#s89)" stroke="url(#s89)" stroke-width=".8"/>
<polygon points="1404.9,338.5 1412.8,308.0 1422.4,335.2" fill="url(#s90)" stroke="url(#s90)" stroke-width=".8"/>
<path d="M1404.9 338.5L1395.4 325.8L1412.8 308.0L1422.4 335.2Z" class="gl"/>
<polygon points="1390.3,341.2 1380.8,335.8 1395.4,325.8" fill="url(#s91)" stroke="url(#s91)" stroke-width=".8"/>
<polygon points="1390.3,341.2 1395.4,325.8 1404.9,338.5" fill="url(#s92)" stroke="url(#s92)" stroke-width=".8"/>
<path d="M1390.3 341.2L1380.8 335.8L1395.4 325.8L1404.9 338.5Z" class="gl"/>
<polygon points="1375.8,343.9 1366.3,338.5 1380.8,335.8" fill="#89500a" stroke="#89500a" stroke-width=".8"/>
<polygon points="1375.8,343.9 1380.8,335.8 1390.3,341.2" fill="#89500a" stroke="#89500a" stroke-width=".8"/>
<path d="M1375.8 343.9L1366.3 338.5L1380.8 335.8L1390.3 341.2Z" class="gl"/>
<polygon points="1346.7,349.3 1337.1,343.9 1366.3,338.5" fill="#89500a" stroke="#89500a" stroke-width=".8"/>
<polygon points="1346.7,349.3 1366.3,338.5 1375.8,343.9" fill="#89500a" stroke="#89500a" stroke-width=".8"/>
<path d="M1346.7 349.3L1337.1 343.9L1366.3 338.5L1375.8 343.9Z" class="gl"/>
<polygon points="1317.5,354.7 1308.0,349.3 1337.1,343.9" fill="#89500a" stroke="#89500a" stroke-width=".8"/>
<polygon points="1317.5,354.7 1337.1,343.9 1346.7,349.3" fill="#89500a" stroke="#89500a" stroke-width=".8"/>
<path d="M1317.5 354.7L1308.0 349.3L1337.1 343.9L1346.7 349.3Z" class="gl"/>
<polygon points="1288.4,360.1 1278.9,354.7 1308.0,349.3" fill="#89500a" stroke="#89500a" stroke-width=".8"/>
<polygon points="1288.4,360.1 1308.0,349.3 1317.5,354.7" fill="#89500a" stroke="#89500a" stroke-width=".8"/>
<path d="M1288.4 360.1L1278.9 354.7L1308.0 349.3L1317.5 354.7Z" class="gl"/>
<polygon points="1273.9,362.8 1264.3,357.4 1278.9,354.7" fill="#89500a" stroke="#89500a" stroke-width=".8"/>
<polygon points="1273.9,362.8 1278.9,354.7 1288.4,360.1" fill="#89500a" stroke="#89500a" stroke-width=".8"/>
<path d="M1273.9 362.8L1264.3 357.4L1278.9 354.7L1288.4 360.1Z" class="gl"/>
<polygon points="1259.3,365.5 1249.8,360.1 1264.3,357.4" fill="#89500a" stroke="#89500a" stroke-width=".8"/>
<polygon points="1259.3,365.5 1264.3,357.4 1273.9,362.8" fill="#89500a" stroke="#89500a" stroke-width=".8"/>
<path d="M1259.3 365.5L1249.8 360.1L1264.3 357.4L1273.9 362.8Z" class="gl"/>
<polygon points="1215.6,373.6 1206.1,368.2 1249.8,360.1" fill="#89500a" stroke="#89500a" stroke-width=".8"/>
<polygon points="1215.6,373.6 1249.8,360.1 1259.3,365.5" fill="#89500a" stroke="#89500a" stroke-width=".8"/>
<path d="M1215.6 373.6L1206.1 368.2L1249.8 360.1L1259.3 365.5Z" class="gl"/>
<polygon points="1171.9,381.7 1162.4,376.3 1206.1,368.2" fill="#89500a" stroke="#89500a" stroke-width=".8"/>
<polygon points="1171.9,381.7 1206.1,368.2 1215.6,373.6" fill="#89500a" stroke="#89500a" stroke-width=".8"/>
<path d="M1171.9 381.7L1162.4 376.3L1206.1 368.2L1215.6 373.6Z" class="gl"/>
<polygon points="1466.9,275.7 1457.3,255.7 1463.1,473.8" fill="url(#s93)" stroke="url(#s93)" stroke-width=".8"/>
<polygon points="1466.9,275.7 1463.1,473.8 1472.7,479.1" fill="url(#s94)" stroke="url(#s94)" stroke-width=".8"/>
<path d="M1466.9 275.7L1457.3 255.7L1463.1 473.8L1472.7 479.1Z" class="gs"/>
<polygon points="1458.1,277.3 1448.6,257.4 1457.3,255.7" fill="url(#s95)" stroke="url(#s95)" stroke-width=".8"/>
<polygon points="1458.1,277.3 1457.3,255.7 1466.9,275.7" fill="url(#s96)" stroke="url(#s96)" stroke-width=".8"/>
<path d="M1458.1 277.3L1448.6 257.4L1457.3 255.7L1466.9 275.7Z" class="gl"/>
<polygon points="1452.3,293.0 1442.8,287.6 1448.6,257.4" fill="url(#s97)" stroke="url(#s97)" stroke-width=".8"/>
<polygon points="1452.3,293.0 1448.6,257.4 1458.1,277.3" fill="url(#s98)" stroke="url(#s98)" stroke-width=".8"/>
<path d="M1452.3 293.0L1442.8 287.6L1448.6 257.4L1458.1 277.3Z" class="gs"/>
<polygon points="1443.6,294.6 1434.0,289.3 1442.8,287.6" fill="#b3260a" stroke="#b3260a" stroke-width=".8"/>
<polygon points="1443.6,294.6 1442.8,287.6 1452.3,293.0" fill="#b3260a" stroke="#b3260a" stroke-width=".8"/>
<path d="M1443.6 294.6L1434.0 289.3L1442.8 287.6L1452.3 293.0Z" class="gl"/>
<polygon points="1431.9,355.2 1422.4,335.2 1434.0,289.3" fill="url(#s99)" stroke="url(#s99)" stroke-width=".8"/>
<polygon points="1431.9,355.2 1434.0,289.3 1443.6,294.6" fill="url(#s100)" stroke="url(#s100)" stroke-width=".8"/>
<path d="M1431.9 355.2L1422.4 335.2L1434.0 289.3L1443.6 294.6Z" class="gs"/>
<polygon points="1414.4,358.5 1404.9,338.5 1422.4,335.2" fill="url(#s101)" stroke="url(#s101)" stroke-width=".8"/>
<polygon points="1414.4,358.5 1422.4,335.2 1431.9,355.2" fill="url(#s102)" stroke="url(#s102)" stroke-width=".8"/>
<path d="M1414.4 358.5L1404.9 338.5L1422.4 335.2L1431.9 355.2Z" class="gl"/>
<polygon points="1399.9,361.2 1390.3,341.2 1404.9,338.5" fill="url(#s103)" stroke="url(#s103)" stroke-width=".8"/>
<polygon points="1399.9,361.2 1404.9,338.5 1414.4,358.5" fill="url(#s104)" stroke="url(#s104)" stroke-width=".8"/>
<path d="M1399.9 361.2L1390.3 341.2L1404.9 338.5L1414.4 358.5Z" class="gl"/>
<polygon points="1385.3,363.9 1375.8,343.9 1390.3,341.2" fill="url(#s105)" stroke="url(#s105)" stroke-width=".8"/>
<polygon points="1385.3,363.9 1390.3,341.2 1399.9,361.2" fill="url(#s106)" stroke="url(#s106)" stroke-width=".8"/>
<path d="M1385.3 363.9L1375.8 343.9L1390.3 341.2L1399.9 361.2Z" class="gl"/>
<polygon points="1356.2,369.3 1346.7,349.3 1375.8,343.9" fill="url(#s107)" stroke="url(#s107)" stroke-width=".8"/>
<polygon points="1356.2,369.3 1375.8,343.9 1385.3,363.9" fill="url(#s108)" stroke="url(#s108)" stroke-width=".8"/>
<path d="M1356.2 369.3L1346.7 349.3L1375.8 343.9L1385.3 363.9Z" class="gl"/>
<polygon points="1327.1,374.7 1317.5,354.7 1346.7,349.3" fill="url(#s109)" stroke="url(#s109)" stroke-width=".8"/>
<polygon points="1327.1,374.7 1346.7,349.3 1356.2,369.3" fill="url(#s110)" stroke="url(#s110)" stroke-width=".8"/>
<path d="M1327.1 374.7L1317.5 354.7L1346.7 349.3L1356.2 369.3Z" class="gl"/>
<polygon points="1298.0,380.1 1288.4,360.1 1317.5,354.7" fill="url(#s111)" stroke="url(#s111)" stroke-width=".8"/>
<polygon points="1298.0,380.1 1317.5,354.7 1327.1,374.7" fill="url(#s112)" stroke="url(#s112)" stroke-width=".8"/>
<path d="M1298.0 380.1L1288.4 360.1L1317.5 354.7L1327.1 374.7Z" class="gl"/>
<polygon points="1283.4,382.8 1273.9,362.8 1288.4,360.1" fill="url(#s113)" stroke="url(#s113)" stroke-width=".8"/>
<polygon points="1283.4,382.8 1288.4,360.1 1298.0,380.1" fill="url(#s114)" stroke="url(#s114)" stroke-width=".8"/>
<path d="M1283.4 382.8L1273.9 362.8L1288.4 360.1L1298.0 380.1Z" class="gl"/>
<polygon points="1268.8,385.5 1259.3,365.5 1273.9,362.8" fill="url(#s115)" stroke="url(#s115)" stroke-width=".8"/>
<polygon points="1268.8,385.5 1273.9,362.8 1283.4,382.8" fill="url(#s116)" stroke="url(#s116)" stroke-width=".8"/>
<path d="M1268.8 385.5L1259.3 365.5L1273.9 362.8L1283.4 382.8Z" class="gl"/>
<polygon points="1225.2,393.6 1215.6,373.6 1259.3,365.5" fill="url(#s117)" stroke="url(#s117)" stroke-width=".8"/>
<polygon points="1225.2,393.6 1259.3,365.5 1268.8,385.5" fill="url(#s118)" stroke="url(#s118)" stroke-width=".8"/>
<path d="M1225.2 393.6L1215.6 373.6L1259.3 365.5L1268.8 385.5Z" class="gl"/>
<polygon points="1181.5,401.7 1171.9,381.7 1215.6,373.6" fill="url(#s119)" stroke="url(#s119)" stroke-width=".8"/>
<polygon points="1181.5,401.7 1215.6,373.6 1225.2,393.6" fill="url(#s120)" stroke="url(#s120)" stroke-width=".8"/>
<path d="M1181.5 401.7L1171.9 381.7L1215.6 373.6L1225.2 393.6Z" class="gl"/>
<polygon points="1476.4,295.7 1466.9,275.7 1472.7,479.1" fill="url(#s121)" stroke="url(#s121)" stroke-width=".8"/>
<polygon points="1476.4,295.7 1472.7,479.1 1482.2,484.5" fill="url(#s122)" stroke="url(#s122)" stroke-width=".8"/>
<path d="M1476.4 295.7L1466.9 275.7L1472.7 479.1L1482.2 484.5Z" class="gs"/>
<polygon points="1467.7,311.9 1458.1,277.3 1466.9,275.7" fill="url(#s123)" stroke="url(#s123)" stroke-width=".8"/>
<polygon points="1467.7,311.9 1466.9,275.7 1476.4,295.7" fill="url(#s124)" stroke="url(#s124)" stroke-width=".8"/>
<path d="M1467.7 311.9L1458.1 277.3L1466.9 275.7L1476.4 295.7Z" class="gs"/>
<polygon points="1461.8,320.3 1452.3,293.0 1458.1,277.3" fill="url(#s125)" stroke="url(#s125)" stroke-width=".8"/>
<polygon points="1461.8,320.3 1458.1,277.3 1467.7,311.9" fill="url(#s126)" stroke="url(#s126)" stroke-width=".8"/>
<path d="M1461.8 320.3L1452.3 293.0L1458.1 277.3L1467.7 311.9Z" class="gs"/>
<polygon points="1453.1,329.2 1443.6,294.6 1452.3,293.0" fill="url(#s127)" stroke="url(#s127)" stroke-width=".8"/>
<polygon points="1453.1,329.2 1452.3,293.0 1461.8,320.3" fill="url(#s128)" stroke="url(#s128)" stroke-width=".8"/>
<path d="M1453.1 329.2L1443.6 294.6L1452.3 293.0L1461.8 320.3Z" class="gs"/>
<polygon points="1441.4,389.8 1431.9,355.2 1443.6,294.6" fill="url(#s129)" stroke="url(#s129)" stroke-width=".8"/>
<polygon points="1441.4,389.8 1443.6,294.6 1453.1,329.2" fill="url(#s130)" stroke="url(#s130)" stroke-width=".8"/>
<path d="M1441.4 389.8L1431.9 355.2L1443.6 294.6L1453.1 329.2Z" class="gs"/>
<polygon points="1424.0,407.6 1414.4,358.5 1431.9,355.2" fill="url(#s131)" stroke="url(#s131)" stroke-width=".8"/>
<polygon points="1424.0,407.6 1431.9,355.2 1441.4,389.8" fill="url(#s132)" stroke="url(#s132)" stroke-width=".8"/>
<path d="M1424.0 407.6L1414.4 358.5L1431.9 355.2L1441.4 389.8Z" class="gs"/>
<polygon points="1409.4,410.3 1399.9,361.2 1414.4,358.5" fill="url(#s133)" stroke="url(#s133)" stroke-width=".8"/>
<polygon points="1409.4,410.3 1414.4,358.5 1424.0,407.6" fill="url(#s134)" stroke="url(#s134)" stroke-width=".8"/>
<path d="M1409.4 410.3L1399.9 361.2L1414.4 358.5L1424.0 407.6Z" class="gs"/>
<polygon points="1394.9,413.0 1385.3,363.9 1399.9,361.2" fill="url(#s135)" stroke="url(#s135)" stroke-width=".8"/>
<polygon points="1394.9,413.0 1399.9,361.2 1409.4,410.3" fill="url(#s136)" stroke="url(#s136)" stroke-width=".8"/>
<path d="M1394.9 413.0L1385.3 363.9L1399.9 361.2L1409.4 410.3Z" class="gs"/>
<polygon points="1365.7,418.4 1356.2,369.3 1385.3,363.9" fill="url(#s137)" stroke="url(#s137)" stroke-width=".8"/>
<polygon points="1365.7,418.4 1385.3,363.9 1394.9,413.0" fill="url(#s138)" stroke="url(#s138)" stroke-width=".8"/>
<path d="M1365.7 418.4L1356.2 369.3L1385.3 363.9L1394.9 413.0Z" class="gs"/>
<polygon points="1336.6,423.8 1327.1,374.7 1356.2,369.3" fill="url(#s139)" stroke="url(#s139)" stroke-width=".8"/>
<polygon points="1336.6,423.8 1356.2,369.3 1365.7,418.4" fill="url(#s140)" stroke="url(#s140)" stroke-width=".8"/>
<path d="M1336.6 423.8L1327.1 374.7L1356.2 369.3L1365.7 418.4Z" class="gs"/>
<polygon points="1307.5,429.2 1298.0,380.1 1327.1,374.7" fill="url(#s141)" stroke="url(#s141)" stroke-width=".8"/>
<polygon points="1307.5,429.2 1327.1,374.7 1336.6,423.8" fill="url(#s142)" stroke="url(#s142)" stroke-width=".8"/>
<path d="M1307.5 429.2L1298.0 380.1L1327.1 374.7L1336.6 423.8Z" class="gs"/>
<polygon points="1292.9,431.9 1283.4,382.8 1298.0,380.1" fill="url(#s143)" stroke="url(#s143)" stroke-width=".8"/>
<polygon points="1292.9,431.9 1298.0,380.1 1307.5,429.2" fill="url(#s144)" stroke="url(#s144)" stroke-width=".8"/>
<path d="M1292.9 431.9L1283.4 382.8L1298.0 380.1L1307.5 429.2Z" class="gs"/>
<polygon points="1278.4,434.6 1268.8,385.5 1283.4,382.8" fill="url(#s145)" stroke="url(#s145)" stroke-width=".8"/>
<polygon points="1278.4,434.6 1283.4,382.8 1292.9,431.9" fill="url(#s146)" stroke="url(#s146)" stroke-width=".8"/>
<path d="M1278.4 434.6L1268.8 385.5L1283.4 382.8L1292.9 431.9Z" class="gs"/>
<polygon points="1234.7,442.7 1225.2,393.6 1268.8,385.5" fill="url(#s147)" stroke="url(#s147)" stroke-width=".8"/>
<polygon points="1234.7,442.7 1268.8,385.5 1278.4,434.6" fill="url(#s148)" stroke="url(#s148)" stroke-width=".8"/>
<path d="M1234.7 442.7L1225.2 393.6L1268.8 385.5L1278.4 434.6Z" class="gs"/>
<polygon points="1191.0,450.8 1181.5,401.7 1225.2,393.6" fill="url(#s149)" stroke="url(#s149)" stroke-width=".8"/>
<polygon points="1191.0,450.8 1225.2,393.6 1234.7,442.7" fill="url(#s150)" stroke="url(#s150)" stroke-width=".8"/>
<path d="M1191.0 450.8L1181.5 401.7L1225.2 393.6L1234.7 442.7Z" class="gs"/>
<polygon points="1485.9,322.9 1476.4,295.7 1482.2,484.5" fill="url(#s151)" stroke="url(#s151)" stroke-width=".8"/>
<polygon points="1485.9,322.9 1482.2,484.5 1491.8,460.6" fill="url(#s152)" stroke="url(#s152)" stroke-width=".8"/>
<path d="M1485.9 322.9L1476.4 295.7L1482.2 484.5L1491.8 460.6Z" class="gs"/>
<polygon points="1477.2,353.8 1467.7,311.9 1476.4,295.7" fill="url(#s153)" stroke="url(#s153)" stroke-width=".8"/>
<polygon points="1477.2,353.8 1476.4,295.7 1485.9,322.9" fill="url(#s154)" stroke="url(#s154)" stroke-width=".8"/>
<path d="M1477.2 353.8L1467.7 311.9L1476.4 295.7L1485.9 322.9Z" class="gs"/>
<polygon points="1471.4,354.8 1461.8,320.3 1467.7,311.9" fill="url(#s155)" stroke="url(#s155)" stroke-width=".8"/>
<polygon points="1471.4,354.8 1467.7,311.9 1477.2,353.8" fill="url(#s156)" stroke="url(#s156)" stroke-width=".8"/>
<path d="M1471.4 354.8L1461.8 320.3L1467.7 311.9L1477.2 353.8Z" class="gs"/>
<polygon points="1462.6,371.1 1453.1,329.2 1461.8,320.3" fill="url(#s157)" stroke="url(#s157)" stroke-width=".8"/>
<polygon points="1462.6,371.1 1461.8,320.3 1471.4,354.8" fill="url(#s158)" stroke="url(#s158)" stroke-width=".8"/>
<path d="M1462.6 371.1L1453.1 329.2L1461.8 320.3L1471.4 354.8Z" class="gs"/>
<polygon points="1451.0,424.4 1441.4,389.8 1453.1,329.2" fill="url(#s159)" stroke="url(#s159)" stroke-width=".8"/>
<polygon points="1451.0,424.4 1453.1,329.2 1462.6,371.1" fill="url(#s160)" stroke="url(#s160)" stroke-width=".8"/>
<path d="M1451.0 424.4L1441.4 389.8L1453.1 329.2L1462.6 371.1Z" class="gs"/>
<polygon points="1433.5,478.7 1424.0,407.6 1441.4,389.8" fill="url(#s161)" stroke="url(#s161)" stroke-width=".8"/>
<polygon points="1433.5,478.7 1441.4,389.8 1451.0,424.4" fill="url(#s162)" stroke="url(#s162)" stroke-width=".8"/>
<path d="M1433.5 478.7L1424.0 407.6L1441.4 389.8L1451.0 424.4Z" class="gs"/>
<polygon points="1419.0,488.7 1409.4,410.3 1424.0,407.6" fill="url(#s163)" stroke="url(#s163)" stroke-width=".8"/>
<polygon points="1419.0,488.7 1424.0,407.6 1433.5,478.7" fill="url(#s164)" stroke="url(#s164)" stroke-width=".8"/>
<path d="M1419.0 488.7L1409.4 410.3L1424.0 407.6L1433.5 478.7Z" class="gs"/>
<polygon points="1404.4,491.4 1394.9,413.0 1409.4,410.3" fill="url(#s165)" stroke="url(#s165)" stroke-width=".8"/>
<polygon points="1404.4,491.4 1409.4,410.3 1419.0,488.7" fill="url(#s166)" stroke="url(#s166)" stroke-width=".8"/>
<path d="M1404.4 491.4L1394.9 413.0L1409.4 410.3L1419.0 488.7Z" class="gs"/>
<polygon points="1375.3,496.8 1365.7,418.4 1394.9,413.0" fill="url(#s167)" stroke="url(#s167)" stroke-width=".8"/>
<polygon points="1375.3,496.8 1394.9,413.0 1404.4,491.4" fill="url(#s168)" stroke="url(#s168)" stroke-width=".8"/>
<path d="M1375.3 496.8L1365.7 418.4L1394.9 413.0L1404.4 491.4Z" class="gs"/>
<polygon points="1346.2,502.2 1336.6,423.8 1365.7,418.4" fill="url(#s169)" stroke="url(#s169)" stroke-width=".8"/>
<polygon points="1346.2,502.2 1365.7,418.4 1375.3,496.8" fill="url(#s170)" stroke="url(#s170)" stroke-width=".8"/>
<path d="M1346.2 502.2L1336.6 423.8L1365.7 418.4L1375.3 496.8Z" class="gs"/>
<polygon points="1317.0,507.6 1307.5,429.2 1336.6,423.8" fill="url(#s171)" stroke="url(#s171)" stroke-width=".8"/>
<polygon points="1317.0,507.6 1336.6,423.8 1346.2,502.2" fill="url(#s172)" stroke="url(#s172)" stroke-width=".8"/>
<path d="M1317.0 507.6L1307.5 429.2L1336.6 423.8L1346.2 502.2Z" class="gs"/>
<polygon points="1302.5,510.3 1292.9,431.9 1307.5,429.2" fill="url(#s173)" stroke="url(#s173)" stroke-width=".8"/>
<polygon points="1302.5,510.3 1307.5,429.2 1317.0,507.6" fill="url(#s174)" stroke="url(#s174)" stroke-width=".8"/>
<path d="M1302.5 510.3L1292.9 431.9L1307.5 429.2L1317.0 507.6Z" class="gs"/>
<polygon points="1287.9,513.0 1278.4,434.6 1292.9,431.9" fill="url(#s175)" stroke="url(#s175)" stroke-width=".8"/>
<polygon points="1287.9,513.0 1292.9,431.9 1302.5,510.3" fill="url(#s176)" stroke="url(#s176)" stroke-width=".8"/>
<path d="M1287.9 513.0L1278.4 434.6L1292.9 431.9L1302.5 510.3Z" class="gs"/>
<polygon points="1244.2,521.1 1234.7,442.7 1278.4,434.6" fill="url(#s177)" stroke="url(#s177)" stroke-width=".8"/>
<polygon points="1244.2,521.1 1278.4,434.6 1287.9,513.0" fill="url(#s178)" stroke="url(#s178)" stroke-width=".8"/>
<path d="M1244.2 521.1L1234.7 442.7L1278.4 434.6L1287.9 513.0Z" class="gs"/>
<polygon points="1200.5,529.2 1191.0,450.8 1234.7,442.7" fill="url(#s179)" stroke="url(#s179)" stroke-width=".8"/>
<polygon points="1200.5,529.2 1234.7,442.7 1244.2,521.1" fill="url(#s180)" stroke="url(#s180)" stroke-width=".8"/>
<path d="M1200.5 529.2L1191.0 450.8L1234.7 442.7L1244.2 521.1Z" class="gs"/>
<polygon points="1495.5,342.9 1485.9,322.9 1491.8,460.6" fill="url(#s181)" stroke="url(#s181)" stroke-width=".8"/>
<polygon points="1495.5,342.9 1491.8,460.6 1501.3,371.0" fill="url(#s182)" stroke="url(#s182)" stroke-width=".8"/>
<path d="M1495.5 342.9L1485.9 322.9L1491.8 460.6L1501.3 371.0Z" class="gs"/>
<polygon points="1486.7,373.7 1477.2,353.8 1485.9,322.9" fill="url(#s183)" stroke="url(#s183)" stroke-width=".8"/>
<polygon points="1486.7,373.7 1485.9,322.9 1495.5,342.9" fill="url(#s184)" stroke="url(#s184)" stroke-width=".8"/>
<path d="M1486.7 373.7L1477.2 353.8L1485.9 322.9L1495.5 342.9Z" class="gs"/>
<polygon points="1480.9,374.8 1471.4,354.8 1477.2,353.8" fill="url(#s185)" stroke="url(#s185)" stroke-width=".8"/>
<polygon points="1480.9,374.8 1477.2,353.8 1486.7,373.7" fill="url(#s186)" stroke="url(#s186)" stroke-width=".8"/>
<path d="M1480.9 374.8L1471.4 354.8L1477.2 353.8L1486.7 373.7Z" class="gl"/>
<polygon points="1472.2,391.0 1462.6,371.1 1471.4,354.8" fill="url(#s187)" stroke="url(#s187)" stroke-width=".8"/>
<polygon points="1472.2,391.0 1471.4,354.8 1480.9,374.8" fill="url(#s188)" stroke="url(#s188)" stroke-width=".8"/>
<path d="M1472.2 391.0L1462.6 371.1L1471.4 354.8L1480.9 374.8Z" class="gs"/>
<polygon points="1460.5,437.0 1451.0,424.4 1462.6,371.1" fill="url(#s189)" stroke="url(#s189)" stroke-width=".8"/>
<polygon points="1460.5,437.0 1462.6,371.1 1472.2,391.0" fill="url(#s190)" stroke="url(#s190)" stroke-width=".8"/>
<path d="M1460.5 437.0L1451.0 424.4L1462.6 371.1L1472.2 391.0Z" class="gs"/>
<polygon points="1443.0,527.9 1433.5,478.7 1451.0,424.4" fill="url(#s191)" stroke="url(#s191)" stroke-width=".8"/>
<polygon points="1443.0,527.9 1451.0,424.4 1460.5,437.0" fill="url(#s192)" stroke="url(#s192)" stroke-width=".8"/>
<path d="M1443.0 527.9L1433.5 478.7L1451.0 424.4L1460.5 437.0Z" class="gs"/>
<polygon points="1428.5,559.8 1419.0,488.7 1433.5,478.7" fill="url(#s193)" stroke="url(#s193)" stroke-width=".8"/>
<polygon points="1428.5,559.8 1433.5,478.7 1443.0,527.9" fill="url(#s194)" stroke="url(#s194)" stroke-width=".8"/>
<path d="M1428.5 559.8L1419.0 488.7L1433.5 478.7L1443.0 527.9Z" class="gs"/>
<polygon points="1413.9,562.5 1404.4,491.4 1419.0,488.7" fill="url(#s195)" stroke="url(#s195)" stroke-width=".8"/>
<polygon points="1413.9,562.5 1419.0,488.7 1428.5,559.8" fill="url(#s196)" stroke="url(#s196)" stroke-width=".8"/>
<path d="M1413.9 562.5L1404.4 491.4L1419.0 488.7L1428.5 559.8Z" class="gs"/>
<polygon points="1384.8,567.9 1375.3,496.8 1404.4,491.4" fill="url(#s197)" stroke="url(#s197)" stroke-width=".8"/>
<polygon points="1384.8,567.9 1404.4,491.4 1413.9,562.5" fill="url(#s198)" stroke="url(#s198)" stroke-width=".8"/>
<path d="M1384.8 567.9L1375.3 496.8L1404.4 491.4L1413.9 562.5Z" class="gs"/>
<polygon points="1355.7,573.3 1346.2,502.2 1375.3,496.8" fill="url(#s199)" stroke="url(#s199)" stroke-width=".8"/>
<polygon points="1355.7,573.3 1375.3,496.8 1384.8,567.9" fill="url(#s200)" stroke="url(#s200)" stroke-width=".8"/>
<path d="M1355.7 573.3L1346.2 502.2L1375.3 496.8L1384.8 567.9Z" class="gs"/>
<polygon points="1326.6,578.7 1317.0,507.6 1346.2,502.2" fill="url(#s201)" stroke="url(#s201)" stroke-width=".8"/>
<polygon points="1326.6,578.7 1346.2,502.2 1355.7,573.3" fill="url(#s202)" stroke="url(#s202)" stroke-width=".8"/>
<path d="M1326.6 578.7L1317.0 507.6L1346.2 502.2L1355.7 573.3Z" class="gs"/>
<polygon points="1312.0,581.4 1302.5,510.3 1317.0,507.6" fill="url(#s203)" stroke="url(#s203)" stroke-width=".8"/>
<polygon points="1312.0,581.4 1317.0,507.6 1326.6,578.7" fill="url(#s204)" stroke="url(#s204)" stroke-width=".8"/>
<path d="M1312.0 581.4L1302.5 510.3L1317.0 507.6L1326.6 578.7Z" class="gs"/>
<polygon points="1297.4,584.1 1287.9,513.0 1302.5,510.3" fill="url(#s205)" stroke="url(#s205)" stroke-width=".8"/>
<polygon points="1297.4,584.1 1302.5,510.3 1312.0,581.4" fill="url(#s206)" stroke="url(#s206)" stroke-width=".8"/>
<path d="M1297.4 584.1L1287.9 513.0L1302.5 510.3L1312.0 581.4Z" class="gs"/>
<polygon points="1253.8,592.2 1244.2,521.1 1287.9,513.0" fill="url(#s207)" stroke="url(#s207)" stroke-width=".8"/>
<polygon points="1253.8,592.2 1287.9,513.0 1297.4,584.1" fill="url(#s208)" stroke="url(#s208)" stroke-width=".8"/>
<path d="M1253.8 592.2L1244.2 521.1L1287.9 513.0L1297.4 584.1Z" class="gs"/>
<polygon points="1210.1,600.3 1200.5,529.2 1244.2,521.1" fill="url(#s209)" stroke="url(#s209)" stroke-width=".8"/>
<polygon points="1210.1,600.3 1244.2,521.1 1253.8,592.2" fill="url(#s210)" stroke="url(#s210)" stroke-width=".8"/>
<path d="M1210.1 600.3L1200.5 529.2L1244.2 521.1L1253.8 592.2Z" class="gs"/>
<polygon points="1501.2,397.2 1495.5,342.9 1501.3,371.0" fill="url(#s211)" stroke="url(#s211)" stroke-width=".8"/>
<polygon points="1501.2,397.2 1501.3,371.0 1507.0,461.9" fill="url(#s212)" stroke="url(#s212)" stroke-width=".8"/>
<path d="M1501.2 397.2L1495.5 342.9L1501.3 371.0L1507.0 461.9Z" class="gs"/>
<polygon points="1492.4,376.9 1486.7,373.7 1495.5,342.9" fill="url(#s213)" stroke="url(#s213)" stroke-width=".8"/>
<polygon points="1492.4,376.9 1495.5,342.9 1501.2,397.2" fill="url(#s214)" stroke="url(#s214)" stroke-width=".8"/>
<path d="M1492.4 376.9L1486.7 373.7L1495.5 342.9L1501.2 397.2Z" class="gs"/>
<polygon points="1486.6,421.8 1480.9,374.8 1486.7,373.7" fill="url(#s215)" stroke="url(#s215)" stroke-width=".8"/>
<polygon points="1486.6,421.8 1486.7,373.7 1492.4,376.9" fill="url(#s216)" stroke="url(#s216)" stroke-width=".8"/>
<path d="M1486.6 421.8L1480.9 374.8L1486.7 373.7L1492.4 376.9Z" class="gs"/>
<polygon points="1477.9,503.8 1472.2,391.0 1480.9,374.8" fill="url(#s217)" stroke="url(#s217)" stroke-width=".8"/>
<polygon points="1477.9,503.8 1480.9,374.8 1486.6,421.8" fill="url(#s218)" stroke="url(#s218)" stroke-width=".8"/>
<path d="M1477.9 503.8L1472.2 391.0L1480.9 374.8L1486.6 421.8Z" class="gs"/>
<polygon points="1466.2,513.3 1460.5,437.0 1472.2,391.0" fill="url(#s219)" stroke="url(#s219)" stroke-width=".8"/>
<polygon points="1466.2,513.3 1472.2,391.0 1477.9,503.8" fill="url(#s220)" stroke="url(#s220)" stroke-width=".8"/>
<path d="M1466.2 513.3L1460.5 437.0L1472.2 391.0L1477.9 503.8Z" class="gs"/>
<polygon points="1448.8,567.6 1443.0,527.9 1460.5,437.0" fill="url(#s221)" stroke="url(#s221)" stroke-width=".8"/>
<polygon points="1448.8,567.6 1460.5,437.0 1466.2,513.3" fill="url(#s222)" stroke="url(#s222)" stroke-width=".8"/>
<path d="M1448.8 567.6L1443.0 527.9L1460.5 437.0L1466.2 513.3Z" class="gs"/>
<polygon points="1434.2,570.3 1428.5,559.8 1443.0,527.9" fill="url(#s223)" stroke="url(#s223)" stroke-width=".8"/>
<polygon points="1434.2,570.3 1443.0,527.9 1448.8,567.6" fill="url(#s224)" stroke="url(#s224)" stroke-width=".8"/>
<path d="M1434.2 570.3L1428.5 559.8L1443.0 527.9L1448.8 567.6Z" class="gs"/>
<polygon points="1419.6,573.0 1413.9,562.5 1428.5,559.8" fill="url(#s225)" stroke="url(#s225)" stroke-width=".8"/>
<polygon points="1419.6,573.0 1428.5,559.8 1434.2,570.3" fill="url(#s226)" stroke="url(#s226)" stroke-width=".8"/>
<path d="M1419.6 573.0L1413.9 562.5L1428.5 559.8L1434.2 570.3Z" class="gl"/>
<polygon points="1390.5,578.4 1384.8,567.9 1413.9,562.5" fill="url(#s227)" stroke="url(#s227)" stroke-width=".8"/>
<polygon points="1390.5,578.4 1413.9,562.5 1419.6,573.0" fill="url(#s228)" stroke="url(#s228)" stroke-width=".8"/>
<path d="M1390.5 578.4L1384.8 567.9L1413.9 562.5L1419.6 573.0Z" class="gl"/>
<polygon points="1361.4,583.8 1355.7,573.3 1384.8,567.9" fill="url(#s229)" stroke="url(#s229)" stroke-width=".8"/>
<polygon points="1361.4,583.8 1384.8,567.9 1390.5,578.4" fill="url(#s230)" stroke="url(#s230)" stroke-width=".8"/>
<path d="M1361.4 583.8L1355.7 573.3L1384.8 567.9L1390.5 578.4Z" class="gl"/>
<polygon points="1332.3,589.2 1326.6,578.7 1355.7,573.3" fill="url(#s231)" stroke="url(#s231)" stroke-width=".8"/>
<polygon points="1332.3,589.2 1355.7,573.3 1361.4,583.8" fill="url(#s232)" stroke="url(#s232)" stroke-width=".8"/>
<path d="M1332.3 589.2L1326.6 578.7L1355.7 573.3L1361.4 583.8Z" class="gl"/>
<polygon points="1317.7,591.9 1312.0,581.4 1326.6,578.7" fill="url(#s233)" stroke="url(#s233)" stroke-width=".8"/>
<polygon points="1317.7,591.9 1326.6,578.7 1332.3,589.2" fill="url(#s234)" stroke="url(#s234)" stroke-width=".8"/>
<path d="M1317.7 591.9L1312.0 581.4L1326.6 578.7L1332.3 589.2Z" class="gl"/>
<polygon points="1303.2,594.6 1297.4,584.1 1312.0,581.4" fill="url(#s235)" stroke="url(#s235)" stroke-width=".8"/>
<polygon points="1303.2,594.6 1312.0,581.4 1317.7,591.9" fill="url(#s236)" stroke="url(#s236)" stroke-width=".8"/>
<path d="M1303.2 594.6L1297.4 584.1L1312.0 581.4L1317.7 591.9Z" class="gl"/>
<polygon points="1259.5,602.7 1253.8,592.2 1297.4,584.1" fill="url(#s237)" stroke="url(#s237)" stroke-width=".8"/>
<polygon points="1259.5,602.7 1297.4,584.1 1303.2,594.6" fill="url(#s238)" stroke="url(#s238)" stroke-width=".8"/>
<path d="M1259.5 602.7L1253.8 592.2L1297.4 584.1L1303.2 594.6Z" class="gl"/>
<polygon points="1215.8,610.8 1210.1,600.3 1253.8,592.2" fill="url(#s239)" stroke="url(#s239)" stroke-width=".8"/>
<polygon points="1215.8,610.8 1253.8,592.2 1259.5,602.7" fill="url(#s240)" stroke="url(#s240)" stroke-width=".8"/>
<path d="M1215.8 610.8L1210.1 600.3L1253.8 592.2L1259.5 602.7Z" class="gl"/>
<polygon points="1508.8,445.3 1501.2,397.2 1507.0,461.9" fill="url(#s241)" stroke="url(#s241)" stroke-width=".8"/>
<polygon points="1508.8,445.3 1507.0,461.9 1514.6,488.1" fill="url(#s242)" stroke="url(#s242)" stroke-width=".8"/>
<path d="M1508.8 445.3L1501.2 397.2L1507.0 461.9L1514.6 488.1Z" class="gs"/>
<polygon points="1500.1,432.4 1492.4,376.9 1501.2,397.2" fill="url(#s243)" stroke="url(#s243)" stroke-width=".8"/>
<polygon points="1500.1,432.4 1501.2,397.2 1508.8,445.3" fill="url(#s244)" stroke="url(#s244)" stroke-width=".8"/>
<path d="M1500.1 432.4L1492.4 376.9L1501.2 397.2L1508.8 445.3Z" class="gs"/>
<polygon points="1494.2,462.6 1486.6,421.8 1492.4,376.9" fill="url(#s245)" stroke="url(#s245)" stroke-width=".8"/>
<polygon points="1494.2,462.6 1492.4,376.9 1500.1,432.4" fill="url(#s246)" stroke="url(#s246)" stroke-width=".8"/>
<path d="M1494.2 462.6L1486.6 421.8L1492.4 376.9L1500.1 432.4Z" class="gs"/>
<polygon points="1485.5,493.5 1477.9,503.8 1486.6,421.8" fill="url(#s247)" stroke="url(#s247)" stroke-width=".8"/>
<polygon points="1485.5,493.5 1486.6,421.8 1494.2,462.6" fill="url(#s248)" stroke="url(#s248)" stroke-width=".8"/>
<path d="M1485.5 493.5L1477.9 503.8L1486.6 421.8L1494.2 462.6Z" class="gs"/>
<polygon points="1473.9,495.6 1466.2,513.3 1477.9,503.8" fill="url(#s249)" stroke="url(#s249)" stroke-width=".8"/>
<polygon points="1473.9,495.6 1477.9,503.8 1485.5,493.5" fill="url(#s250)" stroke="url(#s250)" stroke-width=".8"/>
<path d="M1473.9 495.6L1466.2 513.3L1477.9 503.8L1485.5 493.5Z" class="gs"/>
<polygon points="1456.4,571.9 1448.8,567.6 1466.2,513.3" fill="url(#s251)" stroke="url(#s251)" stroke-width=".8"/>
<polygon points="1456.4,571.9 1466.2,513.3 1473.9,495.6" fill="url(#s252)" stroke="url(#s252)" stroke-width=".8"/>
<path d="M1456.4 571.9L1448.8 567.6L1466.2 513.3L1473.9 495.6Z" class="gs"/>
<polygon points="1441.8,574.6 1434.2,570.3 1448.8,567.6" fill="#0a8950" stroke="#0a8950" stroke-width=".8"/>
<polygon points="1441.8,574.6 1448.8,567.6 1456.4,571.9" fill="#0a8950" stroke="#0a8950" stroke-width=".8"/>
<path d="M1441.8 574.6L1434.2 570.3L1448.8 567.6L1456.4 571.9Z" class="gl"/>
<polygon points="1427.3,577.3 1419.6,573.0 1434.2,570.3" fill="#0a8950" stroke="#0a8950" stroke-width=".8"/>
<polygon points="1427.3,577.3 1434.2,570.3 1441.8,574.6" fill="#0a8950" stroke="#0a8950" stroke-width=".8"/>
<path d="M1427.3 577.3L1419.6 573.0L1434.2 570.3L1441.8 574.6Z" class="gl"/>
<polygon points="1398.2,582.7 1390.5,578.4 1419.6,573.0" fill="#0a8950" stroke="#0a8950" stroke-width=".8"/>
<polygon points="1398.2,582.7 1419.6,573.0 1427.3,577.3" fill="#0a8950" stroke="#0a8950" stroke-width=".8"/>
<path d="M1398.2 582.7L1390.5 578.4L1419.6 573.0L1427.3 577.3Z" class="gl"/>
<polygon points="1369.0,588.1 1361.4,583.8 1390.5,578.4" fill="#0a8950" stroke="#0a8950" stroke-width=".8"/>
<polygon points="1369.0,588.1 1390.5,578.4 1398.2,582.7" fill="#0a8950" stroke="#0a8950" stroke-width=".8"/>
<path d="M1369.0 588.1L1361.4 583.8L1390.5 578.4L1398.2 582.7Z" class="gl"/>
<polygon points="1339.9,593.5 1332.3,589.2 1361.4,583.8" fill="#0a8950" stroke="#0a8950" stroke-width=".8"/>
<polygon points="1339.9,593.5 1361.4,583.8 1369.0,588.1" fill="#0a8950" stroke="#0a8950" stroke-width=".8"/>
<path d="M1339.9 593.5L1332.3 589.2L1361.4 583.8L1369.0 588.1Z" class="gl"/>
<polygon points="1325.4,596.2 1317.7,591.9 1332.3,589.2" fill="#0a8950" stroke="#0a8950" stroke-width=".8"/>
<polygon points="1325.4,596.2 1332.3,589.2 1339.9,593.5" fill="#0a8950" stroke="#0a8950" stroke-width=".8"/>
<path d="M1325.4 596.2L1317.7 591.9L1332.3 589.2L1339.9 593.5Z" class="gl"/>
<polygon points="1310.8,598.9 1303.2,594.6 1317.7,591.9" fill="#0a8950" stroke="#0a8950" stroke-width=".8"/>
<polygon points="1310.8,598.9 1317.7,591.9 1325.4,596.2" fill="#0a8950" stroke="#0a8950" stroke-width=".8"/>
<path d="M1310.8 598.9L1303.2 594.6L1317.7 591.9L1325.4 596.2Z" class="gl"/>
<polygon points="1267.1,607.0 1259.5,602.7 1303.2,594.6" fill="#0a8950" stroke="#0a8950" stroke-width=".8"/>
<polygon points="1267.1,607.0 1303.2,594.6 1310.8,598.9" fill="#0a8950" stroke="#0a8950" stroke-width=".8"/>
<path d="M1267.1 607.0L1259.5 602.7L1303.2 594.6L1310.8 598.9Z" class="gl"/>
<polygon points="1223.4,615.1 1215.8,610.8 1259.5,602.7" fill="#0a8950" stroke="#0a8950" stroke-width=".8"/>
<polygon points="1223.4,615.1 1259.5,602.7 1267.1,607.0" fill="#0a8950" stroke="#0a8950" stroke-width=".8"/>
<path d="M1223.4 615.1L1215.8 610.8L1259.5 602.7L1267.1 607.0Z" class="gl"/>
<polygon points="1514.5,463.2 1508.8,445.3 1514.6,488.1" fill="url(#s253)" stroke="url(#s253)" stroke-width=".8"/>
<polygon points="1514.5,463.2 1514.6,488.1 1520.4,476.7" fill="url(#s254)" stroke="url(#s254)" stroke-width=".8"/>
<path d="M1514.5 463.2L1508.8 445.3L1514.6 488.1L1520.4 476.7Z" class="gs"/>
<polygon points="1505.8,464.8 1500.1,432.4 1508.8,445.3" fill="url(#s255)" stroke="url(#s255)" stroke-width=".8"/>
<polygon points="1505.8,464.8 1508.8,445.3 1514.5,463.2" fill="url(#s256)" stroke="url(#s256)" stroke-width=".8"/>
<path d="M1505.8 464.8L1500.1 432.4L1508.8 445.3L1514.5 463.2Z" class="gs"/>
<polygon points="1500.0,473.2 1494.2,462.6 1500.1,432.4" fill="url(#s257)" stroke="url(#s257)" stroke-width=".8"/>
<polygon points="1500.0,473.2 1500.1,432.4 1505.8,464.8" fill="url(#s258)" stroke="url(#s258)" stroke-width=".8"/>
<path d="M1500.0 473.2L1494.2 462.6L1500.1 432.4L1505.8 464.8Z" class="gs"/>
<polygon points="1491.2,474.8 1485.5,493.5 1494.2,462.6" fill="url(#s259)" stroke="url(#s259)" stroke-width=".8"/>
<polygon points="1491.2,474.8 1494.2,462.6 1500.0,473.2" fill="url(#s260)" stroke="url(#s260)" stroke-width=".8"/>
<path d="M1491.2 474.8L1485.5 493.5L1494.2 462.6L1500.0 473.2Z" class="gs"/>
<polygon points="1479.6,476.9 1473.9,495.6 1485.5,493.5" fill="url(#s261)" stroke="url(#s261)" stroke-width=".8"/>
<polygon points="1479.6,476.9 1485.5,493.5 1491.2,474.8" fill="url(#s262)" stroke="url(#s262)" stroke-width=".8"/>
<path d="M1479.6 476.9L1473.9 495.6L1485.5 493.5L1491.2 474.8Z" class="gs"/>
<polygon points="1462.1,589.7 1456.4,571.9 1473.9,495.6" fill="url(#s263)" stroke="url(#s263)" stroke-width=".8"/>
<polygon points="1462.1,589.7 1473.9,495.6 1479.6,476.9" fill="url(#s264)" stroke="url(#s264)" stroke-width=".8"/>
<path d="M1462.1 589.7L1456.4 571.9L1473.9 495.6L1479.6 476.9Z" class="gs"/>
<polygon points="1447.6,592.4 1441.8,574.6 1456.4,571.9" fill="url(#s265)" stroke="url(#s265)" stroke-width=".8"/>
<polygon points="1447.6,592.4 1456.4,571.9 1462.1,589.7" fill="url(#s266)" stroke="url(#s266)" stroke-width=".8"/>
<path d="M1447.6 592.4L1441.8 574.6L1456.4 571.9L1462.1 589.7Z" class="gs"/>
<polygon points="1433.0,595.1 1427.3,577.3 1441.8,574.6" fill="url(#s267)" stroke="url(#s267)" stroke-width=".8"/>
<polygon points="1433.0,595.1 1441.8,574.6 1447.6,592.4" fill="url(#s268)" stroke="url(#s268)" stroke-width=".8"/>
<path d="M1433.0 595.1L1427.3 577.3L1441.8 574.6L1447.6 592.4Z" class="gs"/>
<polygon points="1403.9,600.5 1398.2,582.7 1427.3,577.3" fill="url(#s269)" stroke="url(#s269)" stroke-width=".8"/>
<polygon points="1403.9,600.5 1427.3,577.3 1433.0,595.1" fill="url(#s270)" stroke="url(#s270)" stroke-width=".8"/>
<path d="M1403.9 600.5L1398.2 582.7L1427.3 577.3L1433.0 595.1Z" class="gs"/>
<polygon points="1374.8,605.9 1369.0,588.1 1398.2,582.7" fill="url(#s271)" stroke="url(#s271)" stroke-width=".8"/>
<polygon points="1374.8,605.9 1398.2,582.7 1403.9,600.5" fill="url(#s272)" stroke="url(#s272)" stroke-width=".8"/>
<path d="M1374.8 605.9L1369.0 588.1L1398.2 582.7L1403.9 600.5Z" class="gs"/>
<polygon points="1345.6,611.3 1339.9,593.5 1369.0,588.1" fill="url(#s273)" stroke="url(#s273)" stroke-width=".8"/>
<polygon points="1345.6,611.3 1369.0,588.1 1374.8,605.9" fill="url(#s274)" stroke="url(#s274)" stroke-width=".8"/>
<path d="M1345.6 611.3L1339.9 593.5L1369.0 588.1L1374.8 605.9Z" class="gs"/>
<polygon points="1331.1,614.0 1325.4,596.2 1339.9,593.5" fill="url(#s275)" stroke="url(#s275)" stroke-width=".8"/>
<polygon points="1331.1,614.0 1339.9,593.5 1345.6,611.3" fill="url(#s276)" stroke="url(#s276)" stroke-width=".8"/>
<path d="M1331.1 614.0L1325.4 596.2L1339.9 593.5L1345.6 611.3Z" class="gs"/>
<polygon points="1316.5,616.7 1310.8,598.9 1325.4,596.2" fill="url(#s277)" stroke="url(#s277)" stroke-width=".8"/>
<polygon points="1316.5,616.7 1325.4,596.2 1331.1,614.0" fill="url(#s278)" stroke="url(#s278)" stroke-width=".8"/>
<path d="M1316.5 616.7L1310.8 598.9L1325.4 596.2L1331.1 614.0Z" class="gs"/>
<polygon points="1272.8,624.8 1267.1,607.0 1310.8,598.9" fill="url(#s279)" stroke="url(#s279)" stroke-width=".8"/>
<polygon points="1272.8,624.8 1310.8,598.9 1316.5,616.7" fill="url(#s280)" stroke="url(#s280)" stroke-width=".8"/>
<path d="M1272.8 624.8L1267.1 607.0L1310.8 598.9L1316.5 616.7Z" class="gs"/>
<polygon points="1229.2,632.9 1223.4,615.1 1267.1,607.0" fill="url(#s281)" stroke="url(#s281)" stroke-width=".8"/>
<polygon points="1229.2,632.9 1267.1,607.0 1272.8,624.8" fill="url(#s282)" stroke="url(#s282)" stroke-width=".8"/>
<path d="M1229.2 632.9L1223.4 615.1L1267.1 607.0L1272.8 624.8Z" class="gs"/>
<polygon points="1520.2,495.6 1514.5,463.2 1520.4,476.7" fill="url(#s283)" stroke="url(#s283)" stroke-width=".8"/>
<polygon points="1520.2,495.6 1520.4,476.7 1526.1,479.9" fill="url(#s284)" stroke="url(#s284)" stroke-width=".8"/>
<path d="M1520.2 495.6L1514.5 463.2L1520.4 476.7L1526.1 479.9Z" class="gs"/>
<polygon points="1511.5,497.2 1505.8,464.8 1514.5,463.2" fill="url(#s285)" stroke="url(#s285)" stroke-width=".8"/>
<polygon points="1511.5,497.2 1514.5,463.2 1520.2,495.6" fill="url(#s286)" stroke="url(#s286)" stroke-width=".8"/>
<path d="M1511.5 497.2L1505.8 464.8L1514.5 463.2L1520.2 495.6Z" class="gs"/>
<polygon points="1505.7,498.3 1500.0,473.2 1505.8,464.8" fill="url(#s287)" stroke="url(#s287)" stroke-width=".8"/>
<polygon points="1505.7,498.3 1505.8,464.8 1511.5,497.2" fill="url(#s288)" stroke="url(#s288)" stroke-width=".8"/>
<path d="M1505.7 498.3L1500.0 473.2L1505.8 464.8L1511.5 497.2Z" class="gs"/>
<polygon points="1497.0,499.9 1491.2,474.8 1500.0,473.2" fill="url(#s289)" stroke="url(#s289)" stroke-width=".8"/>
<polygon points="1497.0,499.9 1500.0,473.2 1505.7,498.3" fill="url(#s290)" stroke="url(#s290)" stroke-width=".8"/>
<path d="M1497.0 499.9L1491.2 474.8L1500.0 473.2L1505.7 498.3Z" class="gs"/>
<polygon points="1485.3,502.1 1479.6,476.9 1491.2,474.8" fill="url(#s291)" stroke="url(#s291)" stroke-width=".8"/>
<polygon points="1485.3,502.1 1491.2,474.8 1497.0,499.9" fill="url(#s292)" stroke="url(#s292)" stroke-width=".8"/>
<path d="M1485.3 502.1L1479.6 476.9L1491.2 474.8L1497.0 499.9Z" class="gs"/>
<polygon points="1467.8,629.5 1462.1,589.7 1479.6,476.9" fill="url(#s293)" stroke="url(#s293)" stroke-width=".8"/>
<polygon points="1467.8,629.5 1479.6,476.9 1485.3,502.1" fill="url(#s294)" stroke="url(#s294)" stroke-width=".8"/>
<path d="M1467.8 629.5L1462.1 589.7L1479.6 476.9L1485.3 502.1Z" class="gs"/>
<polygon points="1453.3,632.2 1447.6,592.4 1462.1,589.7" fill="url(#s295)" stroke="url(#s295)" stroke-width=".8"/>
<polygon points="1453.3,632.2 1462.1,589.7 1467.8,629.5" fill="url(#s296)" stroke="url(#s296)" stroke-width=".8"/>
<path d="M1453.3 632.2L1447.6 592.4L1462.1 589.7L1467.8 629.5Z" class="gs"/>
<polygon points="1438.7,634.9 1433.0,595.1 1447.6,592.4" fill="url(#s297)" stroke="url(#s297)" stroke-width=".8"/>
<polygon points="1438.7,634.9 1447.6,592.4 1453.3,632.2" fill="url(#s298)" stroke="url(#s298)" stroke-width=".8"/>
<path d="M1438.7 634.9L1433.0 595.1L1447.6 592.4L1453.3 632.2Z" class="gs"/>
<polygon points="1409.6,640.3 1403.9,600.5 1433.0,595.1" fill="url(#s299)" stroke="url(#s299)" stroke-width=".8"/>
<polygon points="1409.6,640.3 1433.0,595.1 1438.7,634.9" fill="url(#s300)" stroke="url(#s300)" stroke-width=".8"/>
<path d="M1409.6 640.3L1403.9 600.5L1433.0 595.1L1438.7 634.9Z" class="gs"/>
<polygon points="1380.5,645.7 1374.8,605.9 1403.9,600.5" fill="url(#s301)" stroke="url(#s301)" stroke-width=".8"/>
<polygon points="1380.5,645.7 1403.9,600.5 1409.6,640.3" fill="url(#s302)" stroke="url(#s302)" stroke-width=".8"/>
<path d="M1380.5 645.7L1374.8 605.9L1403.9 600.5L1409.6 640.3Z" class="gs"/>
<polygon points="1351.4,651.1 1345.6,611.3 1374.8,605.9" fill="url(#s303)" stroke="url(#s303)" stroke-width=".8"/>
<polygon points="1351.4,651.1 1374.8,605.9 1380.5,645.7" fill="url(#s304)" stroke="url(#s304)" stroke-width=".8"/>
<path d="M1351.4 651.1L1345.6 611.3L1374.8 605.9L1380.5 645.7Z" class="gs"/>
<polygon points="1336.8,653.8 1331.1,614.0 1345.6,611.3" fill="url(#s305)" stroke="url(#s305)" stroke-width=".8"/>
<polygon points="1336.8,653.8 1345.6,611.3 1351.4,651.1" fill="url(#s306)" stroke="url(#s306)" stroke-width=".8"/>
<path d="M1336.8 653.8L1331.1 614.0L1345.6 611.3L1351.4 651.1Z" class="gs"/>
<polygon points="1322.2,641.9 1316.5,616.7 1331.1,614.0" fill="url(#s307)" stroke="url(#s307)" stroke-width=".8"/>
<polygon points="1322.2,641.9 1331.1,614.0 1336.8,653.8" fill="url(#s308)" stroke="url(#s308)" stroke-width=".8"/>
<path d="M1322.2 641.9L1316.5 616.7L1331.1 614.0L1336.8 653.8Z" class="gs"/>
<polygon points="1278.6,650.0 1272.8,624.8 1316.5,616.7" fill="url(#s309)" stroke="url(#s309)" stroke-width=".8"/>
<polygon points="1278.6,650.0 1316.5,616.7 1322.2,641.9" fill="url(#s310)" stroke="url(#s310)" stroke-width=".8"/>
<path d="M1278.6 650.0L1272.8 624.8L1316.5 616.7L1322.2 641.9Z" class="gs"/>
<polygon points="1234.9,658.1 1229.2,632.9 1272.8,624.8" fill="url(#s311)" stroke="url(#s311)" stroke-width=".8"/>
<polygon points="1234.9,658.1 1272.8,624.8 1278.6,650.0" fill="url(#s312)" stroke="url(#s312)" stroke-width=".8"/>
<path d="M1234.9 658.1L1229.2 632.9L1272.8 624.8L1278.6 650.0Z" class="gs"/>
<polygon points="1527.9,602.1 1520.2,495.6 1526.1,479.9" fill="url(#s313)" stroke="url(#s313)" stroke-width=".8"/>
<polygon points="1527.9,602.1 1526.1,479.9 1533.7,586.4" fill="url(#s314)" stroke="url(#s314)" stroke-width=".8"/>
<path d="M1527.9 602.1L1520.2 495.6L1526.1 479.9L1533.7 586.4Z" class="gs"/>
<polygon points="1519.1,603.8 1511.5,497.2 1520.2,495.6" fill="url(#s315)" stroke="url(#s315)" stroke-width=".8"/>
<polygon points="1519.1,603.8 1520.2,495.6 1527.9,602.1" fill="url(#s316)" stroke="url(#s316)" stroke-width=".8"/>
<path d="M1519.1 603.8L1511.5 497.2L1520.2 495.6L1527.9 602.1Z" class="gs"/>
<polygon points="1513.3,604.8 1505.7,498.3 1511.5,497.2" fill="url(#s317)" stroke="url(#s317)" stroke-width=".8"/>
<polygon points="1513.3,604.8 1511.5,497.2 1519.1,603.8" fill="url(#s318)" stroke="url(#s318)" stroke-width=".8"/>
<path d="M1513.3 604.8L1505.7 498.3L1511.5 497.2L1519.1 603.8Z" class="gs"/>
<polygon points="1504.6,606.4 1497.0,499.9 1505.7,498.3" fill="url(#s319)" stroke="url(#s319)" stroke-width=".8"/>
<polygon points="1504.6,606.4 1505.7,498.3 1513.3,604.8" fill="url(#s320)" stroke="url(#s320)" stroke-width=".8"/>
<path d="M1504.6 606.4L1497.0 499.9L1505.7 498.3L1513.3 604.8Z" class="gs"/>
<polygon points="1492.9,608.6 1485.3,502.1 1497.0,499.9" fill="url(#s321)" stroke="url(#s321)" stroke-width=".8"/>
<polygon points="1492.9,608.6 1497.0,499.9 1504.6,606.4" fill="url(#s322)" stroke="url(#s322)" stroke-width=".8"/>
<path d="M1492.9 608.6L1485.3 502.1L1497.0 499.9L1504.6 606.4Z" class="gs"/>
<polygon points="1475.5,714.1 1467.8,629.5 1485.3,502.1" fill="url(#s323)" stroke="url(#s323)" stroke-width=".8"/>
<polygon points="1475.5,714.1 1485.3,502.1 1492.9,608.6" fill="url(#s324)" stroke="url(#s324)" stroke-width=".8"/>
<path d="M1475.5 714.1L1467.8 629.5L1485.3 502.1L1492.9 608.6Z" class="gs"/>
<polygon points="1460.9,716.8 1453.3,632.2 1467.8,629.5" fill="url(#s325)" stroke="url(#s325)" stroke-width=".8"/>
<polygon points="1460.9,716.8 1467.8,629.5 1475.5,714.1" fill="url(#s326)" stroke="url(#s326)" stroke-width=".8"/>
<path d="M1460.9 716.8L1453.3 632.2L1467.8 629.5L1475.5 714.1Z" class="gs"/>
<polygon points="1446.3,719.5 1438.7,634.9 1453.3,632.2" fill="url(#s327)" stroke="url(#s327)" stroke-width=".8"/>
<polygon points="1446.3,719.5 1453.3,632.2 1460.9,716.8" fill="url(#s328)" stroke="url(#s328)" stroke-width=".8"/>
<path d="M1446.3 719.5L1438.7 634.9L1453.3 632.2L1460.9 716.8Z" class="gs"/>
<polygon points="1417.2,724.9 1409.6,640.3 1438.7,634.9" fill="url(#s329)" stroke="url(#s329)" stroke-width=".8"/>
<polygon points="1417.2,724.9 1438.7,634.9 1446.3,719.5" fill="url(#s330)" stroke="url(#s330)" stroke-width=".8"/>
<path d="M1417.2 724.9L1409.6 640.3L1438.7 634.9L1446.3 719.5Z" class="gs"/>
<polygon points="1388.1,730.3 1380.5,645.7 1409.6,640.3" fill="url(#s331)" stroke="url(#s331)" stroke-width=".8"/>
<polygon points="1388.1,730.3 1409.6,640.3 1417.2,724.9" fill="url(#s332)" stroke="url(#s332)" stroke-width=".8"/>
<path d="M1388.1 730.3L1380.5 645.7L1409.6 640.3L1417.2 724.9Z" class="gs"/>
<polygon points="1359.0,735.7 1351.4,651.1 1380.5,645.7" fill="url(#s333)" stroke="url(#s333)" stroke-width=".8"/>
<polygon points="1359.0,735.7 1380.5,645.7 1388.1,730.3" fill="url(#s334)" stroke="url(#s334)" stroke-width=".8"/>
<path d="M1359.0 735.7L1351.4 651.1L1380.5 645.7L1388.1 730.3Z" class="gs"/>
<polygon points="1344.4,738.4 1336.8,653.8 1351.4,651.1" fill="url(#s335)" stroke="url(#s335)" stroke-width=".8"/>
<polygon points="1344.4,738.4 1351.4,651.1 1359.0,735.7" fill="url(#s336)" stroke="url(#s336)" stroke-width=".8"/>
<path d="M1344.4 738.4L1336.8 653.8L1351.4 651.1L1359.0 735.7Z" class="gs"/>
<polygon points="1329.9,653.5 1322.2,641.9 1336.8,653.8" fill="url(#s337)" stroke="url(#s337)" stroke-width=".8"/>
<polygon points="1329.9,653.5 1336.8,653.8 1344.4,738.4" fill="url(#s338)" stroke="url(#s338)" stroke-width=".8"/>
<path d="M1329.9 653.5L1322.2 641.9L1336.8 653.8L1344.4 738.4Z" class="gs"/>
<polygon points="1286.2,661.6 1278.6,650.0 1322.2,641.9" fill="url(#s339)" stroke="url(#s339)" stroke-width=".8"/>
<polygon points="1286.2,661.6 1322.2,641.9 1329.9,653.5" fill="url(#s340)" stroke="url(#s340)" stroke-width=".8"/>
<path d="M1286.2 661.6L1278.6 650.0L1322.2 641.9L1329.9 653.5Z" class="gl"/>
<polygon points="1242.5,669.7 1234.9,658.1 1278.6,650.0" fill="url(#s341)" stroke="url(#s341)" stroke-width=".8"/>
<polygon points="1242.5,669.7 1278.6,650.0 1286.2,661.6" fill="url(#s342)" stroke="url(#s342)" stroke-width=".8"/>
<path d="M1242.5 669.7L1234.9 658.1L1278.6 650.0L1286.2 661.6Z" class="gl"/>
<path class="bx" d="M1074.7 254.0 L1242.5 348.3 L1533.7 294.3 M1242.5 348.3 L1242.5 757.3 M1074.7 663.0 L1242.5 757.3 L1533.7 703.3 M1533.7 703.3 L1533.7 294.3"/>
</svg>
<div class="a" id="tbl" style="left:0;top:0">
<div class="cell" style="left:193px;top:141px;width:37px;height:36px;line-height:36px;background:#80b6c9;padding-left:2px;"><b>8,0</b></div>
<div class="cell" style="left:230px;top:141px;width:38px;height:36px;line-height:36px;background:linear-gradient(90deg,#80bac5,#80bec1);"><b>8,5</b></div>
<div class="cell" style="left:268px;top:141px;width:37px;height:36px;line-height:36px;background:linear-gradient(90deg,#80c6b9,#80cab5);"><b>10,0</b></div>
<div class="cell" style="left:305px;top:141px;width:38px;height:36px;line-height:36px;background:#80d2ad;"><b>11,0</b></div>
<div class="cell" style="left:343px;top:141px;width:38px;height:36px;line-height:36px;background:#80d2ad;"><b>11,0</b></div>
<div class="cell" style="left:381px;top:141px;width:38px;height:36px;line-height:36px;background:linear-gradient(90deg,#80d5aa,#80dea1);"><b>11,5</b></div>
<div class="cell" style="left:419px;top:141px;width:37px;height:36px;line-height:36px;background:linear-gradient(90deg,#80f788,#89f680);"><b>16,0</b></div>
<div class="cell" style="left:456px;top:141px;width:38px;height:36px;line-height:36px;background:linear-gradient(90deg,#a5da80,#b3cc80);"><b>21,0</b></div>
<div class="cell" style="left:494px;top:141px;width:38px;height:36px;line-height:36px;background:linear-gradient(90deg,#c3bc80,#cab580);"><b>24,0</b></div>
<div class="cell" style="left:532px;top:141px;width:37px;height:36px;line-height:36px;background:#d2ad80;"><b>25,0</b></div>
<div class="cell" style="left:569px;top:141px;width:38px;height:36px;line-height:36px;background:#d2ad80;"><b>25,0</b></div>
<div class="cell" style="left:607px;top:141px;width:38px;height:36px;line-height:36px;background:#d2ad80;"><b>25,0</b></div>
<div class="cell" style="left:645px;top:141px;width:37px;height:36px;line-height:36px;background:#d2ad80;"><b>25,0</b></div>
<div class="cell" style="left:682px;top:141px;width:38px;height:36px;line-height:36px;background:#dba480;"><b>26,0</b></div>
<div class="cell" style="left:720px;top:141px;width:38px;height:36px;line-height:36px;background:#dba480;"><b>26,0</b></div>
<div class="cell" style="left:758px;top:141px;width:37px;height:36px;line-height:36px;background:#dba480;"><b>26,0</b></div>
<div class="cell" style="left:795px;top:141px;width:38px;height:36px;line-height:36px;background:#dba480;"><b>26,0</b></div>
<div class="cell" style="left:833px;top:141px;width:38px;height:36px;line-height:36px;background:#dba480;"><b>26,0</b></div>
<div class="cell" style="left:871px;top:141px;width:37px;height:36px;line-height:36px;background:#dba480;"><b>26,0</b></div>
<div class="cell" style="left:908px;top:141px;width:38px;height:36px;line-height:36px;background:#dba480;"><b>26,0</b></div>
<div class="hd" style="left:946px;top:141px;width:57px;height:36px;line-height:33px">100</div>
<div class="cell" style="left:193px;top:177px;width:37px;height:38px;line-height:36px;background:#80b6c9;padding-left:2px;"><b>8,0</b></div>
<div class="cell" style="left:230px;top:177px;width:38px;height:38px;line-height:36px;background:linear-gradient(90deg,#80bac5,#80bec1);"><b>8,5</b></div>
<div class="cell" style="left:268px;top:177px;width:37px;height:38px;line-height:36px;background:linear-gradient(90deg,#80c6b9,#80cab5);"><b>10,0</b></div>
<div class="cell" style="left:305px;top:177px;width:38px;height:38px;line-height:36px;background:#80d2ad;"><b>11,0</b></div>
<div class="cell" style="left:343px;top:177px;width:38px;height:38px;line-height:36px;background:#80d2ad;"><b>11,0</b></div>
<div class="cell" style="left:381px;top:177px;width:38px;height:38px;line-height:36px;background:linear-gradient(90deg,#80d5aa,#80dea1);"><b>11,5</b></div>
<div class="cell" style="left:419px;top:177px;width:37px;height:38px;line-height:36px;background:linear-gradient(90deg,#80f788,#89f680);"><b>16,0</b></div>
<div class="cell" style="left:456px;top:177px;width:38px;height:38px;line-height:36px;background:linear-gradient(90deg,#a5da80,#b3cc80);"><b>21,0</b></div>
<div class="cell" style="left:494px;top:177px;width:38px;height:38px;line-height:36px;background:linear-gradient(90deg,#c3bc80,#cab580);"><b>24,0</b></div>
<div class="cell" style="left:532px;top:177px;width:37px;height:38px;line-height:36px;background:#d2ad80;"><b>25,0</b></div>
<div class="cell" style="left:569px;top:177px;width:38px;height:38px;line-height:36px;background:#d2ad80;"><b>25,0</b></div>
<div class="cell" style="left:607px;top:177px;width:38px;height:38px;line-height:36px;background:#d2ad80;"><b>25,0</b></div>
<div class="cell" style="left:645px;top:177px;width:37px;height:38px;line-height:36px;background:#d2ad80;"><b>25,0</b></div>
<div class="cell" style="left:682px;top:177px;width:38px;height:38px;line-height:36px;background:#dba480;"><b>26,0</b></div>
<div class="cell" style="left:720px;top:177px;width:38px;height:38px;line-height:36px;background:#dba480;"><b>26,0</b></div>
<div class="cell" style="left:758px;top:177px;width:37px;height:38px;line-height:36px;background:#dba480;"><b>26,0</b></div>
<div class="cell" style="left:795px;top:177px;width:38px;height:38px;line-height:36px;background:#dba480;"><b>26,0</b></div>
<div class="cell" style="left:833px;top:177px;width:38px;height:38px;line-height:36px;background:#dba480;"><b>26,0</b></div>
<div class="cell" style="left:871px;top:177px;width:37px;height:38px;line-height:36px;background:#dba480;"><b>26,0</b></div>
<div class="cell" style="left:908px;top:177px;width:38px;height:38px;line-height:36px;background:#dba480;"><b>26,0</b></div>
<div class="hd" style="left:946px;top:177px;width:57px;height:38px;line-height:35px">85</div>
<div class="cell" style="left:193px;top:215px;width:37px;height:37px;line-height:35px;background:linear-gradient(90deg,#80b6c9,#80b7c8);padding-left:2px;"><i style="background:linear-gradient(90deg,#80acd3,#80b1ce)"></i><b>8,0</b></div>
<div class="cell" style="left:230px;top:215px;width:38px;height:37px;line-height:35px;background:linear-gradient(90deg,#80bac5,#80bec1);"><i style="background:linear-gradient(90deg,#80b4cb,#80bdc2)"></i><b>8,5</b></div>
<div class="cell" style="left:268px;top:215px;width:37px;height:37px;line-height:35px;background:linear-gradient(90deg,#80c6b9,#80cab5);"><b>10,0</b></div>
<div class="cell" style="left:305px;top:215px;width:38px;height:37px;line-height:35px;background:#80d2ad;"><b>11,0</b></div>
<div class="cell" style="left:343px;top:215px;width:38px;height:37px;line-height:35px;background:#80d2ad;"><b>11,0</b></div>
<div class="cell" style="left:381px;top:215px;width:38px;height:37px;line-height:35px;background:linear-gradient(90deg,#80d5aa,#80dea1);"><b>11,5</b></div>
<div class="cell" style="left:419px;top:215px;width:37px;height:37px;line-height:35px;background:linear-gradient(90deg,#80f788,#89f680);"><b>16,0</b></div>
<div class="cell" style="left:456px;top:215px;width:38px;height:37px;line-height:35px;background:linear-gradient(90deg,#a5da80,#b3cc80);"><b>21,0</b></div>
<div class="cell" style="left:494px;top:215px;width:38px;height:37px;line-height:35px;background:linear-gradient(90deg,#c3bc80,#cab580);"><b>24,0</b></div>
<div class="cell" style="left:532px;top:215px;width:37px;height:37px;line-height:35px;background:#d2ad80;"><b>25,0</b></div>
<div class="cell" style="left:569px;top:215px;width:38px;height:37px;line-height:35px;background:#d2ad80;"><b>25,0</b></div>
<div class="cell" style="left:607px;top:215px;width:38px;height:37px;line-height:35px;background:#d2ad80;"><b>25,0</b></div>
<div class="cell" style="left:645px;top:215px;width:37px;height:37px;line-height:35px;background:#d2ad80;"><b>25,0</b></div>
<div class="cell" style="left:682px;top:215px;width:38px;height:37px;line-height:35px;background:#dba480;"><b>26,0</b></div>
<div class="cell" style="left:720px;top:215px;width:38px;height:37px;line-height:35px;background:#dba480;"><b>26,0</b></div>
<div class="cell" style="left:758px;top:215px;width:37px;height:37px;line-height:35px;background:#dba480;"><b>26,0</b></div>
<div class="cell" style="left:795px;top:215px;width:38px;height:37px;line-height:35px;background:#dba480;"><b>26,0</b></div>
<div class="cell" style="left:833px;top:215px;width:38px;height:37px;line-height:35px;background:#dba480;"><b>26,0</b></div>
<div class="cell" style="left:871px;top:215px;width:37px;height:37px;line-height:35px;background:#dba480;"><b>26,0</b></div>
<div class="cell" style="left:908px;top:215px;width:38px;height:37px;line-height:35px;background:#dba480;"><b>26,0</b></div>
<div class="hd" style="left:946px;top:215px;width:57px;height:37px;line-height:34px">70</div>
<div class="cell" style="left:193px;top:252px;width:37px;height:38px;line-height:36px;background:linear-gradient(90deg,#808af5,#8090ef);padding-left:2px;"><i style="background:linear-gradient(90deg,#8080ff,#8089f6)"></i><b>2,0</b></div>
<div class="cell" style="left:230px;top:252px;width:38px;height:38px;line-height:36px;background:linear-gradient(90deg,#80aed1,#80b7c8);"><i style="background:linear-gradient(90deg,#80a8d7,#80b6c9)"></i><b>7,5</b></div>
<div class="cell" style="left:268px;top:252px;width:37px;height:38px;line-height:36px;background:linear-gradient(90deg,#80c5ba,#80cab5);"><b>10,0</b></div>
<div class="cell" style="left:305px;top:252px;width:38px;height:38px;line-height:36px;background:#80d2ad;"><b>11,0</b></div>
<div class="cell" style="left:343px;top:252px;width:38px;height:38px;line-height:36px;background:#80d2ad;"><b>11,0</b></div>
<div class="cell" style="left:381px;top:252px;width:38px;height:38px;line-height:36px;background:linear-gradient(90deg,#80d5aa,#80dea1);"><b>11,5</b></div>
<div class="cell" style="left:419px;top:252px;width:37px;height:38px;line-height:36px;background:linear-gradient(90deg,#80f788,#89f680);"><b>16,0</b></div>
<div class="cell" style="left:456px;top:252px;width:38px;height:38px;line-height:36px;background:linear-gradient(90deg,#a5da80,#b3cc80);"><b>21,0</b></div>
<div class="cell" style="left:494px;top:252px;width:38px;height:38px;line-height:36px;background:linear-gradient(90deg,#c3bc80,#cab580);"><b>24,0</b></div>
<div class="cell" style="left:532px;top:252px;width:37px;height:38px;line-height:36px;background:#d2ad80;"><b>25,0</b></div>
<div class="cell" style="left:569px;top:252px;width:38px;height:38px;line-height:36px;background:#d2ad80;"><b>25,0</b></div>
<div class="cell" style="left:607px;top:252px;width:38px;height:38px;line-height:36px;background:#d2ad80;"><b>25,0</b></div>
<div class="cell" style="left:645px;top:252px;width:37px;height:38px;line-height:36px;background:#d2ad80;"><b>25,0</b></div>
<div class="cell" style="left:682px;top:252px;width:38px;height:38px;line-height:36px;background:#dba480;"><b>26,0</b></div>
<div class="cell" style="left:720px;top:252px;width:38px;height:38px;line-height:36px;background:#dba480;"><b>26,0</b></div>
<div class="cell" style="left:758px;top:252px;width:37px;height:38px;line-height:36px;background:#dba480;"><b>26,0</b></div>
<div class="cell" style="left:795px;top:252px;width:38px;height:38px;line-height:36px;background:#dba480;"><b>26,0</b></div>
<div class="cell" style="left:833px;top:252px;width:38px;height:38px;line-height:36px;background:#dba480;"><b>26,0</b></div>
<div class="cell" style="left:871px;top:252px;width:37px;height:38px;line-height:36px;background:#dba480;"><b>26,0</b></div>
<div class="cell" style="left:908px;top:252px;width:38px;height:38px;line-height:36px;background:#dba480;"><b>26,0</b></div>
<div class="hd" style="left:946px;top:252px;width:57px;height:38px;line-height:35px">65</div>
<div class="cell" style="left:193px;top:290px;width:37px;height:38px;line-height:36px;background:linear-gradient(90deg,#8080ff,#8089f6);padding-left:2px;"><b>2,0</b></div>
<div class="cell" style="left:230px;top:290px;width:38px;height:38px;line-height:36px;background:linear-gradient(90deg,#80a8d7,#80b6c9);"><b>7,5</b></div>
<div class="cell" style="left:268px;top:290px;width:37px;height:38px;line-height:36px;background:linear-gradient(90deg,#80c4bb,#80cab5);"><b>10,0</b></div>
<div class="cell" style="left:305px;top:290px;width:38px;height:38px;line-height:36px;background:#80d2ad;"><b>11,0</b></div>
<div class="cell" style="left:343px;top:290px;width:38px;height:38px;line-height:36px;background:#80d2ad;"><b>11,0</b></div>
<div class="cell" style="left:381px;top:290px;width:38px;height:38px;line-height:36px;background:linear-gradient(90deg,#80d5aa,#80dea1);"><b>11,5</b></div>
<div class="cell" style="left:419px;top:290px;width:37px;height:38px;line-height:36px;background:linear-gradient(90deg,#80f788,#89f680);"><b>16,0</b></div>
<div class="cell" style="left:456px;top:290px;width:38px;height:38px;line-height:36px;background:linear-gradient(90deg,#a5da80,#b3cc80);"><b>21,0</b></div>
<div class="cell" style="left:494px;top:290px;width:38px;height:38px;line-height:36px;background:linear-gradient(90deg,#c3bc80,#cab580);"><b>24,0</b></div>
<div class="cell" style="left:532px;top:290px;width:37px;height:38px;line-height:36px;background:#d2ad80;"><b>25,0</b></div>
<div class="cell" style="left:569px;top:290px;width:38px;height:38px;line-height:36px;background:#d2ad80;"><b>25,0</b></div>
<div class="cell" style="left:607px;top:290px;width:38px;height:38px;line-height:36px;background:#d2ad80;"><b>25,0</b></div>
<div class="cell" style="left:645px;top:290px;width:37px;height:38px;line-height:36px;background:#d2ad80;"><b>25,0</b></div>
<div class="cell" style="left:682px;top:290px;width:38px;height:38px;line-height:36px;background:#dba480;"><b>26,0</b></div>
<div class="cell" style="left:720px;top:290px;width:38px;height:38px;line-height:36px;background:#dba480;"><b>26,0</b></div>
<div class="cell" style="left:758px;top:290px;width:37px;height:38px;line-height:36px;background:#dba480;"><b>26,0</b></div>
<div class="cell" style="left:795px;top:290px;width:38px;height:38px;line-height:36px;background:#dba480;"><b>26,0</b></div>
<div class="cell" style="left:833px;top:290px;width:38px;height:38px;line-height:36px;background:#dba480;"><b>26,0</b></div>
<div class="cell" style="left:871px;top:290px;width:37px;height:38px;line-height:36px;background:#dba480;"><b>26,0</b></div>
<div class="cell" style="left:908px;top:290px;width:38px;height:38px;line-height:36px;background:#dba480;"><b>26,0</b></div>
<div class="hd" style="left:946px;top:290px;width:57px;height:38px;line-height:35px">60</div>
<div class="cell" style="left:193px;top:328px;width:37px;height:37px;line-height:35px;background:linear-gradient(90deg,#8080ff,#8089f6);padding-left:2px;"><b>2,0</b></div>
<div class="cell" style="left:230px;top:328px;width:38px;height:37px;line-height:35px;background:linear-gradient(90deg,#80a8d7,#80b6c9);"><b>7,5</b></div>
<div class="cell" style="left:268px;top:328px;width:37px;height:37px;line-height:35px;background:linear-gradient(90deg,#80c4bb,#80cab5);"><b>10,0</b></div>
<div class="cell" style="left:305px;top:328px;width:38px;height:37px;line-height:35px;background:#80d2ad;"><b>11,0</b></div>
<div class="cell" style="left:343px;top:328px;width:38px;height:37px;line-height:35px;background:#80d2ad;"><b>11,0</b></div>
<div class="cell" style="left:381px;top:328px;width:38px;height:37px;line-height:35px;background:linear-gradient(90deg,#80d5aa,#80dea1);"><b>11,5</b></div>
<div class="cell" style="left:419px;top:328px;width:37px;height:37px;line-height:35px;background:linear-gradient(90deg,#80f788,#89f680);"><b>16,0</b></div>
<div class="cell" style="left:456px;top:328px;width:38px;height:37px;line-height:35px;background:linear-gradient(90deg,#a5da80,#b3cc80);"><b>21,0</b></div>
<div class="cell" style="left:494px;top:328px;width:38px;height:37px;line-height:35px;background:linear-gradient(90deg,#c3bc80,#cab580);"><b>24,0</b></div>
<div class="cell" style="left:532px;top:328px;width:37px;height:37px;line-height:35px;background:#d2ad80;"><b>25,0</b></div>
<div class="cell" style="left:569px;top:328px;width:38px;height:37px;line-height:35px;background:#d2ad80;"><b>25,0</b></div>
<div class="cell" style="left:607px;top:328px;width:38px;height:37px;line-height:35px;background:#d2ad80;"><b>25,0</b></div>
<div class="cell" style="left:645px;top:328px;width:37px;height:37px;line-height:35px;background:#d2ad80;"><b>25,0</b></div>
<div class="cell" style="left:682px;top:328px;width:38px;height:37px;line-height:35px;background:#dba480;"><b>26,0</b></div>
<div class="cell" style="left:720px;top:328px;width:38px;height:37px;line-height:35px;background:#dba480;"><b>26,0</b></div>
<div class="cell" style="left:758px;top:328px;width:37px;height:37px;line-height:35px;background:#dba480;"><b>26,0</b></div>
<div class="cell" style="left:795px;top:328px;width:38px;height:37px;line-height:35px;background:#dba480;"><b>26,0</b></div>
<div class="cell" style="left:833px;top:328px;width:38px;height:37px;line-height:35px;background:#dba480;"><b>26,0</b></div>
<div class="cell" style="left:871px;top:328px;width:37px;height:37px;line-height:35px;background:#dba480;"><b>26,0</b></div>
<div class="cell" style="left:908px;top:328px;width:38px;height:37px;line-height:35px;background:#dba480;"><b>26,0</b></div>
<div class="hd" style="left:946px;top:328px;width:57px;height:37px;line-height:34px">50</div>
<div class="cell" style="left:193px;top:365px;width:37px;height:38px;line-height:36px;background:linear-gradient(90deg,#8080ff,#8089f6);padding-left:2px;"><b>2,0</b></div>
<div class="cell" style="left:230px;top:365px;width:38px;height:38px;line-height:36px;background:linear-gradient(90deg,#80a8d7,#80b6c9);"><b>7,5</b></div>
<div class="cell" style="left:268px;top:365px;width:37px;height:38px;line-height:36px;background:linear-gradient(90deg,#80c4bb,#80cab5);"><b>10,0</b></div>
<div class="cell" style="left:305px;top:365px;width:38px;height:38px;line-height:36px;background:#80d2ad;"><b>11,0</b></div>
<div class="cell" style="left:343px;top:365px;width:38px;height:38px;line-height:36px;background:#80d2ad;"><b>11,0</b></div>
<div class="cell" style="left:381px;top:365px;width:38px;height:38px;line-height:36px;background:linear-gradient(90deg,#80d5aa,#80dea1);"><b>11,5</b></div>
<div class="cell" style="left:419px;top:365px;width:37px;height:38px;line-height:36px;background:linear-gradient(90deg,#80f788,#89f680);"><b>16,0</b></div>
<div class="cell" style="left:456px;top:365px;width:38px;height:38px;line-height:36px;background:linear-gradient(90deg,#a5da80,#b3cc80);"><b>21,0</b></div>
<div class="cell" style="left:494px;top:365px;width:38px;height:38px;line-height:36px;background:linear-gradient(90deg,#c3bc80,#cab580);"><b>24,0</b></div>
<div class="cell" style="left:532px;top:365px;width:37px;height:38px;line-height:36px;background:#d2ad80;"><b>25,0</b></div>
<div class="cell" style="left:569px;top:365px;width:38px;height:38px;line-height:36px;background:#d2ad80;"><b>25,0</b></div>
<div class="cell" style="left:607px;top:365px;width:38px;height:38px;line-height:36px;background:#d2ad80;"><b>25,0</b></div>
<div class="cell" style="left:645px;top:365px;width:37px;height:38px;line-height:36px;background:#d2ad80;"><b>25,0</b></div>
<div class="cell" style="left:682px;top:365px;width:38px;height:38px;line-height:36px;background:#dba480;"><b>26,0</b></div>
<div class="cell" style="left:720px;top:365px;width:38px;height:38px;line-height:36px;background:#dba480;"><b>26,0</b></div>
<div class="cell" style="left:758px;top:365px;width:37px;height:38px;line-height:36px;background:#dba480;"><b>26,0</b></div>
<div class="cell" style="left:795px;top:365px;width:38px;height:38px;line-height:36px;background:#dba480;"><b>26,0</b></div>
<div class="cell" style="left:833px;top:365px;width:38px;height:38px;line-height:36px;background:#dba480;"><b>26,0</b></div>
<div class="cell" style="left:871px;top:365px;width:37px;height:38px;line-height:36px;background:#dba480;"><b>26,0</b></div>
<div class="cell" style="left:908px;top:365px;width:38px;height:38px;line-height:36px;background:#dba480;"><b>26,0</b></div>
<div class="hd" style="left:946px;top:365px;width:57px;height:38px;line-height:35px">40</div>
<div class="cell" style="left:193px;top:403px;width:37px;height:38px;line-height:36px;background:linear-gradient(90deg,#8080ff,#8089f6);padding-left:2px;"><b>2,0</b></div>
<div class="cell" style="left:230px;top:403px;width:38px;height:38px;line-height:36px;background:linear-gradient(90deg,#80a8d7,#80b6c9);"><b>7,5</b></div>
<div class="cell" style="left:268px;top:403px;width:37px;height:38px;line-height:36px;background:linear-gradient(90deg,#80c4bb,#80cab5);"><b>10,0</b></div>
<div class="cell" style="left:305px;top:403px;width:38px;height:38px;line-height:36px;background:#80d2ad;"><b>11,0</b></div>
<div class="cell" style="left:343px;top:403px;width:38px;height:38px;line-height:36px;background:#80d2ad;"><b>11,0</b></div>
<div class="cell" style="left:381px;top:403px;width:38px;height:38px;line-height:36px;background:linear-gradient(90deg,#80d5aa,#80dea1);"><b>11,5</b></div>
<div class="cell" style="left:419px;top:403px;width:37px;height:38px;line-height:36px;background:linear-gradient(90deg,#80f788,#89f680);"><b>16,0</b></div>
<div class="cell" style="left:456px;top:403px;width:38px;height:38px;line-height:36px;background:linear-gradient(90deg,#a5da80,#b3cc80);"><b>21,0</b></div>
<div class="cell" style="left:494px;top:403px;width:38px;height:38px;line-height:36px;background:linear-gradient(90deg,#c3bc80,#cab580);"><b>24,0</b></div>
<div class="cell" style="left:532px;top:403px;width:37px;height:38px;line-height:36px;background:#d2ad80;"><b>25,0</b></div>
<div class="cell" style="left:569px;top:403px;width:38px;height:38px;line-height:36px;background:#d2ad80;"><b>25,0</b></div>
<div class="cell" style="left:607px;top:403px;width:38px;height:38px;line-height:36px;background:#d2ad80;"><b>25,0</b></div>
<div class="cell" style="left:645px;top:403px;width:37px;height:38px;line-height:36px;background:#d2ad80;"><b>25,0</b></div>
<div class="cell" style="left:682px;top:403px;width:38px;height:38px;line-height:36px;background:#dba480;"><b>26,0</b></div>
<div class="cell" style="left:720px;top:403px;width:38px;height:38px;line-height:36px;background:#dba480;"><b>26,0</b></div>
<div class="cell" style="left:758px;top:403px;width:37px;height:38px;line-height:36px;background:#dba480;"><b>26,0</b></div>
<div class="cell" style="left:795px;top:403px;width:38px;height:38px;line-height:36px;background:#dba480;"><b>26,0</b></div>
<div class="cell" style="left:833px;top:403px;width:38px;height:38px;line-height:36px;background:#dba480;"><b>26,0</b></div>
<div class="cell" style="left:871px;top:403px;width:37px;height:38px;line-height:36px;background:#dba480;"><b>26,0</b></div>
<div class="cell" style="left:908px;top:403px;width:38px;height:38px;line-height:36px;background:#dba480;"><b>26,0</b></div>
<div class="hd" style="left:946px;top:403px;width:57px;height:38px;line-height:35px">30</div>
<div class="cell" style="left:193px;top:441px;width:37px;height:37px;line-height:35px;background:linear-gradient(90deg,#8080ff,#8089f6);padding-left:2px;"><b>2,0</b></div>
<div class="cell" style="left:230px;top:441px;width:38px;height:37px;line-height:35px;background:linear-gradient(90deg,#80a8d7,#80b6c9);"><b>7,5</b></div>
<div class="cell" style="left:268px;top:441px;width:37px;height:37px;line-height:35px;background:linear-gradient(90deg,#80c4bb,#80cab5);"><b>10,0</b></div>
<div class="cell" style="left:305px;top:441px;width:38px;height:37px;line-height:35px;background:#80d2ad;"><b>11,0</b></div>
<div class="cell" style="left:343px;top:441px;width:38px;height:37px;line-height:35px;background:linear-gradient(90deg,#80d2ad,#80d3ac);"><b>11,0</b></div>
<div class="cell" style="left:381px;top:441px;width:38px;height:37px;line-height:35px;background:linear-gradient(90deg,#80d5aa,#80dea1);"><b>11,5</b></div>
<div class="cell" style="left:419px;top:441px;width:37px;height:37px;line-height:35px;background:linear-gradient(90deg,#80f788,#89f680);"><b>16,0</b></div>
<div class="cell" style="left:456px;top:441px;width:38px;height:37px;line-height:35px;background:linear-gradient(90deg,#a5da80,#b3cc80);"><b>21,0</b></div>
<div class="cell" style="left:494px;top:441px;width:38px;height:37px;line-height:35px;background:linear-gradient(90deg,#c3bc80,#cab580);"><b>24,0</b></div>
<div class="cell" style="left:532px;top:441px;width:37px;height:37px;line-height:35px;background:#d2ad80;"><b>25,0</b></div>
<div class="cell" style="left:569px;top:441px;width:38px;height:37px;line-height:35px;background:#d2ad80;"><b>25,0</b></div>
<div class="cell" style="left:607px;top:441px;width:38px;height:37px;line-height:35px;background:#d2ad80;"><b>25,0</b></div>
<div class="cell" style="left:645px;top:441px;width:37px;height:37px;line-height:35px;background:linear-gradient(90deg,#d2ad80,#d3ac80);"><b>25,0</b></div>
<div class="cell" style="left:682px;top:441px;width:38px;height:37px;line-height:35px;background:#dba480;"><b>26,0</b></div>
<div class="cell" style="left:720px;top:441px;width:38px;height:37px;line-height:35px;background:#dba480;"><b>26,0</b></div>
<div class="cell" style="left:758px;top:441px;width:37px;height:37px;line-height:35px;background:#dba480;"><b>26,0</b></div>
<div class="cell" style="left:795px;top:441px;width:38px;height:37px;line-height:35px;background:#dba480;"><b>26,0</b></div>
<div class="cell" style="left:833px;top:441px;width:38px;height:37px;line-height:35px;background:#dba480;"><b>26,0</b></div>
<div class="cell" style="left:871px;top:441px;width:37px;height:37px;line-height:35px;background:#dba480;"><b>26,0</b></div>
<div class="cell" style="left:908px;top:441px;width:38px;height:37px;line-height:35px;background:#dba480;"><b>26,0</b></div>
<div class="hd" style="left:946px;top:441px;width:57px;height:37px;line-height:34px">25</div>
<div class="cell" style="left:193px;top:478px;width:37px;height:38px;line-height:36px;background:linear-gradient(90deg,#8080ff,#8089f6);padding-left:2px;"><i style="background:linear-gradient(90deg,#808cf3,#8097e8)"></i><b>2,0</b></div>
<div class="cell" style="left:230px;top:478px;width:38px;height:38px;line-height:36px;background:linear-gradient(90deg,#80a8d7,#80b6c9);"><i style="background:linear-gradient(90deg,#80b6c9,#81c1bc)"></i><b>7,5</b></div>
<div class="cell" style="left:268px;top:478px;width:37px;height:38px;line-height:36px;background:linear-gradient(90deg,#80c4bb,#80cab5);"><i style="background:linear-gradient(90deg,#81cfae,#81d2ab)"></i><b>10,0</b></div>
<div class="cell" style="left:305px;top:478px;width:38px;height:38px;line-height:36px;background:linear-gradient(180deg,#80d0af,#81d8a6);"><b>11,0</b></div>
<div class="cell" style="left:343px;top:478px;width:38px;height:38px;line-height:36px;background:linear-gradient(90deg,#80d2ad,#80d4ab);"><i style="background:linear-gradient(90deg,#80d9a6,#83d8a4)"></i><b>11,0</b></div>
<div class="cell" style="left:381px;top:478px;width:38px;height:38px;line-height:36px;background:linear-gradient(90deg,#80e29d,#80ea94);"><i style="background:linear-gradient(90deg,#83e696,#87e890)"></i><b>13,5</b></div>
<div class="cell" style="left:419px;top:478px;width:37px;height:38px;line-height:36px;background:linear-gradient(90deg,#83f686,#8cf380);"><i style="background:linear-gradient(90deg,#8af382,#90ef80)"></i><b>16,5</b></div>
<div class="cell" style="left:456px;top:478px;width:38px;height:38px;line-height:36px;background:linear-gradient(90deg,#a5da80,#b3cc80);"><i style="background:linear-gradient(90deg,#a9d680,#b3cc80)"></i><b>21,0</b></div>
<div class="cell" style="left:494px;top:478px;width:38px;height:38px;line-height:36px;background:linear-gradient(90deg,#c3bc80,#cab580);"><b>24,0</b></div>
<div class="cell" style="left:532px;top:478px;width:37px;height:38px;line-height:36px;background:#d2ad80;"><b>25,0</b></div>
<div class="cell" style="left:569px;top:478px;width:38px;height:38px;line-height:36px;background:linear-gradient(90deg,#d5aa80,#d6a980);"><i style="background:linear-gradient(90deg,#d6a980,#d9a680)"></i><b>25,5</b></div>
<div class="cell" style="left:607px;top:478px;width:38px;height:38px;line-height:36px;background:#dba480;"><b>26,0</b></div>
<div class="cell" style="left:645px;top:478px;width:37px;height:38px;line-height:36px;background:linear-gradient(180deg,#d9a680,#dca380);"><b>26,0</b></div>
<div class="cell" style="left:682px;top:478px;width:38px;height:38px;line-height:36px;background:linear-gradient(180deg,#daa580,#dda280);"><b>26,0</b></div>
<div class="cell" style="left:720px;top:478px;width:38px;height:38px;line-height:36px;background:linear-gradient(180deg,#dba480,#dea180);"><b>26,0</b></div>
<div class="cell" style="left:758px;top:478px;width:37px;height:38px;line-height:36px;background:linear-gradient(180deg,#dba480,#dea180);"><b>26,0</b></div>
<div class="cell" style="left:795px;top:478px;width:38px;height:38px;line-height:36px;background:linear-gradient(180deg,#dba480,#dea180);"><b>26,0</b></div>
<div class="cell" style="left:833px;top:478px;width:38px;height:38px;line-height:36px;background:linear-gradient(180deg,#dba480,#dea180);"><b>26,0</b></div>
<div class="cell" style="left:871px;top:478px;width:37px;height:38px;line-height:36px;background:linear-gradient(180deg,#dba480,#dea180);"><b>26,0</b></div>
<div class="cell" style="left:908px;top:478px;width:38px;height:38px;line-height:36px;background:linear-gradient(180deg,#dba480,#dea180);"><b>26,0</b></div>
<div class="hd" style="left:946px;top:478px;width:57px;height:38px;line-height:35px">20</div>
<div class="cell" style="left:193px;top:516px;width:37px;height:38px;line-height:36px;background:linear-gradient(90deg,#80b3cc,#80bec1);padding-left:2px;"><i style="background:linear-gradient(90deg,#80c0c0,#80ccb3)"></i><b>9,0</b></div>
<div class="cell" style="left:230px;top:516px;width:38px;height:38px;line-height:36px;background:linear-gradient(90deg,#80e699,#81f18c);"><i style="background:linear-gradient(90deg,#80f38c,#83fc80)"></i><b>16,0</b></div>
<div class="cell" style="left:268px;top:516px;width:37px;height:38px;line-height:36px;background:linear-gradient(90deg,#8ae98c,#8aec89);"><i style="background:linear-gradient(90deg,#8bf480,#8bf480)"></i><b>17,5</b></div>
<div class="cell" style="left:305px;top:516px;width:38px;height:38px;line-height:36px;background:linear-gradient(90deg,#81f489,#80f58a);"><i style="background:linear-gradient(90deg,#83fc80,#80fd82)"></i><b>16,0</b></div>
<div class="cell" style="left:343px;top:516px;width:38px;height:38px;line-height:36px;background:linear-gradient(90deg,#80ed92,#83ec90);"><i style="background:linear-gradient(90deg,#80f48b,#89ec8b)"></i><b>14,5</b></div>
<div class="cell" style="left:381px;top:516px;width:38px;height:38px;line-height:36px;background:linear-gradient(90deg,#97e188,#9be282);"><i style="background:linear-gradient(90deg,#9ce182,#a6d980)"></i><b>19,5</b></div>
<div class="cell" style="left:419px;top:516px;width:37px;height:38px;line-height:36px;background:linear-gradient(90deg,#9ddf82,#a4db80);"><i style="background:linear-gradient(90deg,#a9d680,#aed180)"></i><b>20,0</b></div>
<div class="cell" style="left:456px;top:516px;width:38px;height:38px;line-height:36px;background:linear-gradient(90deg,#afd080,#b9c680);"><i style="background:linear-gradient(90deg,#b9c680,#c1be80)"></i><b>22,0</b></div>
<div class="cell" style="left:494px;top:516px;width:38px;height:38px;line-height:36px;background:linear-gradient(90deg,#c4bb80,#cab580);"><i style="background:linear-gradient(90deg,#ccb380,#d0af80)"></i><b>24,0</b></div>
<div class="cell" style="left:532px;top:516px;width:37px;height:38px;line-height:36px;background:linear-gradient(90deg,#d0af80,#d3ac80);"><i style="background:linear-gradient(90deg,#d6a980,#d8a780)"></i><b>25,0</b></div>
<div class="cell" style="left:569px;top:516px;width:38px;height:38px;line-height:36px;background:linear-gradient(90deg,#dca380,#dea180);"><i style="background:linear-gradient(90deg,#e19e80,#e29d80)"></i><b>26,5</b></div>
<div class="cell" style="left:607px;top:516px;width:38px;height:38px;line-height:36px;background:linear-gradient(180deg,#e19e80,#e59a80);"><b>27,0</b></div>
<div class="cell" style="left:645px;top:516px;width:37px;height:38px;line-height:36px;background:linear-gradient(180deg,#e29d80,#e69980);"><b>27,0</b></div>
<div class="cell" style="left:682px;top:516px;width:38px;height:38px;line-height:36px;background:linear-gradient(180deg,#e99680,#ec9380);"><b>28,0</b></div>
<div class="cell" style="left:720px;top:516px;width:38px;height:38px;line-height:36px;background:linear-gradient(180deg,#e99680,#ed9280);"><b>28,0</b></div>
<div class="cell" style="left:758px;top:516px;width:37px;height:38px;line-height:36px;background:linear-gradient(180deg,#e99680,#ed9280);"><b>28,0</b></div>
<div class="cell" style="left:795px;top:516px;width:38px;height:38px;line-height:36px;background:linear-gradient(180deg,#e99680,#ed9280);"><b>28,0</b></div>
<div class="cell" style="left:833px;top:516px;width:38px;height:38px;line-height:36px;background:linear-gradient(180deg,#e99680,#ed9280);"><b>28,0</b></div>
<div class="cell" style="left:871px;top:516px;width:37px;height:38px;line-height:36px;background:linear-gradient(180deg,#e99680,#ed9280);"><b>28,0</b></div>
<div class="cell" style="left:908px;top:516px;width:38px;height:38px;line-height:36px;background:linear-gradient(180deg,#e99680,#ed9280);"><b>28,0</b></div>
<div class="hd" style="left:946px;top:516px;width:57px;height:38px;line-height:35px">14</div>
<div class="cell" style="left:193px;top:554px;width:37px;height:37px;line-height:35px;background:linear-gradient(90deg,#80c0c0,#80ccb3);padding-left:2px;"><b>9,0</b></div>
<div class="cell" style="left:230px;top:554px;width:38px;height:37px;line-height:35px;background:linear-gradient(90deg,#80f38c,#83fc80);"><b>16,0</b></div>
<div class="cell" style="left:268px;top:554px;width:37px;height:37px;line-height:35px;background:linear-gradient(90deg,#8bf480,#8bf480);"><b>17,5</b></div>
<div class="cell" style="left:305px;top:554px;width:38px;height:37px;line-height:35px;background:linear-gradient(90deg,#83fc80,#80fd82);"><i style="background:linear-gradient(90deg,#84fb80,#86f981)"></i><b>16,0</b></div>
<div class="cell" style="left:343px;top:554px;width:38px;height:37px;line-height:35px;background:linear-gradient(90deg,#80f788,#89ef88);"><i style="background:linear-gradient(90deg,#86f386,#90e986)"></i><b>15,0</b></div>
<div class="cell" style="left:381px;top:554px;width:38px;height:37px;line-height:35px;background:linear-gradient(90deg,#add082,#b7c880);"><i style="background:linear-gradient(90deg,#b5ca81,#bec180)"></i><b>22,5</b></div>
<div class="cell" style="left:419px;top:554px;width:37px;height:37px;line-height:35px;background:linear-gradient(90deg,#bdc280,#c2bd80);"><i style="background:linear-gradient(90deg,#c4bb80,#cab580)"></i><b>23,5</b></div>
<div class="cell" style="left:456px;top:554px;width:38px;height:37px;line-height:35px;background:linear-gradient(90deg,#d0af80,#d7a880);"><i style="background:linear-gradient(90deg,#d8a780,#dfa080)"></i><b>26,0</b></div>
<div class="cell" style="left:494px;top:554px;width:38px;height:37px;line-height:35px;background:linear-gradient(90deg,#e39c80,#e79880);"><i style="background:linear-gradient(90deg,#ea9580,#ed9280)"></i><b>28,0</b></div>
<div class="cell" style="left:532px;top:554px;width:37px;height:37px;line-height:35px;background:linear-gradient(90deg,#e79880,#e99680);"><i style="background:linear-gradient(90deg,#ed9280,#ed9280)"></i><b>28,0</b></div>
<div class="cell" style="left:569px;top:554px;width:38px;height:37px;line-height:35px;background:linear-gradient(180deg,#e99680,#ed9280);"><b>28,0</b></div>
<div class="cell" style="left:607px;top:554px;width:38px;height:37px;line-height:35px;background:#ed9280;"><b>28,0</b></div>
<div class="cell" style="left:645px;top:554px;width:37px;height:37px;line-height:35px;background:#ed9280;"><b>28,0</b></div>
<div class="cell" style="left:682px;top:554px;width:38px;height:37px;line-height:35px;background:#ed9280;"><b>28,0</b></div>
<div class="cell" style="left:720px;top:554px;width:38px;height:37px;line-height:35px;background:#ed9280;"><b>28,0</b></div>
<div class="cell" style="left:758px;top:554px;width:37px;height:37px;line-height:35px;background:#ed9280;"><b>28,0</b></div>
<div class="cell" style="left:795px;top:554px;width:38px;height:37px;line-height:35px;background:#ed9280;"><b>28,0</b></div>
<div class="cell" style="left:833px;top:554px;width:38px;height:37px;line-height:35px;background:#ed9280;"><b>28,0</b></div>
<div class="cell" style="left:871px;top:554px;width:37px;height:37px;line-height:35px;background:#ed9280;"><b>28,0</b></div>
<div class="cell" style="left:908px;top:554px;width:38px;height:37px;line-height:35px;background:#ed9280;"><b>28,0</b></div>
<div class="hd" style="left:946px;top:554px;width:57px;height:37px;line-height:34px">10</div>
<div class="cell" style="left:193px;top:591px;width:37px;height:38px;line-height:36px;background:linear-gradient(90deg,#80c0c0,#80ccb3);padding-left:2px;"><b>9,0</b></div>
<div class="cell" style="left:230px;top:591px;width:38px;height:38px;line-height:36px;background:linear-gradient(90deg,#80f38c,#83fc80);"><b>16,0</b></div>
<div class="cell" style="left:268px;top:591px;width:37px;height:38px;line-height:36px;background:linear-gradient(90deg,#8bf480,#8df280);"><i style="background:linear-gradient(90deg,#8bf480,#91ee80)"></i><b>17,5</b></div>
<div class="cell" style="left:305px;top:591px;width:38px;height:38px;line-height:36px;background:linear-gradient(90deg,#90ef80,#91ed81);"><i style="background:linear-gradient(90deg,#93ec80,#9be480)"></i><b>18,0</b></div>
<div class="cell" style="left:343px;top:591px;width:38px;height:38px;line-height:36px;background:linear-gradient(90deg,#9fdf81,#a9d581);"><i style="background:linear-gradient(90deg,#a9d680,#b1ce80)"></i><b>20,5</b></div>
<div class="cell" style="left:381px;top:591px;width:38px;height:38px;line-height:36px;background:linear-gradient(90deg,#bac481,#c4bb80);"><i style="background:linear-gradient(90deg,#c1be80,#c6b980)"></i><b>23,5</b></div>
<div class="cell" style="left:419px;top:591px;width:37px;height:38px;line-height:36px;background:linear-gradient(90deg,#cab580,#cfb080);"><b>24,5</b></div>
<div class="cell" style="left:456px;top:591px;width:38px;height:38px;line-height:36px;background:linear-gradient(90deg,#dba480,#e19e80);"><b>26,5</b></div>
<div class="cell" style="left:494px;top:591px;width:38px;height:38px;line-height:36px;background:linear-gradient(90deg,#ea9580,#ed9280);"><i style="background:linear-gradient(90deg,#ec9380,#ef9080)"></i><b>28,0</b></div>
<div class="cell" style="left:532px;top:591px;width:37px;height:38px;line-height:36px;background:linear-gradient(180deg,#ed9280,#ef9080);"><b>28,0</b></div>
<div class="cell" style="left:569px;top:591px;width:38px;height:38px;line-height:36px;background:linear-gradient(180deg,#ed9280,#f08f80);"><b>28,0</b></div>
<div class="cell" style="left:607px;top:591px;width:38px;height:38px;line-height:36px;background:linear-gradient(180deg,#ed9280,#f08f80);"><b>28,0</b></div>
<div class="cell" style="left:645px;top:591px;width:37px;height:38px;line-height:36px;background:linear-gradient(180deg,#ed9280,#f08f80);"><b>28,0</b></div>
<div class="cell" style="left:682px;top:591px;width:38px;height:38px;line-height:36px;background:linear-gradient(180deg,#ed9280,#f08f80);"><b>28,0</b></div>
<div class="cell" style="left:720px;top:591px;width:38px;height:38px;line-height:36px;background:linear-gradient(180deg,#ed9280,#f08f80);"><b>28,0</b></div>
<div class="cell" style="left:758px;top:591px;width:37px;height:38px;line-height:36px;background:linear-gradient(180deg,#ed9280,#f08f80);"><b>28,0</b></div>
<div class="cell" style="left:795px;top:591px;width:38px;height:38px;line-height:36px;background:linear-gradient(180deg,#ed9280,#f08f80);"><b>28,0</b></div>
<div class="cell" style="left:833px;top:591px;width:38px;height:38px;line-height:36px;background:linear-gradient(180deg,#ed9280,#f08f80);"><b>28,0</b></div>
<div class="cell" style="left:871px;top:591px;width:37px;height:38px;line-height:36px;background:linear-gradient(180deg,#ed9280,#f08f80);"><b>28,0</b></div>
<div class="cell" style="left:908px;top:591px;width:38px;height:38px;line-height:36px;background:linear-gradient(180deg,#ed9280,#f08f80);"><b>28,0</b></div>
<div class="hd" style="left:946px;top:591px;width:57px;height:38px;line-height:35px">7</div>
<div class="cell" style="left:193px;top:629px;width:37px;height:38px;line-height:36px;background:linear-gradient(90deg,#80c0c0,#80ccb3);padding-left:2px;"><b>9,0</b></div>
<div class="cell" style="left:230px;top:629px;width:38px;height:38px;line-height:36px;background:linear-gradient(90deg,#80f38c,#83fc80);"><b>16,0</b></div>
<div class="cell" style="left:268px;top:629px;width:37px;height:38px;line-height:36px;background:linear-gradient(90deg,#8ef180,#93ec80);"><b>18,0</b></div>
<div class="cell" style="left:305px;top:629px;width:38px;height:38px;line-height:36px;background:linear-gradient(90deg,#9fe080,#a6d980);"><i style="background:linear-gradient(90deg,#a0df80,#a8d780)"></i><b>20,0</b></div>
<div class="cell" style="left:343px;top:629px;width:38px;height:38px;line-height:36px;background:linear-gradient(90deg,#bac580,#c1be80);"><i style="background:linear-gradient(90deg,#bcc380,#c4bb80)"></i><b>23,5</b></div>
<div class="cell" style="left:381px;top:629px;width:38px;height:38px;line-height:36px;background:linear-gradient(90deg,#c1be80,#c6b980);"><i style="background:linear-gradient(90deg,#c4bb80,#c9b680)"></i><b>23,5</b></div>
<div class="cell" style="left:419px;top:629px;width:37px;height:38px;line-height:36px;background:linear-gradient(90deg,#cbb480,#d1ae80);"><i style="background:linear-gradient(90deg,#cfb080,#d4ab80)"></i><b>24,5</b></div>
<div class="cell" style="left:456px;top:629px;width:38px;height:38px;line-height:36px;background:linear-gradient(90deg,#dfa080,#e69980);"><i style="background:linear-gradient(90deg,#e29d80,#e89780)"></i><b>27,0</b></div>
<div class="cell" style="left:494px;top:629px;width:38px;height:38px;line-height:36px;background:linear-gradient(90deg,#f18e80,#f58a80);"><i style="background:linear-gradient(90deg,#f38c80,#f88780)"></i><b>29,0</b></div>
<div class="cell" style="left:532px;top:629px;width:37px;height:38px;line-height:36px;background:linear-gradient(180deg,#fb8480,#fd8280);"><b>30,0</b></div>
<div class="cell" style="left:569px;top:629px;width:38px;height:38px;line-height:36px;background:linear-gradient(180deg,#fc8380,#ff8080);"><b>30,0</b></div>
<div class="cell" style="left:607px;top:629px;width:38px;height:38px;line-height:36px;background:linear-gradient(180deg,#fc8380,#ff8080);"><b>30,0</b></div>
<div class="cell" style="left:645px;top:629px;width:37px;height:38px;line-height:36px;background:linear-gradient(180deg,#fc8380,#ff8080);"><b>30,0</b></div>
<div class="cell" style="left:682px;top:629px;width:38px;height:38px;line-height:36px;background:linear-gradient(180deg,#fc8380,#ff8080);"><b>30,0</b></div>
<div class="cell" style="left:720px;top:629px;width:38px;height:38px;line-height:36px;background:linear-gradient(180deg,#fc8380,#ff8080);"><b>30,0</b></div>
<div class="cell" style="left:758px;top:629px;width:37px;height:38px;line-height:36px;background:linear-gradient(180deg,#fc8380,#ff8080);"><b>30,0</b></div>
<div class="cell" style="left:795px;top:629px;width:38px;height:38px;line-height:36px;background:linear-gradient(180deg,#fc8380,#ff8080);"><b>30,0</b></div>
<div class="cell" style="left:833px;top:629px;width:38px;height:38px;line-height:36px;background:linear-gradient(180deg,#fc8380,#ff8080);"><b>30,0</b></div>
<div class="cell" style="left:871px;top:629px;width:37px;height:38px;line-height:36px;background:linear-gradient(180deg,#fc8380,#ff8080);"><b>30,0</b></div>
<div class="cell" style="left:908px;top:629px;width:38px;height:38px;line-height:36px;background:linear-gradient(180deg,#fc8380,#ff8080);"><b>30,0</b></div>
<div class="hd" style="left:946px;top:629px;width:57px;height:38px;line-height:35px">5</div>
<div class="cell" style="left:193px;top:667px;width:37px;height:37px;line-height:35px;background:linear-gradient(90deg,#80c0c0,#80ccb3);padding-left:2px;"><b>9,0</b></div>
<div class="cell" style="left:230px;top:667px;width:38px;height:37px;line-height:35px;background:linear-gradient(90deg,#80f38c,#83fc80);"><b>16,0</b></div>
<div class="cell" style="left:268px;top:667px;width:37px;height:37px;line-height:35px;background:linear-gradient(90deg,#8ff080,#95ea80);"><i style="background:linear-gradient(90deg,#8ff080,#90ef80)"></i><b>18,0</b></div>
<div class="cell" style="left:305px;top:667px;width:38px;height:37px;line-height:35px;background:linear-gradient(90deg,#9ae580,#a3dc80);"><i style="background:linear-gradient(90deg,#96e980,#9ae580)"></i><b>19,0</b></div>
<div class="cell" style="left:343px;top:667px;width:38px;height:37px;line-height:35px;background:linear-gradient(90deg,#b3cc80,#bcc380);"><i style="background:linear-gradient(90deg,#abd480,#b7c880)"></i><b>22,0</b></div>
<div class="cell" style="left:381px;top:667px;width:38px;height:37px;line-height:35px;background:linear-gradient(90deg,#d0af80,#d4ab80);"><i style="background:linear-gradient(90deg,#cbb480,#ceb180)"></i><b>25,5</b></div>
<div class="cell" style="left:419px;top:667px;width:37px;height:37px;line-height:35px;background:linear-gradient(90deg,#daa580,#dfa080);"><i style="background:linear-gradient(90deg,#d4ab80,#cfaf81)"></i><b>26,5</b></div>
<div class="cell" style="left:456px;top:667px;width:38px;height:37px;line-height:35px;background:linear-gradient(90deg,#e89780,#ee9180);"><i style="background:linear-gradient(90deg,#d8a681,#d9a482)"></i><b>28,0</b></div>
<div class="cell" style="left:494px;top:667px;width:38px;height:37px;line-height:35px;background:linear-gradient(90deg,#f38c80,#f88780);"><i style="background:linear-gradient(90deg,#df9f82,#e09d82)"></i><b>29,0</b></div>
<div class="cell" style="left:532px;top:667px;width:37px;height:37px;line-height:35px;background:linear-gradient(180deg,#fd8280,#e69782);"><b>30,0</b></div>
<div class="cell" style="left:569px;top:667px;width:38px;height:37px;line-height:35px;background:linear-gradient(180deg,#ff8080,#e79682);"><b>30,0</b></div>
<div class="cell" style="left:607px;top:667px;width:38px;height:37px;line-height:35px;background:linear-gradient(180deg,#ff8080,#e79682);"><b>30,0</b></div>
<div class="cell" style="left:645px;top:667px;width:37px;height:37px;line-height:35px;background:linear-gradient(180deg,#ff8080,#e79682);"><b>30,0</b></div>
<div class="cell" style="left:682px;top:667px;width:38px;height:37px;line-height:35px;background:linear-gradient(180deg,#ff8080,#e79682);"><b>30,0</b></div>
<div class="cell" style="left:720px;top:667px;width:38px;height:37px;line-height:35px;background:linear-gradient(180deg,#ff8080,#e79682);"><b>30,0</b></div>
<div class="cell" style="left:758px;top:667px;width:37px;height:37px;line-height:35px;background:linear-gradient(180deg,#ff8080,#e79682);"><b>30,0</b></div>
<div class="cell" style="left:795px;top:667px;width:38px;height:37px;line-height:35px;background:linear-gradient(180deg,#ff8080,#e79682);"><b>30,0</b></div>
<div class="cell" style="left:833px;top:667px;width:38px;height:37px;line-height:35px;background:linear-gradient(180deg,#ff8080,#e79682);"><b>30,0</b></div>
<div class="cell" style="left:871px;top:667px;width:37px;height:37px;line-height:35px;background:linear-gradient(180deg,#ff8080,#e79682);"><b>30,0</b></div>
<div class="cell" style="left:908px;top:667px;width:38px;height:37px;line-height:35px;background:linear-gradient(180deg,#ff8080,#e79682);"><b>30,0</b></div>
<div class="hd" style="left:946px;top:667px;width:57px;height:37px;line-height:34px">2</div>
<div class="cell" style="left:193px;top:704px;width:37px;height:38px;line-height:36px;background:#80c9b6;padding-left:2px;background:#2d6e5f;color:#fff;border-top:1px solid #fff;line-height:34px;"><b>10,0</b></div>
<div class="cell" style="left:230px;top:704px;width:38px;height:38px;line-height:36px;background:linear-gradient(90deg,#86ed8b,#89f680);"><b>17,0</b></div>
<div class="cell" style="left:268px;top:704px;width:37px;height:38px;line-height:36px;background:#89f680;"><b>17,0</b></div>
<div class="cell" style="left:305px;top:704px;width:38px;height:38px;line-height:36px;background:linear-gradient(90deg,#85fa80,#89f680);"><i style="background:linear-gradient(90deg,#82fd80,#83fc80)"></i><b>16,0</b></div>
<div class="cell" style="left:343px;top:704px;width:38px;height:38px;line-height:36px;background:linear-gradient(90deg,#91ee80,#9ee180);"><i style="background:linear-gradient(90deg,#8bf480,#98e780)"></i><b>17,5</b></div>
<div class="cell" style="left:381px;top:704px;width:38px;height:38px;line-height:36px;background:linear-gradient(90deg,#bfc080,#c3bc80);"><i style="background:linear-gradient(90deg,#bac580,#b9c680)"></i><b>23,5</b></div>
<div class="cell" style="left:419px;top:704px;width:37px;height:38px;line-height:36px;background:linear-gradient(90deg,#9ee180,#9ae481);"><i style="background:linear-gradient(90deg,#94eb80,#87f682)"></i><b>17,0</b></div>
<div class="cell" style="left:456px;top:704px;width:38px;height:38px;line-height:36px;background:linear-gradient(90deg,#94e486,#96e287);"><i style="background:linear-gradient(90deg,#82f687,#80f689)"></i><b>15,0</b></div>
<div class="cell" style="left:494px;top:704px;width:38px;height:38px;line-height:36px;background:linear-gradient(180deg,#96e287,#80f689);"><b>15,0</b></div>
<div class="cell" style="left:532px;top:704px;width:37px;height:38px;line-height:36px;background:linear-gradient(180deg,#97e087,#80f689);"><b>15,0</b></div>
<div class="cell" style="left:569px;top:704px;width:38px;height:38px;line-height:36px;background:linear-gradient(180deg,#98e087,#80f689);"><b>15,0</b></div>
<div class="cell" style="left:607px;top:704px;width:38px;height:38px;line-height:36px;background:linear-gradient(180deg,#98e087,#80f689);"><b>15,0</b></div>
<div class="cell" style="left:645px;top:704px;width:37px;height:38px;line-height:36px;background:linear-gradient(180deg,#98e087,#80f689);"><b>15,0</b></div>
<div class="cell" style="left:682px;top:704px;width:38px;height:38px;line-height:36px;background:linear-gradient(180deg,#98e087,#80f689);"><b>15,0</b></div>
<div class="cell" style="left:720px;top:704px;width:38px;height:38px;line-height:36px;background:linear-gradient(180deg,#98e087,#80f689);"><b>15,0</b></div>
<div class="cell" style="left:758px;top:704px;width:37px;height:38px;line-height:36px;background:linear-gradient(180deg,#98e087,#80f689);"><b>15,0</b></div>
<div class="cell" style="left:795px;top:704px;width:38px;height:38px;line-height:36px;background:linear-gradient(180deg,#98e087,#80f689);"><b>15,0</b></div>
<div class="cell" style="left:833px;top:704px;width:38px;height:38px;line-height:36px;background:linear-gradient(180deg,#98e087,#80f689);"><b>15,0</b></div>
<div class="cell" style="left:871px;top:704px;width:37px;height:38px;line-height:36px;background:linear-gradient(180deg,#98e087,#80f689);"><b>15,0</b></div>
<div class="cell" style="left:908px;top:704px;width:38px;height:38px;line-height:36px;background:linear-gradient(180deg,#98e087,#80f689);"><b>15,0</b></div>
<div class="hd" style="left:946px;top:704px;width:57px;height:38px;line-height:35px">0</div>
<div class="hd" style="left:193px;top:742px;width:37px;height:39px;line-height:34px">300</div>
<div class="hd" style="left:230px;top:742px;width:38px;height:39px;line-height:34px">700</div>
<div class="hd" style="left:268px;top:742px;width:37px;height:39px;line-height:34px">1000</div>
<div class="hd" style="left:305px;top:742px;width:38px;height:39px;line-height:34px">1300</div>
<div class="hd" style="left:343px;top:742px;width:38px;height:39px;line-height:34px">1700</div>
<div class="hd" style="left:381px;top:742px;width:38px;height:39px;line-height:34px">2000</div>
<div class="hd" style="left:419px;top:742px;width:37px;height:39px;line-height:34px">2500</div>
<div class="hd" style="left:456px;top:742px;width:38px;height:39px;line-height:34px">3000</div>
<div class="hd" style="left:494px;top:742px;width:38px;height:39px;line-height:34px">3500</div>
<div class="hd" style="left:532px;top:742px;width:37px;height:39px;line-height:34px">4000</div>
<div class="hd" style="left:569px;top:742px;width:38px;height:39px;line-height:34px">4500</div>
<div class="hd" style="left:607px;top:742px;width:38px;height:39px;line-height:34px">5000</div>
<div class="hd" style="left:645px;top:742px;width:37px;height:39px;line-height:34px">5500</div>
<div class="hd" style="left:682px;top:742px;width:38px;height:39px;line-height:34px">6000</div>
<div class="hd" style="left:720px;top:742px;width:38px;height:39px;line-height:34px">6500</div>
<div class="hd" style="left:758px;top:742px;width:37px;height:39px;line-height:34px">7000</div>
<div class="hd" style="left:795px;top:742px;width:38px;height:39px;line-height:34px">7500</div>
<div class="hd" style="left:833px;top:742px;width:38px;height:39px;line-height:34px">8000</div>
<div class="hd" style="left:871px;top:742px;width:37px;height:39px;line-height:34px">8600</div>
<div class="hd" style="left:908px;top:742px;width:38px;height:39px;line-height:34px">9100</div>
<div class="hd" style="left:946px;top:742px;width:57px;height:39px"></div>
</div>
<div class="a" style="left:193px;top:141px;width:1px;height:600px;background:rgba(0,0,0,.5)"></div>
<div class="a" style="left:193px;top:141px;width:752px;height:1px;background:rgba(0,0,0,.45)"></div>
<div class="a" style="left:945px;top:141px;width:1px;height:640px;background:#000"></div>
<div class="a" style="left:193px;top:741px;width:810px;height:1px;background:#000"></div>
<div class="a" style="left:576px;top:784px;font-size:14.7px;white-space:nowrap">RPM (rpm)</div>
<div class="a" style="left:1015px;top:479px;font-size:14.7px;white-space:nowrap;transform:translate(-50%,-50%) rotate(-90deg)">Throttle position (%)</div>
<div class="a" style="left:211px;top:141px;width:1px;height:601px;background:#d02020"></div><div class="a" style="left:212px;top:141px;width:1px;height:601px;background:#f3c0d0"></div>
<div class="a" style="left:193px;top:722px;width:752px;height:1px;background:#d02020"></div><div class="a" style="left:193px;top:723px;width:752px;height:1px;background:#f3d0c0;opacity:.7"></div>
<div class="a" style="left:180px;top:85px;width:2px;height:759px;background:#8f8f8f"></div>
<div class="a" style="left:1581px;top:86px;width:19px;height:757px;background:#f0f0f0"></div>
<div class="a" style="left:1598px;top:69px;width:2px;height:774px;background:#fafafa"></div>
<div class="a" style="left:1582px;top:109px;width:15px;height:575px;background:#cdcdcd"></div>
<div class="a" style="left:181px;top:825px;width:1401px;height:18px;background:#f0f0f0"></div>
<div class="a" style="left:200px;top:826px;width:1147px;height:15px;background:#cdcdcd"></div>
<svg class="a" style="left:0;top:0" width="1600" height="900" viewBox="0 0 1600 900" fill="none" stroke="#5a5a5a" stroke-width="2"><path d="M1586 97.500L1589.500 94L1593 97.500"/><path d="M1586 814.500L1589.500 818L1593 814.500"/><path d="M193 829.500L189.500 833L193 836.500"/><path d="M1570.500 829.500L1574 833L1570.500 836.500"/></svg>
<div class="a" style="left:0;top:843px;width:1600px;height:17px;background:#d0d0d0;border-top:1px solid #fff"></div>
<svg class="a" style="left:0;top:843px" width="1600" height="17" viewBox="0 843 1600 17" font-family="Liberation Sans, sans-serif" font-weight="bold" font-size="12">
<rect x="2" y="845" width="83" height="14" fill="#000"/>
<rect x="89" y="845" width="111" height="14" fill="#000"/>
<text x="91" y="857.400" textLength="13" lengthAdjust="spacingAndGlyphs" fill="#fff">IS:</text>
<rect x="327" y="845" width="55" height="14" fill="#000"/>
<text x="328" y="857.400" textLength="51" lengthAdjust="spacingAndGlyphs" fill="#fff">TBL SET: 1</text>
<rect x="387" y="845" width="51" height="14" fill="#000"/>
<text x="389" y="857.400" textLength="45" lengthAdjust="spacingAndGlyphs" fill="#fff">CAN Bus</text>
<rect x="442" y="845" width="22" height="14" fill="#000"/>
<text x="443.5" y="857.400" textLength="19" lengthAdjust="spacingAndGlyphs" fill="#fff">CEL</text>
<rect x="469.5" y="845" width="19.5" height="14" fill="#000"/>
<text x="471" y="857.400" textLength="13" lengthAdjust="spacingAndGlyphs" fill="#fff">LC</text>
<rect x="494.5" y="845" width="18.5" height="14" fill="#000"/>
<text x="496" y="857.400" textLength="13" lengthAdjust="spacingAndGlyphs" fill="#fff">FC</text>
<rect x="517.5" y="845" width="18.5" height="14" fill="#000"/>
<text x="519" y="857.400" textLength="13.5" lengthAdjust="spacingAndGlyphs" fill="#fff">SC</text>
<rect x="540" y="845" width="38.5" height="14" fill="#000"/>
<text x="541" y="857.400" textLength="34" lengthAdjust="spacingAndGlyphs" fill="#fff">ALS#1</text>
<rect x="583.5" y="845" width="17.5" height="14" fill="#000"/>
<text x="585" y="857.400" textLength="14" lengthAdjust="spacingAndGlyphs" fill="#fff">KS</text>
<rect x="606" y="845" width="23" height="14" fill="#000"/>
<text x="607.5" y="857.400" textLength="20" lengthAdjust="spacingAndGlyphs" fill="#fff">RAL</text>
<rect x="634" y="845" width="19" height="14" fill="#000"/>
<text x="635.5" y="857.400" textLength="15.5" lengthAdjust="spacingAndGlyphs" fill="#fff">IDL</text>
<rect x="659" y="845" width="18.5" height="14" fill="#000"/>
<text x="660.5" y="857.400" textLength="11.5" lengthAdjust="spacingAndGlyphs" fill="#fff">FP</text>
<rect x="682.5" y="845" width="18" height="14" fill="#000"/>
<text x="684" y="857.400" textLength="13" lengthAdjust="spacingAndGlyphs" fill="#fff">CF</text>
<rect x="705.7" y="845" width="22.3" height="14" fill="#000"/>
<text x="707" y="857.400" textLength="19" lengthAdjust="spacingAndGlyphs" fill="#fff">PO1</text>
<rect x="733" y="845" width="21" height="14" fill="#000"/>
<text x="734" y="857.400" textLength="19" lengthAdjust="spacingAndGlyphs" fill="#fff">PO2</text>
<rect x="759" y="845" width="22" height="14" fill="#000"/>
<text x="760" y="857.400" textLength="19" lengthAdjust="spacingAndGlyphs" fill="#fff">PO3</text>
<rect x="786.4" y="845" width="21.6" height="14" fill="#000"/>
<text x="787.5" y="857.400" textLength="19" lengthAdjust="spacingAndGlyphs" fill="#fff">PO4</text>
<rect x="813" y="845" width="22" height="14" fill="#000"/>
<text x="814" y="857.400" textLength="19.5" lengthAdjust="spacingAndGlyphs" fill="#fff">VO1</text>
<rect x="840.5" y="845" width="22" height="14" fill="#000"/>
<text x="841.5" y="857.400" textLength="20" lengthAdjust="spacingAndGlyphs" fill="#fff">VO2</text>
<rect x="867.5" y="845" width="18" height="14" fill="#000"/>
<text x="869" y="857.400" textLength="14" lengthAdjust="spacingAndGlyphs" fill="#fff">AC</text>
<rect x="890.5" y="845" width="38.3" height="14" fill="#000"/>
<text x="892" y="857.400" textLength="26" lengthAdjust="spacingAndGlyphs" fill="#fff">BST#</text>
<rect x="933" y="845" width="18.7" height="14" fill="#000"/>
<text x="935" y="857.400" textLength="13" lengthAdjust="spacingAndGlyphs" fill="#fff">CL</text>
<rect x="956.5" y="845" width="18.5" height="14" fill="#000"/>
<text x="958" y="857.400" textLength="13" lengthAdjust="spacingAndGlyphs" fill="#fff">SL</text>
<rect x="204" y="845" width="53.500" height="14" fill="#fff"/><text x="207" y="857.400" textLength="36.500" lengthAdjust="spacingAndGlyphs" fill="#000">STATE:</text>
<text x="980.500" y="857.400" textLength="16.500" lengthAdjust="spacingAndGlyphs" fill="#222">FV:</text>
<path d="M1036.500 845V859" stroke="#f4f4f4"/><path d="M1035.500 845V859" stroke="#a0a0a0"/>
<rect x="257.500" y="844.500" width="69" height="15" fill="#ffe9a9" stroke="#000" stroke-width="1"/><text x="259.500" y="856.300" textLength="52.500" lengthAdjust="spacingAndGlyphs" fill="#000">EMU state</text>
</svg>
<div class="a" style="left:0;top:860px;width:1600px;height:40px;background:linear-gradient(#2b371a,#2e3b1c 60%,#3a4826)"></div>
<div class="a" style="left:489px;top:860px;width:48px;height:40px;background:#4b6a25"></div>
<div class="a" style="left:200px;top:898px;width:39px;height:2px;background:#b3d98d"></div>
<div class="a" style="left:395px;top:898px;width:40px;height:2px;background:#b3d98d"></div>
<div class="a" style="left:444px;top:898px;width:40px;height:2px;background:#b3d98d"></div>
<div class="a" style="left:489px;top:898px;width:48px;height:2px;background:#b3d98d"></div>
<svg class="a" style="left:0;top:860px" width="1600" height="40" viewBox="0 860 1600 40">
<path d="M15.500 874.200L22.500 873.200V879.500H15.500ZM23.500 873.100L32.500 871.800V879.500H23.500ZM15.500 880.500H22.500V886.800L15.500 885.800ZM23.500 880.500H32.500V888.200L23.500 886.900Z" fill="#fff"/>
<circle cx="74.500" cy="877.500" r="5.300" fill="none" stroke="#fff" stroke-width="1.400"/><path d="M70.700 881.500L65 887.500" stroke="#fff" stroke-width="1.500"/>
<rect x="114.500" y="873.500" width="11" height="12" fill="none" stroke="#fff" stroke-width="1.300"/><path d="M112.500 875H110.500V884H112.500M127.500 875H129.500V884H127.500" fill="none" stroke="#fff" stroke-width="1.200"/>
<path d="M160.500 880.500C160.500 873.500 165.500 870 171 870C177 870 180.500 874.500 180.500 880V882.500H167C167.500 885.500 170 887 173 887C175.500 887 177.800 886.200 179.500 885V889C177.500 890 175 890.500 172 890.500C165.500 890.500 162 886 162 881C162 877.500 164 874.800 167 873.500C164.500 874.500 161.500 877 160.500 880.500ZM167.200 878.500H174.500C174.500 876 173.200 874.200 170.800 874.200C168.500 874.200 167.400 876.200 167.200 878.500Z" fill="#1f83d8"/>
<path d="M208 872.500H215L216.500 874H229.500V888H208Z" fill="#f3c94e"/><rect x="208" y="875.500" width="21.500" height="12.500" fill="#fbe08c"/><path d="M211.500 888V882.500H226V888H222.500V885.500H215V888Z" fill="#25a4e6"/><rect x="211.500" y="881" width="14.500" height="2" fill="#1380c8"/>
<path d="M258.500 874L277.500 871.500V891.500L258.500 889Z" fill="#fff"/><path d="M263.500 873.500C263.500 868.500 272 867.500 272.500 872.500" fill="none" stroke="#fff" stroke-width="1.200"/><path d="M262 878.200L266.500 877.700V881.300H262ZM267.500 877.600L273.500 877V881.300H267.500ZM262 882.300H266.500V885.900L262 885.400ZM267.500 882.300H273.500V886.600L267.500 886Z" fill="#2b371a"/>
<rect x="306.500" y="871.500" width="19.500" height="17.500" rx="1.500" fill="#4c9bd8" stroke="#8cc4ea" stroke-width="1"/><rect x="322" y="872" width="4" height="16.500" fill="#2f78b8"/><circle cx="315" cy="880.300" r="6.300" fill="#f07c1c"/><circle cx="315" cy="880.300" r="6.300" fill="none" stroke="#f8b070" stroke-width=".8"/><path d="M312.800 876.500L319.500 880.300L312.800 884Z" fill="#fff"/>
<path d="M364 871L377 870V884L366 886Z" fill="#2a5fb8"/><path d="M366 872.500L376 871.500V882.500L367.500 884Z" fill="#3f86d8"/><circle cx="363.500" cy="875.500" r="3.800" fill="#e8b890"/><path d="M359 873.500Q363 870 367.500 873.500L366.500 875Q363 873 359.500 875.500Z" fill="#5a3a1a"/><path d="M355.500 890C355.500 883 359 880 364 880C367 880 368.500 881 370 882.500L374.500 875L376.500 876.500L371.500 886.500Q370 890 366 890Z" fill="#49a8d8"/><path d="M356 886.500Q362 890 370 885.500" fill="none" stroke="#f0c020" stroke-width="1.500"/>
<circle cx="414.800" cy="879.700" r="11.300" fill="#fff"/><path d="M414.800 879.700L405 874A11.300 11.300 0 0 1 424.600 874Z" fill="#db4437"/><path d="M414.800 868.400A11.300 11.300 0 0 1 424.600 874.050H414.800Z" fill="#db4437"/><path d="M424.600 874.050A11.300 11.300 0 0 1 414.300 891L419.500 882.500Z" fill="#ffcd40"/><path d="M414.800 879.700L424.600 874.050A11.300 11.300 0 0 1 414.300 891Z" fill="#ffcd40"/><path d="M405 874.050A11.300 11.300 0 0 0 414.300 891L414.800 879.700Z" fill="#0f9d58"/><circle cx="414.800" cy="879.700" r="5.200" fill="#fff"/><circle cx="414.800" cy="879.700" r="4.100" fill="#4285f4"/>
<path d="M458 869.500H474.500V888.500H458Z" fill="#f4f6fa" stroke="#b8c4d8" stroke-width=".8"/><path d="M462 873H473M462 876H473M462 879H473M462 882H473M462 885H473" stroke="#3a66b0" stroke-width="1.100"/><path d="M452.500 872.500L464.500 870.500V889L452.500 887Z" fill="#2b5fb4"/><path d="M452.500 872.500L464.500 870.500V880L452.500 880Z" fill="#5c8fd8" opacity=".6"/><text x="458.500" y="884" text-anchor="middle" font-family="Liberation Sans, sans-serif" font-weight="bold" font-size="9.500" fill="#fff">W</text>
<path d="M500.500 891V880Q507 872 518 873.500Q524 879 525 891Z" fill="#f1d75f"/><path d="M500.500 891V880Q507 872 518 873.500" fill="none" stroke="#fff3a8" stroke-width="1"/><path d="M503 888.500C506 882 511 880 511.500 883C512 886.500 506 888 509 889C513 890 517 886 519 884.500M511 882.500L521.500 877L523.500 873.500" fill="none" stroke="#0a0a00" stroke-width="1.500"/><path d="M504 890.500H516" stroke="#0a0a00" stroke-width="1.300"/>
<path d="M1382 882.500L1387.500 877L1393 882.500" fill="none" stroke="#fff" stroke-width="1.300"/>
<rect x="1408.500" y="876.500" width="10" height="7" fill="none" stroke="#fff" stroke-width="1.200"/><rect x="1419" y="878.500" width="1.500" height="3" fill="#fff"/><rect x="1410" y="878" width="7" height="4" fill="#fff"/><path d="M1404 876.500H1408M1404 879.500H1408M1405.500 875V881Q1405.500 883 1407.500 883" stroke="#fff" stroke-width="1.200" fill="none"/>
<path d="M1432 887A10 10 0 0 1 1444 875.500M1434.800 887A7.200 7.200 0 0 1 1444 878.500M1437.600 887A4.500 4.500 0 0 1 1444 881.500" fill="none" stroke="#d8d8d8" stroke-width="1.200"/><rect x="1440.500" y="884.500" width="3" height="3" fill="#fff"/>
<path d="M1452 877.500H1455L1459 873.500V886L1455 882H1452Z" fill="none" stroke="#fff" stroke-width="1.200"/><path d="M1461.500 876.500Q1464 879.500 1461.500 883M1464 874.500Q1468 879.500 1464 885" fill="none" stroke="#fff" stroke-width="1.200"/>
<path d="M1476.500 873.500H1491.500V884.500H1486L1484 887L1482 884.500H1476.500Z" fill="none" stroke="#fff" stroke-width="1.200"/><path d="M1479.500 877H1488.500M1479.500 879.500H1488.500M1479.500 882H1486" stroke="#fff" stroke-width="1"/>
<path d="M1595.500 864V900" stroke="#8a9478" stroke-width="1"/>
</svg>
<div class="a" style="left:1533px;top:863px;width:60px;font-size:11.500px;color:#fff;text-align:center;line-height:17px;white-space:nowrap">21:36<br>31.3.2016</div>
<div class="a" style="left:1504px;top:873px;font-size:11.500px;color:#fff">SLV</div>
</body></html>
